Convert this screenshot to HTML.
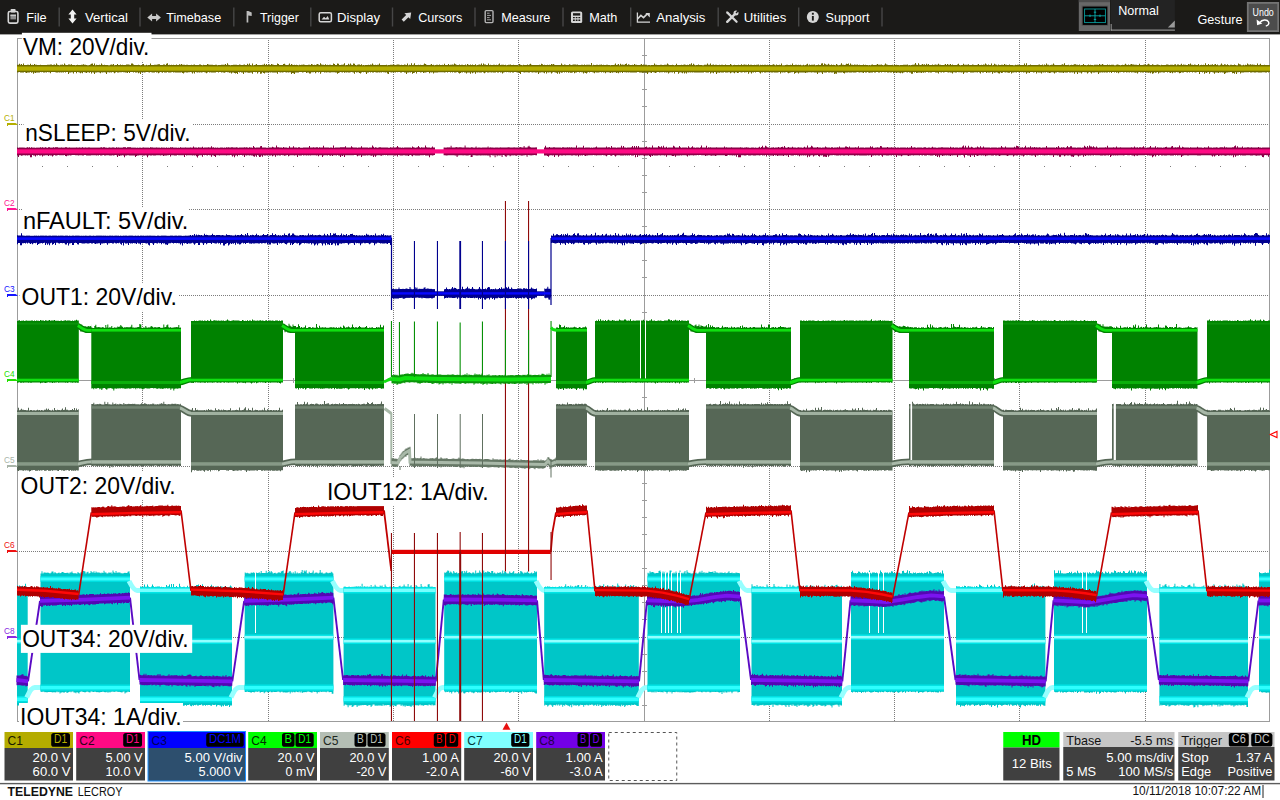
<!DOCTYPE html><html><head><meta charset="utf-8"><title>Teledyne LeCroy oscilloscope capture</title>
<style>html,body{margin:0;padding:0;background:#fff;overflow:hidden}svg{display:block}text{font-family:"Liberation Sans",Arial,sans-serif}</style></head><body>
<svg width="1280" height="800" viewBox="0 0 1280 800">
<rect width="1280" height="800" fill="#fff"/>
<g id="grid">
<rect x="17.5" y="38.5" width="1252" height="683" fill="#fff" stroke="#9c9c9c" stroke-width="1"/>
<line x1="142.5" y1="40" x2="142.5" y2="721" stroke="#7c7c7c" stroke-width="1" stroke-dasharray="1 1"/>
<line x1="268.5" y1="40" x2="268.5" y2="721" stroke="#7c7c7c" stroke-width="1" stroke-dasharray="1 1"/>
<line x1="393.5" y1="40" x2="393.5" y2="721" stroke="#7c7c7c" stroke-width="1" stroke-dasharray="1 1"/>
<line x1="518.5" y1="40" x2="518.5" y2="721" stroke="#7c7c7c" stroke-width="1" stroke-dasharray="1 1"/>
<rect x="644" y="39" width="1" height="682" fill="#9c9c9c"/>
<line x1="769.5" y1="40" x2="769.5" y2="721" stroke="#7c7c7c" stroke-width="1" stroke-dasharray="1 1"/>
<line x1="894.5" y1="40" x2="894.5" y2="721" stroke="#7c7c7c" stroke-width="1" stroke-dasharray="1 1"/>
<line x1="1019.5" y1="40" x2="1019.5" y2="721" stroke="#7c7c7c" stroke-width="1" stroke-dasharray="1 1"/>
<line x1="1145.5" y1="40" x2="1145.5" y2="721" stroke="#7c7c7c" stroke-width="1" stroke-dasharray="1 1"/>
<line x1="19" y1="124.5" x2="1269" y2="124.5" stroke="#7c7c7c" stroke-width="1" stroke-dasharray="1 1"/>
<line x1="19" y1="209.5" x2="1269" y2="209.5" stroke="#7c7c7c" stroke-width="1" stroke-dasharray="1 1"/>
<line x1="19" y1="295.5" x2="1269" y2="295.5" stroke="#7c7c7c" stroke-width="1" stroke-dasharray="1 1"/>
<rect x="18" y="380" width="1251" height="1" fill="#9c9c9c"/>
<line x1="19" y1="466.5" x2="1269" y2="466.5" stroke="#7c7c7c" stroke-width="1" stroke-dasharray="1 1"/>
<line x1="19" y1="551.5" x2="1269" y2="551.5" stroke="#7c7c7c" stroke-width="1" stroke-dasharray="1 1"/>
<line x1="19" y1="637.5" x2="1269" y2="637.5" stroke="#7c7c7c" stroke-width="1" stroke-dasharray="1 1"/>
<rect x="642" y="55" width="5" height="1" fill="#9c9c9c"/>
<rect x="642" y="72" width="5" height="1" fill="#9c9c9c"/>
<rect x="642" y="89" width="5" height="1" fill="#9c9c9c"/>
<rect x="642" y="106" width="5" height="1" fill="#9c9c9c"/>
<rect x="642" y="141" width="5" height="1" fill="#9c9c9c"/>
<rect x="642" y="158" width="5" height="1" fill="#9c9c9c"/>
<rect x="642" y="175" width="5" height="1" fill="#9c9c9c"/>
<rect x="642" y="192" width="5" height="1" fill="#9c9c9c"/>
<rect x="642" y="226" width="5" height="1" fill="#9c9c9c"/>
<rect x="642" y="243" width="5" height="1" fill="#9c9c9c"/>
<rect x="642" y="260" width="5" height="1" fill="#9c9c9c"/>
<rect x="642" y="277" width="5" height="1" fill="#9c9c9c"/>
<rect x="642" y="312" width="5" height="1" fill="#9c9c9c"/>
<rect x="642" y="329" width="5" height="1" fill="#9c9c9c"/>
<rect x="642" y="346" width="5" height="1" fill="#9c9c9c"/>
<rect x="642" y="363" width="5" height="1" fill="#9c9c9c"/>
<rect x="642" y="397" width="5" height="1" fill="#9c9c9c"/>
<rect x="642" y="414" width="5" height="1" fill="#9c9c9c"/>
<rect x="642" y="431" width="5" height="1" fill="#9c9c9c"/>
<rect x="642" y="448" width="5" height="1" fill="#9c9c9c"/>
<rect x="642" y="483" width="5" height="1" fill="#9c9c9c"/>
<rect x="642" y="500" width="5" height="1" fill="#9c9c9c"/>
<rect x="642" y="517" width="5" height="1" fill="#9c9c9c"/>
<rect x="642" y="534" width="5" height="1" fill="#9c9c9c"/>
<rect x="642" y="568" width="5" height="1" fill="#9c9c9c"/>
<rect x="642" y="585" width="5" height="1" fill="#9c9c9c"/>
<rect x="642" y="602" width="5" height="1" fill="#9c9c9c"/>
<rect x="642" y="619" width="5" height="1" fill="#9c9c9c"/>
<rect x="642" y="654" width="5" height="1" fill="#9c9c9c"/>
<rect x="642" y="671" width="5" height="1" fill="#9c9c9c"/>
<rect x="642" y="688" width="5" height="1" fill="#9c9c9c"/>
<rect x="642" y="705" width="5" height="1" fill="#9c9c9c"/>
<rect x="42" y="378" width="1" height="5" fill="#9c9c9c"/>
<rect x="42" y="166" width="1" height="1" fill="#7c7c7c"/>
<rect x="67" y="378" width="1" height="5" fill="#9c9c9c"/>
<rect x="67" y="166" width="1" height="1" fill="#7c7c7c"/>
<rect x="92" y="378" width="1" height="5" fill="#9c9c9c"/>
<rect x="92" y="166" width="1" height="1" fill="#7c7c7c"/>
<rect x="117" y="378" width="1" height="5" fill="#9c9c9c"/>
<rect x="117" y="166" width="1" height="1" fill="#7c7c7c"/>
<rect x="167" y="378" width="1" height="5" fill="#9c9c9c"/>
<rect x="167" y="166" width="1" height="1" fill="#7c7c7c"/>
<rect x="192" y="378" width="1" height="5" fill="#9c9c9c"/>
<rect x="192" y="166" width="1" height="1" fill="#7c7c7c"/>
<rect x="217" y="378" width="1" height="5" fill="#9c9c9c"/>
<rect x="217" y="166" width="1" height="1" fill="#7c7c7c"/>
<rect x="243" y="378" width="1" height="5" fill="#9c9c9c"/>
<rect x="243" y="166" width="1" height="1" fill="#7c7c7c"/>
<rect x="293" y="378" width="1" height="5" fill="#9c9c9c"/>
<rect x="293" y="166" width="1" height="1" fill="#7c7c7c"/>
<rect x="318" y="378" width="1" height="5" fill="#9c9c9c"/>
<rect x="318" y="166" width="1" height="1" fill="#7c7c7c"/>
<rect x="343" y="378" width="1" height="5" fill="#9c9c9c"/>
<rect x="343" y="166" width="1" height="1" fill="#7c7c7c"/>
<rect x="368" y="378" width="1" height="5" fill="#9c9c9c"/>
<rect x="368" y="166" width="1" height="1" fill="#7c7c7c"/>
<rect x="418" y="378" width="1" height="5" fill="#9c9c9c"/>
<rect x="418" y="166" width="1" height="1" fill="#7c7c7c"/>
<rect x="443" y="378" width="1" height="5" fill="#9c9c9c"/>
<rect x="443" y="166" width="1" height="1" fill="#7c7c7c"/>
<rect x="468" y="378" width="1" height="5" fill="#9c9c9c"/>
<rect x="468" y="166" width="1" height="1" fill="#7c7c7c"/>
<rect x="493" y="378" width="1" height="5" fill="#9c9c9c"/>
<rect x="493" y="166" width="1" height="1" fill="#7c7c7c"/>
<rect x="543" y="378" width="1" height="5" fill="#9c9c9c"/>
<rect x="543" y="166" width="1" height="1" fill="#7c7c7c"/>
<rect x="568" y="378" width="1" height="5" fill="#9c9c9c"/>
<rect x="568" y="166" width="1" height="1" fill="#7c7c7c"/>
<rect x="593" y="378" width="1" height="5" fill="#9c9c9c"/>
<rect x="593" y="166" width="1" height="1" fill="#7c7c7c"/>
<rect x="618" y="378" width="1" height="5" fill="#9c9c9c"/>
<rect x="618" y="166" width="1" height="1" fill="#7c7c7c"/>
<rect x="669" y="378" width="1" height="5" fill="#9c9c9c"/>
<rect x="669" y="166" width="1" height="1" fill="#7c7c7c"/>
<rect x="694" y="378" width="1" height="5" fill="#9c9c9c"/>
<rect x="694" y="166" width="1" height="1" fill="#7c7c7c"/>
<rect x="719" y="378" width="1" height="5" fill="#9c9c9c"/>
<rect x="719" y="166" width="1" height="1" fill="#7c7c7c"/>
<rect x="744" y="378" width="1" height="5" fill="#9c9c9c"/>
<rect x="744" y="166" width="1" height="1" fill="#7c7c7c"/>
<rect x="794" y="378" width="1" height="5" fill="#9c9c9c"/>
<rect x="794" y="166" width="1" height="1" fill="#7c7c7c"/>
<rect x="819" y="378" width="1" height="5" fill="#9c9c9c"/>
<rect x="819" y="166" width="1" height="1" fill="#7c7c7c"/>
<rect x="844" y="378" width="1" height="5" fill="#9c9c9c"/>
<rect x="844" y="166" width="1" height="1" fill="#7c7c7c"/>
<rect x="869" y="378" width="1" height="5" fill="#9c9c9c"/>
<rect x="869" y="166" width="1" height="1" fill="#7c7c7c"/>
<rect x="919" y="378" width="1" height="5" fill="#9c9c9c"/>
<rect x="919" y="166" width="1" height="1" fill="#7c7c7c"/>
<rect x="944" y="378" width="1" height="5" fill="#9c9c9c"/>
<rect x="944" y="166" width="1" height="1" fill="#7c7c7c"/>
<rect x="969" y="378" width="1" height="5" fill="#9c9c9c"/>
<rect x="969" y="166" width="1" height="1" fill="#7c7c7c"/>
<rect x="994" y="378" width="1" height="5" fill="#9c9c9c"/>
<rect x="994" y="166" width="1" height="1" fill="#7c7c7c"/>
<rect x="1044" y="378" width="1" height="5" fill="#9c9c9c"/>
<rect x="1044" y="166" width="1" height="1" fill="#7c7c7c"/>
<rect x="1070" y="378" width="1" height="5" fill="#9c9c9c"/>
<rect x="1070" y="166" width="1" height="1" fill="#7c7c7c"/>
<rect x="1095" y="378" width="1" height="5" fill="#9c9c9c"/>
<rect x="1095" y="166" width="1" height="1" fill="#7c7c7c"/>
<rect x="1120" y="378" width="1" height="5" fill="#9c9c9c"/>
<rect x="1120" y="166" width="1" height="1" fill="#7c7c7c"/>
<rect x="1170" y="378" width="1" height="5" fill="#9c9c9c"/>
<rect x="1170" y="166" width="1" height="1" fill="#7c7c7c"/>
<rect x="1195" y="378" width="1" height="5" fill="#9c9c9c"/>
<rect x="1195" y="166" width="1" height="1" fill="#7c7c7c"/>
<rect x="1220" y="378" width="1" height="5" fill="#9c9c9c"/>
<rect x="1220" y="166" width="1" height="1" fill="#7c7c7c"/>
<rect x="1245" y="378" width="1" height="5" fill="#9c9c9c"/>
<rect x="1245" y="166" width="1" height="1" fill="#7c7c7c"/>
</g>
<g id="c7">
<path d="M17 585.2H18V587.4H19V585.5H20V587.5H21V586.1H22V585.8H23V586.7H24V586.8H25V583.8H26V586.8H27V587.1H27.7V704.9H27H26V705.7H25V705.3H24V705.5H23V704.9H22V705.3H21V705.1H20V704.8H19V705.4H18H17V704.8Z" fill="#00c6c8"/>
<rect x="17" y="587.1" width="10.7" height="6.4" fill="#00ecee" opacity="0.8"/>
<rect x="17" y="588.6" width="10.7" height="3.4" fill="#7dffff" opacity="0.95"/>
<rect x="17" y="638.4" width="10.7" height="5.6" fill="#00ecee" opacity="0.8"/>
<rect x="17" y="639.9" width="10.7" height="2.6" fill="#9cffff" opacity="0.95"/>
<rect x="17" y="696" width="10.7" height="6.5" fill="#00e6e8" opacity="0.8"/>
<rect x="17" y="697.5" width="10.7" height="3.5" fill="#30ffff" opacity="0.95"/>
<path d="M26.7 697.5 C29.2 692,31.7 687.6,34.7 687.6 L41.5 687.6" fill="none" stroke="#96ffff" stroke-width="5"/>
<path d="M40.5 573.4H41.5V571.3H42.5V573.5H43.5V572.6H44.5V572.5H45.5V572.7H46.5V572.8H47.5V572.5H48.5V573H49.5V573.5H50.5V572.8H51.5V571.5H52.5H53.5V573.2H54.5V572H55.5V573.1H56.5V573.5H57.5V572.9H58.5V572.5H59.5V573.2H60.5V573.1H61.5V571.9H62.5V572H63.5V572.8H64.5V573.1H65.5V572.9H66.5V572.7H67.5V572.8H68.5V573.5H69.5V572.6H70.5H71.5V571.4H72.5V573H73.5V573.4H74.5V573.1H75.5V573.5H76.5V573.6H77.5V572.1H78.5V573.1H79.5V573.4H80.5V572.3H81.5V572.7H82.5V571H83.5V570.9H84.5V571.5H85.5V573.6H86.5V572.3H87.5V571.7H88.5V573.4H89.5V572.9H90.5V571.1H91.5V572.3H92.5V572.6H93.5V571.3H94.5V573.1H95.5V571.4H96.5V572.4H97.5H98.5H99.5V572.8H100.5V573.3H101.5V572.4H102.5V573H103.5V570.8H104.5V572.4H105.5V572.6H106.5V573.4H107.5V573.2H108.5V572.3H109.5V573.1H110.5V572.3H111.5V573.4H112.5V570.4H113.5V572.3H114.5V573.1H115.5V570.9H116.5V572.8H117.5V572.4H118.5V572.5H119.5V572.6H120.5V573.3H121.5H122.5V573.4H123.5V573.1H124.5V572.8H125.5V573.1H126.5V572.9H127.5V571.8H128.5V571.3H129.5V573.4H130V692H129.5H128.5V691.6H127.5V692.2H126.5V692.4H125.5V693.4H124.5V691.6H123.5V691.8H122.5V692.4H121.5V692.2H120.5V692H119.5V691.7H118.5V692H117.5V691.6H116.5V691.5H115.5V691.7H114.5V692H113.5V691.5H112.5V691.8H111.5V691.7H110.5V692.5H109.5V691.8H108.5V692.7H107.5V691.7H106.5V692.2H105.5V692.3H104.5V691.9H103.5V691.6H102.5V692.1H101.5V692.1H100.5V692.3H99.5V692.5H98.5V692H97.5V692.3H96.5V691.9H95.5V691.6H94.5V692H93.5V692.1H92.5V691.5H91.5H90.5V692.5H89.5V692.3H88.5V691.8H87.5V691.6H86.5V692H85.5V692.6H84.5V692.1H83.5V692H82.5V691.6H81.5H80.5V692.1H79.5V693.4H78.5V692.7H77.5V692.1H76.5V693.2H75.5V692.4H74.5H73.5V691.5H72.5V691.6H71.5V692.3H70.5V691.6H69.5V692.1H68.5V692.5H67.5V693.1H66.5V691.7H65.5V692H64.5V693H63.5V692H62.5V692.5H61.5H60.5V693.5H59.5V691.7H58.5V692.3H57.5V691.6H56.5V692.3H55.5V692.5H54.5V692.1H53.5V692.4H52.5V692.2H51.5V692H50.5H49.5V692H48.5V692.1H47.5V692.4H46.5V692.1H45.5V692.3H44.5V691.7H43.5V691.6H42.5V692.1H41.5V691.8H40.5V692.2Z" fill="#00c6c8"/>
<rect x="40.5" y="576" width="89.5" height="6" fill="#00e4e6" opacity="0.8"/>
<rect x="40.5" y="577.5" width="89.5" height="3" fill="#3dffff" opacity="0.95"/>
<rect x="40.5" y="634.4" width="89.5" height="5.6" fill="#00ecee" opacity="0.8"/>
<rect x="40.5" y="635.9" width="89.5" height="2.6" fill="#9cffff" opacity="0.95"/>
<rect x="40.5" y="684.4" width="89.5" height="6.5" fill="#00e6e8" opacity="0.8"/>
<rect x="40.5" y="685.9" width="89.5" height="3.5" fill="#30ffff" opacity="0.95"/>
<path d="M129 581 C131.5 586,134 590.4,137 590.4 L141 590.4" fill="none" stroke="#96ffff" stroke-width="5"/>
<path d="M140 586.5H141V586.8H142V586.7H143V586.8H144V584.6H145V586.8H146V586.7H147V584.5H148V586.6H149V586.9H150V587.4H151V586.4H152V584.4H153V586.3H154V587H155V586.7H156V586.8H157V586.6H158H159H160V587.2H161V586.7H162V587.2H163V586.9H164V587.4H165V587.3H166V585H167V586.5H168V586.3H169V584.6H170V587.3H171V583.9H172V586.9H173V584H174V586.9H175H176V586.1H177V587.1H178V587.5H179V583.7H180V586.6H181V587.2H182V587H183V586.8H184H185V587.4H186V587.2H187V585.7H188V587.3H189V586.4H190V586.5H191V586.4H192V586.8H193V587.4H194V587H195V586.6H196V585H197V584.9H198V584.4H199V587.1H200V586.5H201V587.3H202V584.2H203V586.3H204V587.1H205V586.4H206V587.2H207V586.4H208V587H209V586.9H210V586.3H211V584.8H212V586.7H213V586.5H214V587H215V586.4H216H217V586.6H218V586.9H219V587.5H220V586.4H221V586.5H222V586.7H223V586.9H224V586.4H225V586.7H226V587H227V587.5H228V587.2H229V586.7H230V585.4H231V586.5H232V705.4H231H230V706.9H229V704.9H228V705.7H227V705.8H226V705.9H225V704.7H224V706.3H223V705.6H222V706.7H221V705.6H220V705.2H219V705.1H218V705.3H217V706.4H216V704.8H215V705H214V704.9H213V704.7H212V705.7H211V705.4H210V705.1H209H208V705.2H207V705H206V705.7H205V705H204V705.6H203H202V704.6H201V705H200H199V705.6H198H197V704.8H196V705.2H195V704.9H194V705.8H193V705.2H192V706.2H191V705.8H190V704.5H189V704.9H188V704.9H187V705.8H186V705H185V705.5H184V705.8H183V704.7H182V705.6H181V706.5H180V704.8H179V705H178V706H177V705.7H176V704.8H175V707.6H174V704.9H173V705H172V705H171V704.5H170V705.8H169V705H168V705.9H167V705.7H166V705.1H165V704.8H164H163V706.5H162V705.1H161V704.8H160V705.8H159V705.6H158V704.8H157V704.9H156V704.8H155V705.5H154V704.8H153V705.1H152V704.5H151V705.8H150V704.9H149V705.4H148V704.5H147V705.5H146V704.8H145V705.2H144V705.4H143V705.1H142V705.9H141V705H140V705.2Z" fill="#00c6c8"/>
<rect x="140" y="587.1" width="92" height="6.4" fill="#00ecee" opacity="0.8"/>
<rect x="140" y="588.6" width="92" height="3.4" fill="#7dffff" opacity="0.95"/>
<rect x="140" y="638.4" width="92" height="5.6" fill="#00ecee" opacity="0.8"/>
<rect x="140" y="639.9" width="92" height="2.6" fill="#9cffff" opacity="0.95"/>
<rect x="140" y="696" width="92" height="6.5" fill="#00e6e8" opacity="0.8"/>
<rect x="140" y="697.5" width="92" height="3.5" fill="#30ffff" opacity="0.95"/>
<path d="M231 697.5 C233.5 692,236 687.6,239 687.6 L245.7 687.6" fill="none" stroke="#96ffff" stroke-width="5"/>
<path d="M244.7 572.6H245.7V573.3H246.7V572.7H247.7V573.2H248.7V573.4H249.7H250.7V572.6H251.7V573.1H252.7V572.3H253.7V572.7H254.7V573.2H255.7V572.4H256.7V572.9H257.7V573.1H258.7V572.3H259.7V573.3H260.7V571H261.7V573H262.7H263.7V573H264.7V572.9H265.7V570.8H266.7V573.1H267.7V572.1H268.7V571.1H269.7V572.6H270.7V570.9H271.7V572.3H272.7V573.5H273.7V573.1H274.7V572.8H275.7V573.4H276.7V573.3H277.7V572.5H278.7V572.3H279.7V572.9H280.7V571.6H281.7V571H282.7V570.4H283.7V573.4H284.7V572.9H285.7V573.2H286.7V572.8H287.7V572.7H288.7V571.4H289.7V571H290.7V572.6H291.7V573.4H292.7V572.3H293.7V573.5H294.7V571.3H295.7V573.5H296.7V572.6H297.7V573.5H298.7V573.1H299.7V573.4H300.7V572.3H301.7V570H302.7V573H303.7V570.4H304.7V571.5H305.7V570.3H306.7V573.2H307.7V573.4H308.7V571.7H309.7V572.9H310.7V573.1H311.7V572.4H312.7V570.4H313.7V573.5H314.7V572.8H315.7V572.5H316.7V572.8H317.7V573.5H318.7V572.8H319.7V570H320.7V572.8H321.7V572.6H322.7V573.4H323.7V573.5H324.7V573.3H325.7V572.3H326.7V572.7H327.7V573.2H328.7V572.8H329.7V572.9H330.7V571.7H331.7V572.6H332.7V573.5H333.4V693.8H332.7H331.7V691.9H330.7V692.1H329.7V692.2H328.7V691.6H327.7H326.7V692.2H325.7V691.8H324.7H323.7V691.8H322.7V691.7H321.7V692H320.7V691.5H319.7V692.3H318.7V692H317.7V693.6H316.7V692H315.7V691.8H314.7V691.9H313.7V691.5H312.7V692.4H311.7V692.5H310.7V691.9H309.7V691.8H308.7V691.5H307.7V691.8H306.7V692.3H305.7V691.9H304.7V692.3H303.7H302.7V692.9H301.7V691.6H300.7V692.4H299.7V691.6H298.7V692.3H297.7V691.9H296.7V691.6H295.7V692.2H294.7H293.7V691.7H292.7V692.4H291.7V691.8H290.7V693.5H289.7V691.8H288.7V692.2H287.7V692.4H286.7H285.7V692.5H284.7V692.2H283.7V692.4H282.7V691.8H281.7H280.7V692.4H279.7V691.7H278.7V691.5H277.7V691.7H276.7V692.1H275.7V692H274.7V691.9H273.7V691.8H272.7V692.3H271.7V692.2H270.7V691.5H269.7V692.1H268.7V692.2H267.7H266.7V691.5H265.7V692.3H264.7V693.2H263.7V691.7H262.7V692.1H261.7H260.7V692.8H259.7V691.5H258.7H257.7V691.9H256.7V691.5H255.7V691.7H254.7V692.4H253.7V692.1H252.7V692.1H251.7V692.8H250.7V692.3H249.7V692.1H248.7V691.9H247.7V691.6H246.7V692.1H245.7H244.7V691.7Z" fill="#00c6c8"/>
<rect x="244.7" y="576" width="88.7" height="6" fill="#00e4e6" opacity="0.8"/>
<rect x="244.7" y="577.5" width="88.7" height="3" fill="#3dffff" opacity="0.95"/>
<rect x="244.7" y="634.4" width="88.7" height="5.6" fill="#00ecee" opacity="0.8"/>
<rect x="244.7" y="635.9" width="88.7" height="2.6" fill="#9cffff" opacity="0.95"/>
<rect x="244.7" y="684.4" width="88.7" height="6.5" fill="#00e6e8" opacity="0.8"/>
<rect x="244.7" y="685.9" width="88.7" height="3.5" fill="#30ffff" opacity="0.95"/>
<path d="M332.4 581 C334.9 586,337.4 590.4,340.4 590.4 L344.6 590.4" fill="none" stroke="#96ffff" stroke-width="5"/>
<path d="M343.6 586.7H344.6V586.4H345.6V587H346.6V587.2H347.6V586.9H348.6V586.6H349.6V587.1H350.6V587.3H351.6V586.7H352.6V587.3H353.6V586.6H354.6V587.3H355.6V585.9H356.6V587.1H357.6V586H358.6V587.2H359.6V585.9H360.6V587.3H361.6V583.7H362.6V587.4H363.6V586.3H364.6V586.6H365.6V587.3H366.6V586.2H367.6V587.5H368.6V586.6H369.6V586.9H370.6V585.1H371.6V587H372.6V586.4H373.6V586.8H374.6V584.8H375.6V586.4H376.6V586.7H377.6H378.6V587H379.6V585.5H380.6V586.6H381.6V585.5H382.6V587H383.6V587H384.6V584.4H385.6V586.6H386.6V586.9H387.6V587.5H388.6V587.3H389.6V586.4H390.6V587.4H391.6V586.9H392.6H393.6V586.5H394.6V587H395.6V587.2H396.6V587H397.6V587.4H398.6V586.3H399.6V585.8H400.6V587H401.6V586.4H402.6V586.6H403.6V584.5H404.6V586.6H405.6V586.6H406.6V586.7H407.6V583.9H408.6V587.1H409.6V586.5H410.6V585.3H411.6V587.3H412.6V587.1H413.6V587.2H414.6H415.6V585.1H416.6V586.3H417.6V586.9H418.6V586.7H419.6V587.1H420.6V584H421.6V586.4H422.6V587.3H423.6V586.7H424.6V586.4H425.6V586.8H426.6V587.2H427.6V584.4H428.6V583.9H429.6V586.8H430.6V586.7H431.6V586.6H432.6V587.3H433.6V586.9H434.6V587H435.5V705.3H434.6H433.6V705.6H432.6V704.6H431.6V705.6H430.6V705.1H429.6V704.5H428.6V705.6H427.6V705.3H426.6V705H425.6V705.1H424.6V705.3H423.6V705.9H422.6V705H421.6V705.5H420.6V704.6H419.6V705.3H418.6V705.8H417.6V705H416.6V705.4H415.6V705H414.6V706.9H413.6V705.3H412.6V705.8H411.6V707.1H410.6V706.2H409.6V705.7H408.6V705.9H407.6H406.6V705.5H405.6V706.7H404.6V705.5H403.6V706.2H402.6V704.8H401.6V706H400.6V704.6H399.6H398.6V704.5H397.6V704.8H396.6V706.2H395.6V705.9H394.6V705.3H393.6V705.8H392.6V705.3H391.6V706H390.6V706.8H389.6V705.1H388.6H387.6V704.9H386.6V705.6H385.6V705H384.6V705.8H383.6V704.6H382.6V705.9H381.6V705.4H380.6H379.6H378.6V705.4H377.6V705.8H376.6V705.4H375.6V705.8H374.6V704.5H373.6V704.6H372.6V705.7H371.6V706.9H370.6V705.3H369.6V704.9H368.6V705.6H367.6V705.9H366.6V704.9H365.6V705.1H364.6V704.9H363.6V705.3H362.6V705.1H361.6V705.6H360.6V705.2H359.6V705.7H358.6V705.4H357.6V707H356.6V705.2H355.6V705H354.6V705.5H353.6V706.5H352.6V707H351.6V705H350.6V705.4H349.6V705.2H348.6V707.2H347.6V705.2H346.6V704.7H345.6V704.6H344.6V705.7H343.6V705.3Z" fill="#00c6c8"/>
<rect x="343.6" y="587.1" width="91.9" height="6.4" fill="#00ecee" opacity="0.8"/>
<rect x="343.6" y="588.6" width="91.9" height="3.4" fill="#7dffff" opacity="0.95"/>
<rect x="343.6" y="638.4" width="91.9" height="5.6" fill="#00ecee" opacity="0.8"/>
<rect x="343.6" y="639.9" width="91.9" height="2.6" fill="#9cffff" opacity="0.95"/>
<rect x="343.6" y="696" width="91.9" height="6.5" fill="#00e6e8" opacity="0.8"/>
<rect x="343.6" y="697.5" width="91.9" height="3.5" fill="#30ffff" opacity="0.95"/>
<path d="M434.5 697.5 C437 692,439.5 687.6,442.5 687.6 L445.2 687.6" fill="none" stroke="#96ffff" stroke-width="5"/>
<path d="M444.2 572.5H445.2V572.7H446.2V571.7H447.2V570.6H448.2V570.8H449.2V572.7H450.2V571.4H451.2V572.6H452.2V573.5H453.2V571.1H454.2V572.4H455.2V572.9H456.2V572.3H457.2V573.4H458.2V573.1H459.2V573.1H460.2V570.8H461.2V571.5H462.2V571H463.2V573.2H464.2V571H465.2V572.5H466.2V570.8H467.2V573H468.2V572.6H469.2V572.2H470.2V573.1H471.2V573.5H472.2V572.5H473.2V572.4H474.2V573.5H475.2V570.6H476.2V573.3H477.2V572.8H478.2H479.2V570.5H480.2V572.2H481.2V573.3H482.2V572.4H483.2V570.5H484.2V572.7H485.2V571.9H486.2V572.6H487.2V571.2H488.2V571.8H489.2V572H490.2V573H491.2V570.9H492.2V570.9H493.2V573.3H494.2V572.5H495.2V573.4H496.2V573.5H497.2V572.5H498.2V573H499.2V572.5H500.2V572.2H501.2V573.5H502.2V570.6H503.2V573.3H504.2V571.2H505.2V571.9H506.2V573.2H507.2V573.5H508.2V573.5H509.2V571.5H510.2V572.7H511.2V573.1H512.2V572.3H513.2V571.1H514.2V573.5H515.2V573.2H516.2V573.6H517.2V573.2H518.2V572.5H519.2V573.4H520.2V570.9H521.2V571.4H522.2V572.5H523.2V573.5H524.2V572.4H525.2V572.8H526.2V572.5H527.2V571.4H528.2V573.1H529.2V573.5H530.2V573.2H531.2V572.5H532.2V573.6H533.2V573H534.2V571.1H535.2V572.2H536.2V571.5H537V693.5H536.2H535.2V692.7H534.2V691.9H533.2V692.3H532.2V691.8H531.2V692.1H530.2V691.8H529.2V692H528.2V691.9H527.2V692.4H526.2V691.9H525.2V692.5H524.2V692.1H523.2V691.5H522.2V693.8H521.2V692.3H520.2H519.2H518.2V692.3H517.2V692.1H516.2V691.9H515.2V691.7H514.2V692.5H513.2V691.6H512.2V691.9H511.2V692.5H510.2V693H509.2V691.8H508.2H507.2V692.1H506.2V692.4H505.2V691.5H504.2V691.9H503.2V691.7H502.2V691.8H501.2V692.1H500.2V692H499.2V691.7H498.2V692.1H497.2V692.3H496.2V692.6H495.2V691.9H494.2V691.6H493.2V692.2H492.2V691.8H491.2V692.5H490.2V693.1H489.2V691.8H488.2V691.9H487.2V691.8H486.2V692.4H485.2V691.8H484.2H483.2V693.4H482.2V692.3H481.2V692.4H480.2H479.2V692.2H478.2V692.7H477.2V692.1H476.2V691.7H475.2V692.5H474.2V693.2H473.2V692.4H472.2V692.5H471.2V691.8H470.2H469.2V692.4H468.2V692H467.2V691.9H466.2V692.4H465.2V693.5H464.2V693.3H463.2V691.6H462.2V692.4H461.2V692H460.2V692.4H459.2V693.6H458.2V692.1H457.2V691.5H456.2V692.2H455.2V692.5H454.2V691.6H453.2V691.7H452.2V693.5H451.2V692H450.2V692.5H449.2V691.6H448.2V691.9H447.2V691.8H446.2V692.3H445.2V691.6H444.2V691.9Z" fill="#00c6c8"/>
<rect x="444.2" y="576" width="92.8" height="6" fill="#00e4e6" opacity="0.8"/>
<rect x="444.2" y="577.5" width="92.8" height="3" fill="#3dffff" opacity="0.95"/>
<rect x="444.2" y="634.4" width="92.8" height="5.6" fill="#00ecee" opacity="0.8"/>
<rect x="444.2" y="635.9" width="92.8" height="2.6" fill="#9cffff" opacity="0.95"/>
<rect x="444.2" y="684.4" width="92.8" height="6.5" fill="#00e6e8" opacity="0.8"/>
<rect x="444.2" y="685.9" width="92.8" height="3.5" fill="#30ffff" opacity="0.95"/>
<path d="M536 581 C538.5 586,541 590.4,544 590.4 L545.2 590.4" fill="none" stroke="#96ffff" stroke-width="5"/>
<path d="M544.2 587.1H545.2V586.5H546.2V587.3H547.2V586.3H548.2V586.8H549.2V586.4H550.2V586.9H551.2H552.2V586.7H553.2V587.1H554.2H555.2V586.7H556.2V587.4H557.2V587H558.2V586.8H559.2V586.3H560.2V587H561.2V586.3H562.2V586.9H563.2V587.3H564.2V586.3H565.2V584.2H566.2V586.7H567.2V586.3H568.2V586.1H569.2V586.9H570.2V585.4H571.2V586.8H572.2V586.3H573.2V587.4H574.2V586.6H575.2V585.8H576.2V586.5H577.2V585.2H578.2V584.9H579.2V586.9H580.2V586.8H581.2V585.1H582.2V586.9H583.2H584.2V586.8H585.2V585.1H586.2V587.1H587.2V586.3H588.2V587.4H589.2V586.8H590.2V587H591.2V587.4H592.2V586.8H593.2V587H594.2V584.4H595.2V586.5H596.2V586.4H597.2V587.1H598.2V586.3H599.2V585.2H600.2V585.7H601.2V586.4H602.2V586H603.2V584.2H604.2V587.2H605.2V587.4H606.2V587H607.2V584.9H608.2V586.5H609.2V587.1H610.2V586.7H611.2V587.3H612.2V584.9H613.2V587.3H614.2V586.5H615.2V587.3H616.2V586.6H617.2V583.5H618.2V585.5H619.2V587.3H620.2V587.2H621.2V586.8H622.2V587.2H623.2H624.2V587.4H625.2V584.5H626.2V587H627.2V586.8H628.2V586.5H629.2H630.2V585H631.2V587.1H632.2V586.2H633.2V585.1H634.2V587.2H635.2V586.4H636.2H637.2V587.3H638.2V586.7H638.8V705.9H638.2H637.2V705.8H636.2V705.1H635.2V704.6H634.2V705H633.2V705.1H632.2V704.7H631.2V705.7H630.2V705.1H629.2H628.2V705.4H627.2V705.1H626.2V705.7H625.2V707H624.2V705.1H623.2V705.9H622.2V704.7H621.2V706.6H620.2V705.7H619.2V705.8H618.2V705.5H617.2V705.4H616.2V705.9H615.2V705H614.2H613.2V705.7H612.2V705H611.2V705.7H610.2V704.7H609.2V705.7H608.2V704.8H607.2V705.7H606.2V706.1H605.2V704.9H604.2V705.8H603.2V705.4H602.2V706.9H601.2V705.1H600.2V704.7H599.2V705.9H598.2V704.6H597.2V705.9H596.2V704.8H595.2V705.2H594.2V705.7H593.2V704.8H592.2V704.6H591.2V705H590.2V704.7H589.2V705.6H588.2V705.3H587.2V704.7H586.2V705.3H585.2V705H584.2V706.8H583.2V705H582.2V705.1H581.2V704.8H580.2V705.4H579.2V706.2H578.2V705.1H577.2V705.5H576.2V705.4H575.2V705.3H574.2V705.6H573.2V704.6H572.2V707.2H571.2V705.1H570.2V706.4H569.2V705.7H568.2V705.5H567.2V705.1H566.2V704.6H565.2V705.7H564.2V705.1H563.2V706.8H562.2V704.8H561.2V704.7H560.2V705.8H559.2V704.6H558.2V705.6H557.2V704.5H556.2V705.5H555.2V704.9H554.2V705.3H553.2V706.9H552.2V705.6H551.2V704.8H550.2V704.8H549.2V705.5H548.2V706.4H547.2V705H546.2V704.8H545.2V705.4H544.2V705Z" fill="#00c6c8"/>
<rect x="544.2" y="587.1" width="94.5" height="6.4" fill="#00ecee" opacity="0.8"/>
<rect x="544.2" y="588.6" width="94.5" height="3.4" fill="#7dffff" opacity="0.95"/>
<rect x="544.2" y="638.4" width="94.5" height="5.6" fill="#00ecee" opacity="0.8"/>
<rect x="544.2" y="639.9" width="94.5" height="2.6" fill="#9cffff" opacity="0.95"/>
<rect x="544.2" y="696" width="94.5" height="6.5" fill="#00e6e8" opacity="0.8"/>
<rect x="544.2" y="697.5" width="94.5" height="3.5" fill="#30ffff" opacity="0.95"/>
<path d="M637.8 697.5 C640.2 692,642.8 687.6,645.8 687.6 L648.5 687.6" fill="none" stroke="#96ffff" stroke-width="5"/>
<path d="M647.5 572.8H648.5V573.5H649.5V571.3H650.5V572.4H651.5V571.9H652.5V572H653.5V572.7H654.5V573.5H655.5V573.1H656.5V573.1H657.5V572.9H658.5V571.1H659.5V570.6H660.5V571.9H661.5V573.3H662.5V571.4H663.5V573.5H664.5V571.8H665.5V573.5H666.5V572.5H667.5V572.7H668.5V573.5H669.5V570.5H670.5V570.6H671.5V572.9H672.5V573.4H673.5V572.6H674.5V573.6H675.5V571.5H676.5V573H677.5V572.8H678.5V572.9H679.5V570.5H680.5V573.2H681.5V572.7H682.5V573.4H683.5V572.6H684.5V571.1H685.5V573.5H686.5V570.2H687.5V572.2H688.5V573H689.5V572.8H690.5V573.5H691.5V573.4H692.5V573.2H693.5V570.8H694.5V572.9H695.5V572.5H696.5V573.6H697.5V573.4H698.5V572.5H699.5V571.4H700.5V572.7H701.5V570.8H702.5V573.1H703.5V571.9H704.5V573.3H705.5V572.4H706.5V573.1H707.5V572.8H708.5V571.6H709.5V572H710.5H711.5V572H712.5V571.5H713.5V572.9H714.5V570.9H715.5V572.6H716.5H717.5V572.8H718.5V573.2H719.5V572.5H720.5V572.7H721.5V572.6H722.5V572.9H723.5V573.1H724.5V572.2H725.5V573.2H726.5V573H727.5V572.4H728.5V571.2H729.5V573H730.5V572.9H731.5V572.6H732.5V573.2H733.5V572.9H734.5V573.2H735.5V572.4H736.5V572.8H737.5V573.1H738.5V573H739.5V573.5H740V692H739.5H738.5V692.6H737.5V691.6H736.5H735.5H734.5H733.5V691.8H732.5V693.2H731.5V691.7H730.5V691.5H729.5V692.3H728.5V691.5H727.5V692.4H726.5H725.5V691.6H724.5V692.7H723.5V691.7H722.5V693.9H721.5V692H720.5V692.4H719.5H718.5V691.9H717.5V691.7H716.5V692.1H715.5H714.5V691.7H713.5V692H712.5V691.8H711.5V692.3H710.5V692.4H709.5V691.7H708.5V691.7H707.5V691.8H706.5V692.3H705.5V691.7H704.5H703.5H702.5V692.4H701.5V691.9H700.5V691.6H699.5V691.9H698.5V691.6H697.5H696.5V691.8H695.5V692.3H694.5V692.1H693.5V692.5H692.5V692.3H691.5V692.5H690.5V692.8H689.5V692.4H688.5V692.1H687.5V692.4H686.5V692.3H685.5V692.5H684.5V692.3H683.5V692H682.5V692.5H681.5V691.8H680.5V692.5H679.5V691.8H678.5V692.3H677.5V691.8H676.5V691.8H675.5V692.2H674.5V692.1H673.5V691.9H672.5V693.5H671.5V691.8H670.5V692.2H669.5V691.6H668.5V692.1H667.5V693.4H666.5V692.1H665.5V691.8H664.5V691.5H663.5V692.5H662.5V691.9H661.5V692.2H660.5V691.7H659.5V692.1H658.5V692H657.5V691.6H656.5V692.4H655.5V691.6H654.5V692.5H653.5V691.7H652.5V692.4H651.5V691.7H650.5H649.5H648.5V692H647.5V692.4Z" fill="#00c6c8"/>
<rect x="647.5" y="576" width="92.5" height="6" fill="#00e4e6" opacity="0.8"/>
<rect x="647.5" y="577.5" width="92.5" height="3" fill="#3dffff" opacity="0.95"/>
<rect x="647.5" y="634.4" width="92.5" height="5.6" fill="#00ecee" opacity="0.8"/>
<rect x="647.5" y="635.9" width="92.5" height="2.6" fill="#9cffff" opacity="0.95"/>
<rect x="647.5" y="684.4" width="92.5" height="6.5" fill="#00e6e8" opacity="0.8"/>
<rect x="647.5" y="685.9" width="92.5" height="3.5" fill="#30ffff" opacity="0.95"/>
<path d="M739 581 C741.5 586,744 590.4,747 590.4 L752.5 590.4" fill="none" stroke="#96ffff" stroke-width="5"/>
<path d="M751.5 584.2H752.5V586.4H753.5V586.4H754.5V585.9H755.5V587H756.5V585H757.5V586.7H758.5V586.8H759.5V586.3H760.5V586.6H761.5V587.1H762.5V586.3H763.5V587H764.5V587.3H765.5V587.5H766.5V584.6H767.5V586.5H768.5V587.4H769.5V586.6H770.5V587.4H771.5V587.1H772.5V586.8H773.5V584.1H774.5V586.5H775.5V586.8H776.5V587.2H777.5V586.6H778.5H779.5V586.9H780.5V586.7H781.5V586.7H782.5V587.2H783.5H784.5V586.9H785.5V586.9H786.5V584.5H787.5V586.9H788.5H789.5V584.7H790.5V586.9H791.5V586.5H792.5V585.3H793.5V586.5H794.5V586.6H795.5V587.4H796.5V586.5H797.5V585.8H798.5V586.3H799.5V587H800.5V586.5H801.5V587.3H802.5V587.1H803.5V587.2H804.5V587.1H805.5V585.8H806.5V585.3H807.5V587.2H808.5H809.5V587.4H810.5V585.2H811.5V586.5H812.5V585.7H813.5V587.1H814.5V587.1H815.5V586.7H816.5V587.1H817.5V586.8H818.5V587.3H819.5V586.6H820.5V586.7H821.5V587.4H822.5V587H823.5V586.9H824.5V584.8H825.5V586.9H826.5V586.5H827.5V586.9H828.5H829.5V586.9H830.5V586.7H831.5V585H832.5V586.8H833.5V585.9H834.5V587.4H835.5V585.1H836.5V584.8H837.5V586.6H838.5V587.4H839.5V587H840.5V586.3H841.5V585.5H842V705.6H841.5H840.5V704.8H839.5V706.8H838.5V705.2H837.5V704.5H836.5V704.7H835.5V704.8H834.5V705.3H833.5V705.2H832.5V707.4H831.5V705.7H830.5V705.2H829.5V704.8H828.5V705.2H827.5V704.7H826.5V706.1H825.5V706.6H824.5V705.3H823.5V705.7H822.5V705.8H821.5V705.7H820.5V705H819.5V704.7H818.5H817.5V706.1H816.5V705.6H815.5V704.6H814.5V705.9H813.5V707H812.5V705.1H811.5V704.6H810.5V705.8H809.5H808.5V706.9H807.5V705.7H806.5V704.9H805.5V705.5H804.5V705.7H803.5V704.6H802.5V705.2H801.5V705H800.5V705.2H799.5V705.9H798.5V704.7H797.5V706.9H796.5V705.5H795.5V706.1H794.5V705.4H793.5V704.5H792.5V705.9H791.5V704.7H790.5V705H789.5V706.9H788.5V705.3H787.5V704.9H786.5V707H785.5V705.6H784.5V704.9H783.5V705.1H782.5V705.6H781.5V705H780.5V704.7H779.5V704.8H778.5V705.4H777.5V705.2H776.5V705.3H775.5V704.8H774.5V704.6H773.5V706.9H772.5V704.6H771.5V705.1H770.5H769.5V705.6H768.5V704.9H767.5H766.5V705.3H765.5H764.5V705.8H763.5V704.8H762.5V705H761.5V705.2H760.5V705H759.5V705.7H758.5H757.5H756.5V704.6H755.5V705.2H754.5V705.7H753.5V704.9H752.5V704.9H751.5V707Z" fill="#00c6c8"/>
<rect x="751.5" y="587.1" width="90.5" height="6.4" fill="#00ecee" opacity="0.8"/>
<rect x="751.5" y="588.6" width="90.5" height="3.4" fill="#7dffff" opacity="0.95"/>
<rect x="751.5" y="638.4" width="90.5" height="5.6" fill="#00ecee" opacity="0.8"/>
<rect x="751.5" y="639.9" width="90.5" height="2.6" fill="#9cffff" opacity="0.95"/>
<rect x="751.5" y="696" width="90.5" height="6.5" fill="#00e6e8" opacity="0.8"/>
<rect x="751.5" y="697.5" width="90.5" height="3.5" fill="#30ffff" opacity="0.95"/>
<path d="M841 697.5 C843.5 692,846 687.6,849 687.6 L852 687.6" fill="none" stroke="#96ffff" stroke-width="5"/>
<path d="M851 572H852V570.7H853V572.7H854V573.2H855V573H856V573.6H857V573.1H858V571.6H859V571.8H860V572.8H861V573.2H862V572.3H863V573H864V572.6H865H866V573.3H867V572.5H868V573.5H869V570.6H870V572.7H871V573.4H872V572.4H873V572.6H874V572.6H875V573H876V572.6H877V573.2H878V572.9H879V573.4H880V570.4H881V572.1H882V573.3H883V572.4H884V572.7H885V572.6H886V572.7H887V572.5H888V573.5H889V572.5H890V572.8H891V571.3H892V571.5H893V573.1H894V573H895V573.3H896V572.5H897H898V572.7H899V572.7H900V573.4H901V573.5H902V570.9H903V570.8H904V572.8H905V573.1H906V572.4H907V570.2H908V573.4H909V571.1H910V573H911V573.3H912V573.5H913V572.5H914V573.1H915V572.4H916V573.5H917V573H918V573.1H919V572.8H920V572.9H921V572.4H922V573.1H923V573.5H924V572.7H925V573H926V572.4H927V571.8H928V573.4H929V570.9H930V571.8H931V572.6H932V573.2H933H934V573.1H935V572.8H936H937V572.3H938V572.3H939V572.9H940V572.6H941V573.4H942V570.5H943V573.4H944V691.7H943H942V691.8H941V692.2H940V691.5H939V692.5H938V692.4H937V692.2H936H935V691.8H934V692.2H933V691.9H932V692.2H931V691.8H930V691.7H929V692H928V692.2H927V691.6H926V691.6H925V691.8H924V692.3H923V692.4H922V692.1H921V691.9H920V692.2H919V692.9H918V691.5H917H916V692.3H915V691.7H914H913V691.8H912V692.1H911V691.6H910V691.5H909V692.1H908V691.6H907V691.6H906V692.8H905V691.6H904V691.9H903V692.5H902V691.6H901V691.7H900V692.3H899V692.7H898V692.2H897V691.6H896V692.1H895V692.2H894V692.4H893V692.3H892V691.7H891V692.3H890V691.8H889V691.9H888V692.2H887V692H886V691.6H885V691.6H884V692.2H883V692H882V691.7H881V692.3H880V691.8H879V692.4H878V692.3H877V692.1H876H875V691.6H874V691.9H873V692.3H872V692.6H871V692.4H870V692.1H869V691.5H868V691.8H867H866V692.4H865V691.8H864V692.2H863V692H862V693H861V692.1H860V692H859V691.7H858V692.5H857V691.9H856V692.3H855V691.7H854V691.8H853V692.5H852V691.9H851V691.6Z" fill="#00c6c8"/>
<rect x="851" y="576" width="93" height="6" fill="#00e4e6" opacity="0.8"/>
<rect x="851" y="577.5" width="93" height="3" fill="#3dffff" opacity="0.95"/>
<rect x="851" y="634.4" width="93" height="5.6" fill="#00ecee" opacity="0.8"/>
<rect x="851" y="635.9" width="93" height="2.6" fill="#9cffff" opacity="0.95"/>
<rect x="851" y="684.4" width="93" height="6.5" fill="#00e6e8" opacity="0.8"/>
<rect x="851" y="685.9" width="93" height="3.5" fill="#30ffff" opacity="0.95"/>
<path d="M943 581 C945.5 586,948 590.4,951 590.4 L957 590.4" fill="none" stroke="#96ffff" stroke-width="5"/>
<path d="M956 586.3H957V586.4H958H959V586.6H960V587.3H961V586.9H962V586.4H963V586.9H964V585.7H965V586.1H966V587.5H967V586.6H968V586.3H969V586.6H970V586.5H971V586.7H972V586.8H973V587.5H974V586.6H975V587.4H976V585.9H977V586.8H978V586.9H979V584.5H980V585.3H981V586H982V586.8H983V586.7H984V587.4H985H986V587H987V584.7H988V586.7H989V587.3H990V586.1H991V585.1H992V586.6H993V586.7H994V584.5H995V586.4H996V587.2H997H998V586.4H999V585.9H1000V587.5H1001V587.4H1002V584.2H1003V587.3H1004V587.4H1005V586.4H1006V587.5H1007V586.8H1008V586.9H1009V586.8H1010V585.8H1011V587.2H1012V587.5H1013H1014V586.5H1015V587.4H1016V587.3H1017V587.4H1018V586.8H1019V587.4H1020V586.5H1021V587.4H1022V587.1H1023V587.3H1024V586.3H1025V587.2H1026V586.7H1027V586.9H1028V587H1029V586.7H1030V586.6H1031V586.4H1032V584.6H1033V586.5H1034V583.6H1035V587H1036V587.2H1037V587.1H1038V587.4H1039V586.3H1040V586.4H1041V586.5H1042V585.8H1043V586.3H1044V586.4H1045V587.1H1045.4V705.8H1045H1044V705.5H1043V704.7H1042V704.6H1041V706.2H1040V704.8H1039V705.8H1038V705.7H1037V705.8H1036V704.7H1035V705.3H1034V704.8H1033V705.5H1032V704.5H1031V705.4H1030V705.2H1029V704.7H1028V705.4H1027V704.9H1026V706.3H1025V705.8H1024V705.3H1023V704.7H1022V705.2H1021V707.4H1020V705.7H1019V705.5H1018V704.6H1017V705.8H1016V705H1015V705.2H1014V705.6H1013V705.7H1012V704.7H1011V704.5H1010V705.7H1009V704.6H1008V705.2H1007V705H1006V704.8H1005H1004V705H1003V705.6H1002V705.7H1001V704.9H1000V704.7H999V705H998V707.4H997V704.8H996V705.4H995V705.9H994V704.9H993V705.3H992V707H991V705.2H990V705.6H989V704.8H988V704.5H987V705H986V704.6H985V705.1H984V705.1H983V705.3H982V704.9H981V705.9H980V705.6H979V704.5H978V705H977V705.3H976H975V705.9H974V704.8H973V704.5H972V704.8H971V705.5H970V705.5H969V704.7H968V705.5H967V704.5H966V704.9H965V706.2H964V705.8H963H962V705.4H961V706.8H960V705H959V704.9H958V704.6H957V705.6H956Z" fill="#00c6c8"/>
<rect x="956" y="587.1" width="89.4" height="6.4" fill="#00ecee" opacity="0.8"/>
<rect x="956" y="588.6" width="89.4" height="3.4" fill="#7dffff" opacity="0.95"/>
<rect x="956" y="638.4" width="89.4" height="5.6" fill="#00ecee" opacity="0.8"/>
<rect x="956" y="639.9" width="89.4" height="2.6" fill="#9cffff" opacity="0.95"/>
<rect x="956" y="696" width="89.4" height="6.5" fill="#00e6e8" opacity="0.8"/>
<rect x="956" y="697.5" width="89.4" height="3.5" fill="#30ffff" opacity="0.95"/>
<path d="M1044.4 697.5 C1046.9 692,1049.4 687.6,1052.4 687.6 L1055 687.6" fill="none" stroke="#96ffff" stroke-width="5"/>
<path d="M1054 570.3H1055V573.3H1056V572.9H1057H1058V570.6H1059V573.3H1060V570.5H1061V573.2H1062H1063V573.6H1064V573.4H1065V573.6H1066V573.3H1067V572.9H1068V573.1H1069V572H1070V572.9H1071V571.8H1072V573.4H1073V573H1074V572.4H1075H1076V573.3H1077V570.7H1078V572.7H1079V573.2H1080V572.5H1081V572.9H1082V572.6H1083V572.3H1084V572.7H1085V572.6H1086V572.2H1087V572.4H1088V573.4H1089V572.3H1090V572.9H1091V573.5H1092V572.8H1093V572.7H1094V573.6H1095V572.7H1096V570.3H1097V571.5H1098V571.3H1099V572.3H1100V573.3H1101V573.1H1102V572H1103V573.2H1104V573.4H1105V571.5H1106V572.4H1107V573.1H1108V571.8H1109V573.6H1110V573.4H1111V572.3H1112V572.5H1113V572.8H1114V570.4H1115V571.1H1116V572.8H1117V572.5H1118V572H1119V572.5H1120V571.8H1121V572.9H1122V572.7H1123V571.1H1124V571.5H1125V572.9H1126V573.1H1127H1128V571.8H1129V570.6H1130V572.7H1131V570.5H1132V572.5H1133V572.7H1134V570.6H1135V571H1136V573.4H1137V572.6H1138V571.6H1139V572.4H1140V571.2H1141V572.2H1142V572.9H1143V573.6H1144V571.6H1145V572.7H1146V571.6H1147V691.9H1146H1145V691.7H1144V692.4H1143V692H1142V692.3H1141V693H1140V691.8H1139V692.4H1138H1137V691.8H1136V692.3H1135V692H1134V692.2H1133V691.8H1132V691.5H1131V692.3H1130V691.7H1129V692.3H1128V691.8H1127V692H1126V693.5H1125V692.2H1124V691.6H1123V692.3H1122V691.8H1121H1120V691.6H1119V691.9H1118V691.8H1117V692.3H1116V692.5H1115V692.4H1114V692.3H1113V692.1H1112V692.4H1111V692.2H1110V691.9H1109V691.8H1108V692.3H1107V692.5H1106V692.1H1105V691.5H1104V692.4H1103V691.9H1102V691.8H1101V693H1100V693.8H1099V691.8H1098V691.8H1097V693.7H1096V691.6H1095V692.2H1094V691.8H1093V692.5H1092V692.4H1091V692.2H1090V692.9H1089V692.2H1088H1087V692.6H1086V692.4H1085H1084V691.6H1083H1082H1081V692.3H1080V691.6H1079V692.1H1078V693.1H1077V691.5H1076V692.1H1075V691.6H1074V692.4H1073V691.9H1072V692.3H1071V692H1070V691.7H1069H1068V691.9H1067V692.4H1066V692.2H1065V692H1064V692.5H1063V692.4H1062V691.7H1061V692.4H1060V691.6H1059V691.8H1058V692.3H1057V692.2H1056V692.3H1055V691.7H1054V692.2Z" fill="#00c6c8"/>
<rect x="1054" y="576" width="93" height="6" fill="#00e4e6" opacity="0.8"/>
<rect x="1054" y="577.5" width="93" height="3" fill="#3dffff" opacity="0.95"/>
<rect x="1054" y="634.4" width="93" height="5.6" fill="#00ecee" opacity="0.8"/>
<rect x="1054" y="635.9" width="93" height="2.6" fill="#9cffff" opacity="0.95"/>
<rect x="1054" y="684.4" width="93" height="6.5" fill="#00e6e8" opacity="0.8"/>
<rect x="1054" y="685.9" width="93" height="3.5" fill="#30ffff" opacity="0.95"/>
<path d="M1146 581 C1148.5 586,1151 590.4,1154 590.4 L1160.4 590.4" fill="none" stroke="#96ffff" stroke-width="5"/>
<path d="M1159.4 583.9H1160.4V587.5H1161.4V587H1162.4V585.4H1163.4V586.5H1164.4V584.8H1165.4V583.9H1166.4V586.3H1167.4V587H1168.4V585.5H1169.4V587.1H1170.4V587.3H1171.4V586.9H1172.4V587.3H1173.4V586.3H1174.4V583.8H1175.4V586.8H1176.4V586.5H1177.4V586.3H1178.4V586.9H1179.4V586.4H1180.4V586.9H1181.4V584.9H1182.4V586.5H1183.4V585.9H1184.4V587H1185.4V586.9H1186.4V587.1H1187.4V585.8H1188.4V585.1H1189.4V584.7H1190.4V586.6H1191.4H1192.4V587.2H1193.4V583.6H1194.4V586.8H1195.4V586.5H1196.4V587.3H1197.4V586.7H1198.4V587.1H1199.4V586.7H1200.4V587H1201.4V586.5H1202.4H1203.4V585.5H1204.4V587H1205.4V586.9H1206.4V585.2H1207.4V587.1H1208.4V586.7H1209.4V587H1210.4H1211.4V586.7H1212.4V587.3H1213.4V584.3H1214.4V586.6H1215.4V586.7H1216.4V587H1217.4V587.1H1218.4V586.7H1219.4V585.3H1220.4V586.5H1221.4V586.8H1222.4V587.1H1223.4V586.8H1224.4V584.6H1225.4V585.6H1226.4V586.9H1227.4V587.1H1228.4H1229.4V586.4H1230.4V586.9H1231.4V587H1232.4V585.4H1233.4V587H1234.4V586.4H1235.4V587.2H1236.4V584.4H1237.4V587.3H1238.4V585.8H1239.4V585.2H1240.4V586.6H1241.4V586.4H1242.4V583.6H1243.4V584.7H1244.4V586.5H1245.4V587.4H1246.4V586.6H1247.4V586.2H1248V706.9H1247.4H1246.4V705H1245.4V704.7H1244.4V705.6H1243.4V705H1242.4V705.2H1241.4V705.6H1240.4V705.3H1239.4V704.7H1238.4V705.8H1237.4V705.1H1236.4V705.5H1235.4V705.6H1234.4V706.8H1233.4V705.2H1232.4V705.6H1231.4V705.4H1230.4V704.8H1229.4H1228.4V705.2H1227.4V704.7H1226.4V705.2H1225.4V704.7H1224.4H1223.4V705.8H1222.4V705.5H1221.4V705.2H1220.4V706.6H1219.4V704.6H1218.4V706.5H1217.4V705H1216.4V704.7H1215.4V705.3H1214.4V704.6H1213.4V704.7H1212.4V706.5H1211.4V705.1H1210.4V705.1H1209.4V705.6H1208.4V705.1H1207.4V705.8H1206.4V705H1205.4V705.4H1204.4V705.5H1203.4V706.3H1202.4V704.9H1201.4V705.1H1200.4V704.7H1199.4H1198.4V707.2H1197.4V705.3H1196.4H1195.4V706.9H1194.4V707.5H1193.4V705.2H1192.4V704.7H1191.4V704.9H1190.4V704.9H1189.4V705.9H1188.4V705.6H1187.4V705.8H1186.4V705H1185.4V705.4H1184.4V705.8H1183.4V705.1H1182.4V705.3H1181.4V705.1H1180.4V704.5H1179.4V705.6H1178.4V704.5H1177.4V705H1176.4V705.6H1175.4V705.7H1174.4V705.1H1173.4V705.3H1172.4V705.1H1171.4V705.6H1170.4V706.2H1169.4V706.5H1168.4V704.7H1167.4V705.8H1166.4V705.9H1165.4V704.9H1164.4V705.1H1163.4V705H1162.4V705.4H1161.4V704.8H1160.4V705.7H1159.4V705.9Z" fill="#00c6c8"/>
<rect x="1159.4" y="587.1" width="88.6" height="6.4" fill="#00ecee" opacity="0.8"/>
<rect x="1159.4" y="588.6" width="88.6" height="3.4" fill="#7dffff" opacity="0.95"/>
<rect x="1159.4" y="638.4" width="88.6" height="5.6" fill="#00ecee" opacity="0.8"/>
<rect x="1159.4" y="639.9" width="88.6" height="2.6" fill="#9cffff" opacity="0.95"/>
<rect x="1159.4" y="696" width="88.6" height="6.5" fill="#00e6e8" opacity="0.8"/>
<rect x="1159.4" y="697.5" width="88.6" height="3.5" fill="#30ffff" opacity="0.95"/>
<path d="M1247 697.5 C1249.5 692,1252 687.6,1255 687.6 L1260 687.6" fill="none" stroke="#96ffff" stroke-width="5"/>
<path d="M1259 572.3H1260V572.9H1261V573.2H1262H1263V572.9H1264V572.7H1265V572.4H1266V572.9H1267V572.7H1268V572.8H1269V569.8H1270V692.6H1269H1268V692.4H1267V692.7H1266V692.5H1265V692.2H1264H1263V692.4H1262V692.2H1261V691.6H1260V691.7H1259V692.4Z" fill="#00c6c8"/>
<rect x="1259" y="576" width="11" height="6" fill="#00e4e6" opacity="0.8"/>
<rect x="1259" y="577.5" width="11" height="3" fill="#3dffff" opacity="0.95"/>
<rect x="1259" y="634.4" width="11" height="5.6" fill="#00ecee" opacity="0.8"/>
<rect x="1259" y="635.9" width="11" height="2.6" fill="#9cffff" opacity="0.95"/>
<rect x="1259" y="684.4" width="11" height="6.5" fill="#00e6e8" opacity="0.8"/>
<rect x="1259" y="685.9" width="11" height="3.5" fill="#30ffff" opacity="0.95"/>
<rect x="255" y="572" width="1" height="61" fill="#ffffff"/>
<rect x="661" y="572" width="1" height="61" fill="#ffffff"/>
<rect x="665" y="572" width="1" height="61" fill="#ffffff"/>
<rect x="668" y="572" width="1" height="61" fill="#ffffff"/>
<rect x="671" y="572" width="1" height="61" fill="#ffffff"/>
<rect x="677" y="572" width="1" height="61" fill="#ffffff"/>
<rect x="680" y="572" width="1" height="61" fill="#ffffff"/>
<rect x="869" y="572" width="1" height="61" fill="#ffffff"/>
<rect x="878" y="572" width="1" height="61" fill="#ffffff"/>
<rect x="883" y="572" width="1" height="61" fill="#ffffff"/>
<rect x="1082" y="572" width="1" height="61" fill="#ffffff"/>
<rect x="1086" y="572" width="1" height="61" fill="#ffffff"/>
</g>
<g id="c8">
<polyline points="28,681.3 40,600.8" fill="none" stroke="#5a0ac4" stroke-width="1.9" stroke-linejoin="round"/>
<polyline points="130,597.7 139.5,680" fill="none" stroke="#5a0ac4" stroke-width="1.9" stroke-linejoin="round"/>
<polyline points="232.3,681.3 244.2,600.8" fill="none" stroke="#5a0ac4" stroke-width="1.9" stroke-linejoin="round"/>
<polyline points="333.4,597.7 343.1,680" fill="none" stroke="#5a0ac4" stroke-width="1.9" stroke-linejoin="round"/>
<polyline points="435.8,681.3 443.8,599.5" fill="none" stroke="#5a0ac4" stroke-width="1.9" stroke-linejoin="round"/>
<polyline points="537,600.4 543.8,680" fill="none" stroke="#5a0ac4" stroke-width="1.9" stroke-linejoin="round"/>
<polyline points="639,681.3 647,600.3" fill="none" stroke="#5a0ac4" stroke-width="1.9" stroke-linejoin="round"/>
<polyline points="740,596.6 751,680" fill="none" stroke="#5a0ac4" stroke-width="1.9" stroke-linejoin="round"/>
<polyline points="842.3,681.3 850.5,600.3" fill="none" stroke="#5a0ac4" stroke-width="1.9" stroke-linejoin="round"/>
<polyline points="944,596.4 955.5,680" fill="none" stroke="#5a0ac4" stroke-width="1.9" stroke-linejoin="round"/>
<polyline points="1045.7,681.3 1053.5,600.3" fill="none" stroke="#5a0ac4" stroke-width="1.9" stroke-linejoin="round"/>
<polyline points="1147,596.2 1158.9,680" fill="none" stroke="#5a0ac4" stroke-width="1.9" stroke-linejoin="round"/>
<polyline points="1248.3,681.3 1258.5,600.5" fill="none" stroke="#5a0ac4" stroke-width="1.9" stroke-linejoin="round"/>
<path d="M16.5 675.4H17.5V675.6H18.5H19.5V675.4H20.5V675.1H21.5V674.2H22.5H23.5V675.6H24.5V675.9H25.5V675.7H26.5V676.2H27.5V676.7H28V676.9V685.7H27.5V686H26.5V686.4H25.5V685.6H24.5V685.5H23.5V685.8H22.5V685.4H21.5H20.5V685H19.5V685.2H18.5V685H17.5V685.3H16.5V684.9Z" fill="#5208b2"/>
<polyline points="16.5,680 22.4,680.6 28,681.3" fill="none" stroke="#7a14f0" stroke-width="3.8"/>
<path d="M40 595.7H41V595.8H42V595.9H43V595.5H44V596H45V595H46V595.9H47V595.8H48V595.5H49V595.9H50V595.5H51V595.8H52V595.3H53V595.9H54V596H55V594.6H56V595.3H57V595.8H58V595.5H59V595.8H60V595.9H61V595.4H62V595.2H63V595.5H64V595.2H65V595.4H66V595.2H67H68V594.1H69V594.2H70V595.2H71V595.3H72V594.8H73V595.4H74H75V594.8H76V593.5H77V594.2H78V595.3H79V594.7H80H81H82V594.4H83V594.2H84V594.5H85V595.1H86V594H87V594.5H88V594.8H89V594.1H90H91H92V594H93H94V594.7H95V594.4H96V594.4H97V594.2H98V594.4H99V594.2H100V593.2H101V594.3H102V593.9H103V594H104V593.6H105V594H106V594H107V593.5H108H109V593.8H110V593.9H111V593.4H112V593.9H113V593.3H114V593.4H115V593.3H116V593.8H117H118V593.3H119V592.9H120V593.5H121V593.6H122V593H123V593.3H124V593.1H125V592.7H126H127V593H128V592.3H129V593.1H130V593.3V602.1H129V602.9H128V603.1H127H126V602.5H125V602.9H124V603.4H123V602.4H122V603.2H121H120V603.1H119V603H118V604.4H117V602.8H116V602.9H115V603.6H114V602.8H113V604.3H112V603.7H111V603.2H110V603.5H109V603.4H108V603.5H107V603.6H106V603.7H105V604.2H104V603.3H103V603.5H102V603.4H101H100V603.6H99V604H98V604.1H97H96V604.4H95V604.6H94V604.4H93H92V604.1H91V604.4H90V605.2H89V604.7H88V604.2H87H86V604.4H85V605.3H84V604.1H83V604.6H82V604.4H81V604.9H80H79V604.6H78V604.3H77V604.7H76V604.5H75V604.7H74V604.4H73V604.7H72V605.9H71V605.1H70V605.5H69V604.9H68V605.2H67V604.7H66V606H65V605.2H64V605.3H63V606.1H62V604.8H61H60V604.8H59V605H58H57V605.5H56V605.4H55V605.6H54V605.4H53V605.7H52V605.1H51V605.5H50V606.1H49V605.6H48V605.7H47V605.9H46V605.1H45V605.6H44V605.5H43V606.8H42V606.7H41V605.9H40Z" fill="#5208b2"/>
<polyline points="40,600.8 85.2,599.6 130,597.7" fill="none" stroke="#7a14f0" stroke-width="3.8"/>
<path d="M139.5 674.8H140.5V675H141.5V675.5H142.5V675.1H143.5V673.8H144.5V675.2H145.5V673.8H146.5V675.4H147.5V675H148.5V675.1H149.5V675.5H150.5V674.9H151.5V675.3H152.5V675.7H153.5V675.1H154.5V675.5H155.5H156.5V675.2H157.5V674H158.5V675.4H159.5V674.1H160.5V675.6H161.5V675.8H162.5V675.3H163.5V675.6H164.5V675.7H165.5V675.9H166.5V675.7H167.5V675.5H168.5V674.2H169.5V675.7H170.5V675.3H171.5H172.5V675.4H173.5V675.3H174.5H175.5H176.5V675.1H177.5V675.9H178.5V675.6H179.5H180.5V676.1H181.5V674.8H182.5V675.6H183.5V676H184.5V675.9H185.5V676H186.5V675.6H187.5V674.8H188.5H189.5V674.3H190.5V675.1H191.5V676.2H192.5H193.5V676.1H194.5V675.9H195.5V675.6H196.5V676.3H197.5V676.4H198.5V676.3H199.5V675.7H200.5V675.1H201.5V676.1H202.5H203.5V676.4H204.5V676H205.5V676.1H206.5V675.8H207.5V676.4H208.5V675.7H209.5V676H210.5V676.2H211.5V676.4H212.5V675.3H213.5V675.8H214.5V676.6H215.5V676.1H216.5V675.8H217.5V676H218.5V676.5H219.5V676.1H220.5V676.7H221.5V676.4H222.5V675.4H223.5V676.5H224.5H225.5V675H226.5V676.8H227.5V676.8H228.5V675.9H229.5V676.4H230.5V676.8H231.5V676.6H232.3V676.9V685.7H231.5V686.2H230.5V686.5H229.5V686.2H228.5V686.2H227.5V685.8H226.5V685.9H225.5V685.7H224.5V686.1H223.5V686.3H222.5V685.6H221.5V685.6H220.5V686.4H219.5H218.5V685.7H217.5V686H216.5V686.5H215.5V685.7H214.5V687.2H213.5V687H212.5V686.4H211.5V685.7H210.5H209.5V685.6H208.5V686.5H207.5V685.5H206.5V686.3H205.5V686.1H204.5V686H203.5V685.5H202.5V686H201.5V686H200.5H199.5V685.9H198.5V685.9H197.5V686.1H196.5H195.5V687H194.5V685.5H193.5V685.8H192.5V685.4H191.5H190.5V686.5H189.5V685.6H188.5V685.1H187.5V686.7H186.5V686.3H185.5V685.2H184.5V685.1H183.5V685.7H182.5V685.9H181.5V685.5H180.5V685.2H179.5V685.8H178.5H177.5V685.7H176.5V685.2H175.5V685.3H174.5V685H173.5V685.3H172.5V686.6H171.5V685.1H170.5H169.5V685.9H168.5V685.4H167.5H166.5V685.6H165.5V685.1H164.5V684.8H163.5V684.8H162.5V684.9H161.5V685.1H160.5V686.4H159.5V685H158.5H157.5V684.7H156.5V685.8H155.5V684.7H154.5V684.7H153.5V685.1H152.5V685.4H151.5V684.6H150.5V685H149.5V685.3H148.5V684.9H147.5V685.5H146.5V684.9H145.5V685.3H144.5H143.5V685.1H142.5V685.2H141.5V684.7H140.5V684.6H139.5V684.7Z" fill="#5208b2"/>
<polyline points="139.5,680 186,680.6 232.3,681.3" fill="none" stroke="#7a14f0" stroke-width="3.8"/>
<path d="M244.2 595.6H245.2V596.3H246.2V595.7H247.2H248.2V595.4H249.2V595.9H250.2V595.6H251.2V596.1H252.2V595.5H253.2V595.5H254.2V595.3H255.2V595.8H256.2V595.2H257.2V595.3H258.2V595.9H259.2V595.2H260.2V596H261.2V595.6H262.2H263.2V595.2H264.2V595.7H265.2V595.4H266.2V595.2H267.2V595.5H268.2V594.9H269.2V595.3H270.2V595.7H271.2V594.9H272.2V594.8H273.2V595.1H274.2V595.6H275.2V595.3H276.2V595.5H277.2V595.2H278.2V594H279.2V594.7H280.2V595.3H281.2V594.6H282.2V593.4H283.2V594.8H284.2V594.5H285.2H286.2V594.8H287.2V595H288.2V594.7H289.2H290.2V594.6H291.2H292.2V595H293.2V594.5H294.2V594.1H295.2V594.5H296.2V594.4H297.2V593.5H298.2V592.8H299.2V594.7H300.2V594H301.2V594.3H302.2V594H303.2H304.2H305.2V593.8H306.2V594.2H307.2V594.1H308.2V592.8H309.2V593.6H310.2V594.3H311.2V593.8H312.2V594.1H313.2V593.8H314.2V592.8H315.2V593.5H316.2V593.4H317.2V593.9H318.2V592.3H319.2V593.2H320.2V593H321.2V592.3H322.2V591.9H323.2V593H324.2V592.9H325.2V593.4H326.2V592.8H327.2V593H328.2V592.8H329.2V593.2H330.2V591.7H331.2V592.6H332.2V592.7H333.2V593.2H333.4V593.3V602.1H333.2V604.3H332.2V603H331.2V602.7H330.2V602.6H329.2H328.2H327.2V603H326.2V603.2H325.2V602.5H324.2V602.7H323.2V603.6H322.2V603.2H321.2V602.8H320.2V603H319.2V603.2H318.2V603.1H317.2V603.2H316.2V604.2H315.2V603.3H314.2V603.5H313.2V603H312.2V603H311.2V603.6H310.2V603.2H309.2V603.9H308.2V603.5H307.2V603.8H306.2H305.2V603.7H304.2V603.6H303.2V604.1H302.2V604H301.2H300.2V603.9H299.2V603.8H298.2V604H297.2V604.2H296.2V603.8H295.2V604.1H294.2V604.7H293.2V604.3H292.2V604.7H291.2V604.5H290.2V604.8H289.2V604.4H288.2V604.2H287.2V606.2H286.2V605.6H285.2V604.8H284.2V604.9H283.2H282.2V604.2H281.2V604.6H280.2V604.8H279.2V606.5H278.2V605.1H277.2H276.2V604.7H275.2V604.8H274.2V605H273.2V605.1H272.2V604.6H271.2V605.3H270.2V604.8H269.2V605.4H268.2V605.9H267.2V605.6H266.2V605.4H265.2V605H264.2V605.5H263.2V605.1H262.2V605.5H261.2V605H260.2V605.4H259.2V605.1H258.2V604.9H257.2V605.3H256.2V605.5H255.2V605.1H254.2V605H253.2V605.3H252.2V605.6H251.2V605.1H250.2H249.2V606.3H248.2V605.4H247.2V606H246.2V605.8H245.2V605.3H244.2V605.9Z" fill="#5208b2"/>
<polyline points="244.2,600.8 289,599.6 333.4,597.7" fill="none" stroke="#7a14f0" stroke-width="3.8"/>
<path d="M343.1 675.6H344.1V675.3H345.1V675.3H346.1V674.9H347.1H348.1V675.6H349.1V675.5H350.1V675.7H351.1V675.1H352.1H353.1V675.1H354.1V675.6H355.1V675.2H356.1V675.6H357.1V674.9H358.1V675.1H359.1V675.7H360.1V675.7H361.1V675.3H362.1V675.4H363.1V675.1H364.1V675.6H365.1V675.3H366.1V675.7H367.1V674.6H368.1V675H369.1V673.9H370.1V674.3H371.1V675.7H372.1V675.9H373.1V675.5H374.1H375.1V675.7H376.1V675.3H377.1V675.7H378.1V675.3H379.1V675.6H380.1V676H381.1V674.2H382.1V674.3H383.1V675.9H384.1V675.4H385.1V675.7H386.1V676H387.1V675.8H388.1V676H389.1V676.2H390.1V675.3H391.1V676.1H392.1V676.2H393.1V675.2H394.1V675.6H395.1V675.4H396.1V675.9H397.1V676H398.1V675.5H399.1V675.9H400.1V676.3H401.1V675.7H402.1V674.4H403.1V676.3H404.1V675.8H405.1H406.1V674.4H407.1V676.1H408.1V676.1H409.1V676.2H410.1V676.5H411.1H412.1V675.9H413.1V675.7H414.1V674.7H415.1V675.9H416.1V676.6H417.1V676.2H418.1V675.9H419.1V676.6H420.1V676.2H421.1V675.8H422.1V675.2H423.1V676.1H424.1V676.6H425.1V675.3H426.1V676.7H427.1H428.1V676H429.1V676.8H430.1V676.4H431.1V676.7H432.1V674.8H433.1V676.5H434.1V676.7H435.1V676.3H435.8V676.9V685.7H435.1V686H434.1V685.8H433.1V685.9H432.1V685.7H431.1V686.3H430.1V685.8H429.1V686.1H428.1V686.1H427.1V685.7H426.1V686.2H425.1H424.1V686.2H423.1V685.8H422.1H421.1V686H420.1V685.7H419.1V686.2H418.1V685.4H417.1V686H416.1V686.1H415.1V685.8H414.1V685.7H413.1V686.9H412.1V686H411.1V686.2H410.1V686.1H409.1H408.1V685.6H407.1H406.1H405.1V685.4H404.1V685.6H403.1H402.1V686.3H401.1V685.7H400.1V685.6H399.1V685.7H398.1V686.1H397.1V685.6H396.1V685.7H395.1V686.2H394.1V685.9H393.1V685.4H392.1V686.9H391.1V685.3H390.1H389.1V685.1H388.1V685.8H387.1V685.3H386.1V686.4H385.1V685.7H384.1V685.5H383.1V686.8H382.1V685.4H381.1V685.8H380.1V686.5H379.1V685.6H378.1V685.2H377.1V685.6H376.1V685.1H375.1V685.6H374.1V684.9H373.1V685.2H372.1V685.6H371.1V686.3H370.1V685.3H369.1V685.1H368.1V685.9H367.1V685H366.1H365.1V685.2H364.1V685.1H363.1V684.8H362.1V685.3H361.1V685.2H360.1H359.1V685.1H358.1V685.3H357.1H356.1V684.7H355.1V685.8H354.1V685.3H353.1V685.7H352.1V685H351.1V685.2H350.1H349.1V685.1H348.1V684.9H347.1V684.5H346.1V685.3H345.1V685.1H344.1V684.9H343.1V685.2Z" fill="#5208b2"/>
<polyline points="343.1,680 389.6,680.6 435.8,681.3" fill="none" stroke="#7a14f0" stroke-width="3.8"/>
<path d="M443.8 594.5H444.8V594.4H445.8V594.5H446.8V594.9H447.8V595H448.8H449.8V594.1H450.8V594.3H451.8V595H452.8V594.5H453.8V595H454.8V594.7H455.8H456.8H457.8V594.3H458.8V595.1H459.8H460.8V595H461.8V594H462.8V594.4H463.8V595H464.8V594.4H465.8V595H466.8V594.6H467.8V594.2H468.8V594.7H469.8V594.8H470.8V595.1H471.8V594.3H472.8H473.8V594.7H474.8V594.3H475.8V595.1H476.8V594.9H477.8V593.6H478.8V594.5H479.8V594.4H480.8V595H481.8V594.6H482.8V593.6H483.8V594.8H484.8V594.9H485.8V594.7H486.8V594.4H487.8V594.6H488.8V594.4H489.8V594.7H490.8V595H491.8V594.5H492.8V593.7H493.8V595.2H494.8V594.8H495.8H496.8V593.4H497.8V594.2H498.8V594.8H499.8H500.8V595H501.8V593.9H502.8H503.8V594.6H504.8V595.1H505.8V595.2H506.8V594.8H507.8V595.2H508.8V595.1H509.8V595.2H510.8V594.9H511.8V595.1H512.8H513.8V595.6H514.8V595H515.8V594.4H516.8V595H517.8V595.3H518.8V594.9H519.8V595.6H520.8V595.4H521.8V594H522.8V595H523.8V595.4H524.8V595.2H525.8V594.9H526.8V595.2H527.8V595.3H528.8V595.7H529.8V595H530.8H531.8V595.3H532.8V595.9H533.8V595.7H534.8V595.5H535.8V595.7H536.8V595.4H537V596V604.8H536.8V605.2H535.8H534.8V604.9H533.8V605.3H532.8V605.6H531.8V605H530.8V604.7H529.8V604.9H528.8V605.2H527.8V605.5H526.8V605.4H525.8V605.2H524.8V604.6H523.8H522.8V605.3H521.8V605.1H520.8V604.9H519.8V605.8H518.8V604.7H517.8V605.1H516.8V605.3H515.8H514.8V604.6H513.8V605H512.8V604.7H511.8V605.3H510.8V604.8H509.8V604.5H508.8V604.9H507.8V604.7H506.8V605H505.8V604.4H504.8V604.8H503.8V606.2H502.8V604.8H501.8V605.1H500.8V604.8H499.8V605.2H498.8V604.4H497.8V604.5H496.8V604.2H495.8H494.8V605H493.8V604.3H492.8V605H491.8V604.7H490.8V604.8H489.8V604.7H488.8V604.1H487.8V605.1H486.8V604.5H485.8V605H484.8V605.9H483.8V604H482.8V604.2H481.8V604.5H480.8V604.7H479.8V604.6H478.8V604.4H477.8H476.8V604.8H475.8V604.4H474.8V604.9H473.8V604.4H472.8V604H471.8V605.9H470.8V604.2H469.8V604.3H468.8V604.8H467.8V605.3H466.8V604.7H465.8H464.8V604.3H463.8V604.2H462.8V604H461.8V604.8H460.8H459.8V605.3H458.8V604.6H457.8V604H456.8V604.5H455.8V604.1H454.8V604.2H453.8H452.8V604H451.8V604.2H450.8V604.5H449.8H448.8V604.1H447.8V604.6H446.8V604.7H445.8V605.7H444.8V604.9H443.8V604.3Z" fill="#5208b2"/>
<polyline points="443.8,599.5 490.6,599.6 537,600.4" fill="none" stroke="#7a14f0" stroke-width="3.8"/>
<path d="M543.8 674.7H544.8V674.8H545.8V674.9H546.8V674.9H547.8V675.1H548.8V675.4H549.8V674.7H550.8V673.9H551.8V674.9H552.8V675.7H553.8V675.6H554.8V675H555.8H556.8V675.7H557.8V675H558.8V675.6H559.8V675.7H560.8V675.8H561.8V675.5H562.8V675.1H563.8V675H564.8V675H565.8V675.8H566.8V675.7H567.8V675.6H568.8V675.9H569.8H570.8V675.5H571.8H572.8V675.7H573.8V675.3H574.8V675.2H575.8H576.8V675.5H577.8V675.4H578.8V675.7H579.8V675.4H580.8V675.5H581.8V675.4H582.8V675.5H583.8V675.6H584.8V674.6H585.8V675.6H586.8V676H587.8V675.2H588.8V675.7H589.8V675.4H590.8V675.6H591.8V675.5H592.8V676.2H593.8V675.4H594.8V676H595.8V675.4H596.8V676.3H597.8V675.9H598.8V676.3H599.8V676.1H600.8V676H601.8V674.8H602.8V675.7H603.8V676.4H604.8V675.6H605.8V676.2H606.8V674.9H607.8V675.5H608.8V675.9H609.8H610.8V676.1H611.8V675.7H612.8V674.5H613.8V676.4H614.8H615.8V675.8H616.8V676.2H617.8V676.4H618.8V676H619.8V675.1H620.8V676H621.8H622.8V676.2H623.8V676H624.8V675.8H625.8V676H626.8V675.9H627.8V676.7H628.8V676.2H629.8V675.9H630.8V675.1H631.8V676.6H632.8V676.3H633.8V676H634.8V676.5H635.8V676.1H636.8V676.2H637.8V676.2H638.8V676H639V676.9V685.7H638.8V686.2H637.8V685.9H636.8V686.4H635.8H634.8V686.2H633.8V687.1H632.8V686.4H631.8V687.6H630.8V685.8H629.8V687H628.8V686.1H627.8V685.7H626.8H625.8V686.4H624.8V686.2H623.8V687.4H622.8V686.3H621.8V685.7H620.8V685.6H619.8V686.2H618.8V685.8H617.8V686.7H616.8H615.8V686.2H614.8V685.4H613.8V685.7H612.8V685.5H611.8V685.7H610.8V685.4H609.8V687.1H608.8V685.4H607.8V685.7H606.8V686.3H605.8V686.1H604.8V685.3H603.8V685.8H602.8V685.6H601.8V685.2H600.8V686H599.8V685.9H598.8V685.6H597.8V686.6H596.8V685.6H595.8V685.2H594.8H593.8V686.9H592.8V685.8H591.8V685.5H590.8V685.8H589.8H588.8V685.1H587.8V685.5H586.8V686.3H585.8V685.1H584.8V685.3H583.8H582.8V685.2H581.8V686.9H580.8V685.6H579.8V686.2H578.8V686H577.8V685.1H576.8V685.6H575.8V685.1H574.8V685H573.8V685.1H572.8V684.8H571.8V685.2H570.8V684.8H569.8V685.5H568.8V685.3H567.8V685.2H566.8V685.6H565.8V685H564.8V684.8H563.8V685.6H562.8V685.3H561.8V684.9H560.8V685.5H559.8V685.6H558.8V685.1H557.8V684.9H556.8V685.3H555.8V684.6H554.8V685H553.8V685.6H552.8V685.4H551.8V685.1H550.8V685.2H549.8V685.4H548.8V685.1H547.8V684.9H546.8V684.6H545.8H544.8V684.9H543.8V685.1Z" fill="#5208b2"/>
<polyline points="543.8,680 591.5,680.6 639,681.3" fill="none" stroke="#7a14f0" stroke-width="3.8"/>
<path d="M647 595H648V595.7H649V595.2H650V595.6H651V595.2H652V595.9H653V595.8H654V594.8H655V595.9H656V595.5H657V595.7H658V596.1H659V595.9H660V595.7H661V596.1H662V595.7H663V595.7H664V596.5H665V596.6H666V596H667V596.3H668V596.6H669V596H670V595.9H671V595.6H672V596.3H673V596.4H674V596.5H675V596.7H676V596.1H677V597H678V596.9H679V596.6H680V596.3H681V596H682V596.7H683V596.1H684V596.3H685V595.6H686V595.3H687V595.9H688V596H689V596.4H690V595.6H691V596.1H692V595.4H693V595.5H694V595.3H695V595.7H696V595.5H697V595.4H698H699V594.7H700V593.1H701V594.5H702V593.3H703V594.5H704V594H705V593.8H706V593.5H707H708V593.4H709V592.7H710V592.5H711H712H713V592.9H714V592H715V592.6H716V592H717V591.9H718V592.2H719V592.1H720V591.3H721V591.5H722V591.4H723V590.7H724V591.6H725V590.7H726V591.3H727V591.1H728V590.8H729H730H731V590.9H732V591.4H733V590.1H734V591.2H735V591.3H736V591.8H737V591.4H738V591.6H739V591.9H740V592.2V601H739V601.8H738V600.9H737V601.4H736H735H734V601.2H733V601H732V600.5H731V600.9H730V600.5H729H728V600.4H727V600.6H726V601.8H725V601.5H724V601H723V601.3H722V602.2H721V601.6H720V601.8H719V601.5H718V601.3H717V601.5H716V601.7H715V602.3H714V603.3H713V602.6H712V602H711V602.7H710H709V603.2H708H707V603.9H706V603.1H705V603.4H704V604.4H703V603.7H702V604.2H701V604.3H700V604.2H699V604.5H698H697V604.6H696V604.7H695V604.9H694V604.7H693V605.1H692V605.9H691V605.3H690V605.5H689V605.7H688V605.8H687V605.7H686H685V605.9H684V607.7H683V606.5H682V606.7H681V606.2H680V606.4H679V606.5H678V606.6H677V606.2H676V607.5H675V606.7H674V606.4H673V606H672V605.8H671V606.2H670V606.3H669V606.2H668H667V606.3H666V607.2H665V605.4H664V607.2H663V605.6H662V606.7H661V605.8H660V605.2H659V606H658V605.6H657V605.5H656V605.6H655V607.2H654V607.1H653V605.3H652V605.8H651V604.9H650H649V605H648V605.5H647V605Z" fill="#5208b2"/>
<polyline points="647,600.3 666,601 682.6,601.6 698.4,599.8 714.1,597.2 727,595.7 740,596.6" fill="none" stroke="#7a14f0" stroke-width="3.8"/>
<path d="M751 675.1H752V673.8H753V675.1H754V674H755V674.9H756V675.1H757V674.4H758V675.5H759V675.4H760V675.1H761V674.8H762V673.8H763V675.3H764V675.7H765V675.4H766V674.6H767V675.6H768V675.7H769V675.3H770V675H771V675.2H772V675.1H773V675.2H774V675.7H775V675H776V675.6H777V675.3H778V675.2H779V675.6H780V675.4H781V675.2H782V674.3H783V675.9H784V674.7H785V675.4H786V675.5H787V675.2H788V675.6H789V675.7H790V676H791V675.3H792V675.6H793V675.3H794V675.4H795V676H796V675.5H797V674.9H798V675.8H799V675.8H800V675.5H801V675.9H802H803V676H804V674.4H805V676.1H806V675.5H807V676.3H808V676.2H809V675.5H810H811V675.6H812V676.2H813V676.3H814V675.1H815V676.2H816V675.9H817V675.7H818V675.9H819V676.5H820V676.3H821V675.8H822V675.9H823V676.4H824V676.3H825V676.2H826V676.5H827H828V675.9H829V676.4H830V676.7H831V675.4H832V676.6H833V676.2H834V676.7H835V676.5H836V676.4H837V674.7H838V676H839V675.9H840V675.7H841V676.6H842V676.4H842.3V676.9V685.7H842V686.1H841V686.3H840V687.2H839V686.5H838V685.8H837V687.1H836V685.9H835V686.3H834V685.6H833V686.3H832V685.8H831V686.2H830V685.9H829V686.3H828V686.1H827V686.3H826V686.3H825V685.5H824V686.2H823V685.8H822V686.2H821V685.9H820V685.7H819V685.6H818V686.6H817V686H816V687H815V685.9H814V687.4H813V685.8H812V685.6H811V686.1H810H809V685.7H808V685.7H807V685.9H806V685.3H805V686.9H804V685.6H803V685.2H802V685.7H801V685.2H800V685.7H799V685.7H798V685.1H797V685.3H796V686.7H795V685.2H794V686.4H793V685.6H792V685.8H791V685.3H790V685.1H789V685.6H788V686.8H787V685.7H786V685.7H785V686.1H784V685.3H783V685.4H782V685.6H781V685H780V685.2H779V685.4H778V685.3H777V685.6H776V685.5H775V685.3H774V684.9H773V686.7H772V685.3H771V685.5H770V686.4H769V684.9H768V685.1H767V686H766V686.5H765V685.2H764V684.9H763V684.8H762H761H760V684.6H759V684.9H758V684.8H757V685H756V686.1H755V685.4H754V684.8H753V684.6H752V684.9H751V684.5Z" fill="#5208b2"/>
<polyline points="751,680 796.8,680.6 842.3,681.3" fill="none" stroke="#7a14f0" stroke-width="3.8"/>
<path d="M850.5 595.1H851.5V595.3H852.5V595.9H853.5V595.3H854.5V595.6H855.5V595.5H856.5V595.9H857.5V595.3H858.5V595.5H859.5V596.1H860.5V595.8H861.5V596H862.5V595.8H863.5V596H864.5V595.6H865.5V596.3H866.5V596.2H867.5V595.8H868.5V596.4H869.5V595H870.5V596H871.5V596.1H872.5V595.4H873.5V596.6H874.5H875.5V596.3H876.5V595.9H877.5V597.2H878.5V596.2H879.5V597.2H880.5V597H881.5V596.8H882.5V597.4H883.5V596.8H884.5V597.2H885.5V595.5H886.5V597H887.5V597.4H888.5V596.9H889.5V597H890.5V596.9H891.5V596.2H892.5V595.7H893.5V596.5H894.5V596.1H895.5V595.4H896.5V595.9H897.5V595.3H898.5V593.9H899.5V595.2H900.5V595.1H901.5V594.7H902.5V594.1H903.5V594.9H904.5V593.2H905.5V594.7H906.5V594.3H907.5V593.7H908.5V593.1H909.5V592.2H910.5V593.1H911.5V593.2H912.5V592.7H913.5V592.9H914.5V591.9H915.5V592.6H916.5V592.5H917.5V592.4H918.5V591.7H919.5V590.9H920.5V591.6H921.5V590.4H922.5V591.5H923.5V590.8H924.5V591.4H925.5V591.1H926.5H927.5V591.3H928.5V590.8H929.5V590H930.5V590.4H931.5V590.8H932.5V590.4H933.5V589.2H934.5V591.3H935.5V590.2H936.5V590.8H937.5V591.4H938.5V589.5H939.5V590.8H940.5V591.2H941.5V591.4H942.5V591H943.5V591.1H944V592V600.8H943.5V600.9H942.5V602.3H941.5V600.9H940.5V601.2H939.5V601H938.5V600.5H937.5V600.5H936.5V601.1H935.5V600.8H934.5V600.1H933.5H932.5V600.6H931.5V600.4H930.5V601.3H929.5V600.8H928.5V600.2H927.5V600.5H926.5V601.5H925.5V601.2H924.5V601.9H923.5V601.5H922.5V602.6H921.5V602.5H920.5V601.9H919.5V601.6H918.5V601.3H917.5V601.6H916.5V602.1H915.5V602.5H914.5V602.8H913.5V603.1H912.5V602.8H911.5V603.4H910.5V603.2H909.5V602.9H908.5V603.6H907.5V603.4H906.5H905.5V604.5H904.5V605.2H903.5V604H902.5V604.7H901.5V605H900.5V604.8H899.5V604.7H898.5V605.1H897.5V605.6H896.5V605.8H895.5V605.6H894.5H893.5V607.1H892.5V606H891.5H890.5V606.6H889.5V606.4H888.5H887.5H886.5V606.9H885.5V606.7H884.5V606.9H883.5V607H882.5V607.1H881.5V606.3H880.5V606.7H879.5V607H878.5V606.6H877.5V606H876.5V606.3H875.5V606.6H874.5H873.5V605.9H872.5V605.8H871.5V606H870.5V605.9H869.5V605.8H868.5V605.9H867.5V606.2H866.5V605.9H865.5V606.3H864.5V606.5H863.5V605.8H862.5V605.5H861.5V605.9H860.5V605.5H859.5V606.6H858.5V605.6H857.5V605.2H856.5V605.3H855.5V606H854.5V605.9H853.5V605.3H852.5V604.9H851.5V606H850.5V605.9Z" fill="#5208b2"/>
<polyline points="850.5,600.3 869.6,601.2 886.3,602 902.1,599.7 918,597 931,595.4 944,596.4" fill="none" stroke="#7a14f0" stroke-width="3.8"/>
<path d="M955.5 675.2H956.5V675H957.5V675.1H958.5V674.8H959.5V674H960.5V675.6H961.5V674.8H962.5H963.5V675H964.5V674.4H965.5V674.5H966.5V675.5H967.5V675H968.5V675.1H969.5V675.4H970.5H971.5V675.1H972.5V675.6H973.5V674.6H974.5V675.2H975.5V675H976.5V675.6H977.5V673.8H978.5V675.5H979.5V675.6H980.5V675.5H981.5V675.9H982.5V675.3H983.5V675.6H984.5V675.9H985.5V675.5H986.5V675.8H987.5V674.6H988.5V674.3H989.5V675.6H990.5V675.3H991.5V675.2H992.5V674H993.5V675.8H994.5V675.4H995.5H996.5V675.7H997.5V676.1H998.5V675.7H999.5V675.9H1000.5V675.5H1001.5V675.6H1002.5V675.9H1003.5V675.8H1004.5V676H1005.5V675.9H1006.5V676.2H1007.5V675.9H1008.5V675.4H1009.5V674.4H1010.5V675.8H1011.5V676.3H1012.5V676.1H1013.5V676.2H1014.5V676.2H1015.5V675.8H1016.5H1017.5V676.4H1018.5V676H1019.5V675.6H1020.5V675.7H1021.5V674.7H1022.5V676.1H1023.5H1024.5V676.4H1025.5V675.6H1026.5V675.8H1027.5V676.4H1028.5V676.3H1029.5V675.4H1030.5V676.5H1031.5V676.4H1032.5V675.9H1033.5V676.6H1034.5H1035.5V676.4H1036.5V675.9H1037.5V676.4H1038.5V676.7H1039.5V676H1040.5V675.3H1041.5V676.2H1042.5V676.8H1043.5V676.8H1044.5V676.2H1045.5V676.9H1045.7V685.7H1045.5V686.5H1044.5V686.3H1043.5V686.9H1042.5V687.6H1041.5V686.4H1040.5V686.6H1039.5V685.9H1038.5H1037.5V685.7H1036.5V686H1035.5V686H1034.5V685.8H1033.5V687.5H1032.5V685.9H1031.5V687H1030.5V686.3H1029.5V686H1028.5V687.7H1027.5V686H1026.5V685.9H1025.5V687H1024.5V686H1023.5H1022.5V685.6H1021.5V686.7H1020.5V686H1019.5V685.7H1018.5V686H1017.5V685.5H1016.5V685.6H1015.5V685.9H1014.5V685.8H1013.5V685.9H1012.5V687.4H1011.5V685.5H1010.5V685.5H1009.5V685.9H1008.5V685.5H1007.5H1006.5V685.8H1005.5V685.5H1004.5V685.1H1003.5V685.9H1002.5V685.5H1001.5V685.3H1000.5V685.3H999.5V685.5H998.5V685.3H997.5V685.1H996.5V685.8H995.5H994.5V685.4H993.5H992.5V685.1H991.5V685.7H990.5V685H989.5V685.5H988.5H987.5V685.3H986.5V687H985.5V686.2H984.5V685.1H983.5V685.5H982.5V685.6H981.5V685.4H980.5V685.4H979.5V685.4H978.5V685.1H977.5H976.5H975.5V685.4H974.5V684.7H973.5V685.2H972.5V685.3H971.5V684.6H970.5V684.9H969.5V686.4H968.5V685.7H967.5V685.4H966.5V685.3H965.5V685.2H964.5H963.5V684.9H962.5H961.5V685.1H960.5V684.9H959.5V685.3H958.5V684.8H957.5V685.2H956.5V684.7H955.5V685.3Z" fill="#5208b2"/>
<polyline points="955.5,680 1000.7,680.6 1045.7,681.3" fill="none" stroke="#7a14f0" stroke-width="3.8"/>
<path d="M1053.5 595.2H1054.5V595.4H1055.5H1056.5V595.7H1057.5V595.8H1058.5V595.6H1059.5V595.9H1060.5H1061.5V596H1062.5V596.2H1063.5H1064.5V595.1H1065.5V596.4H1066.5V596H1067.5V596.5H1068.5H1069.5V596H1070.5V596.5H1071.5V596.7H1072.5V595.5H1073.5V596.8H1074.5H1075.5V597.1H1076.5V596.7H1077.5V596.6H1078.5V597H1079.5V595.4H1080.5V596.7H1081.5V596.3H1082.5V596.7H1083.5V597H1084.5H1085.5V596.8H1086.5V597.4H1087.5V597.3H1088.5V597.1H1089.5H1090.5V597.2H1091.5V595.8H1092.5V595.7H1093.5V596.7H1094.5V596.4H1095.5V595.5H1096.5V596.5H1097.5V596.1H1098.5V596.2H1099.5V595.8H1100.5V596H1101.5V595.5H1102.5H1103.5V595.4H1104.5V595.2H1105.5V594.4H1106.5V594.9H1107.5V594.7H1108.5V594H1109.5V592.6H1110.5V593.5H1111.5V593.3H1112.5V593.5H1113.5V593.4H1114.5V593.6H1115.5V593.3H1116.5V593H1117.5V592.2H1118.5V591.9H1119.5V592.4H1120.5V592.2H1121.5V590.8H1122.5V592.2H1123.5V591.6H1124.5V591.2H1125.5V591H1126.5V590.9H1127.5V591.3H1128.5V590.8H1129.5V591.3H1130.5V590.4H1131.5V591H1132.5V590.8H1133.5V590.4H1134.5V590.1H1135.5V590.7H1136.5V590.4H1137.5V590.2H1138.5V591.1H1139.5V590.6H1140.5H1141.5V590.8H1142.5V591.4H1143.5V590.7H1144.5V591.1H1145.5V590.9H1146.5V591.4H1147V591.9V600.6H1146.5V601.3H1145.5V600.8H1144.5V601H1143.5V600.4H1142.5V600.6H1141.5V602.3H1140.5V600.9H1139.5V600.4H1138.5V600.3H1137.5V600.2H1136.5V600.4H1135.5V601.8H1134.5V599.9H1133.5V600.3H1132.5V600.1H1131.5V600.7H1130.5H1129.5V600.5H1128.5V600.4H1127.5V601.7H1126.5V601.6H1125.5V601.4H1124.5H1123.5V602H1122.5V601.8H1121.5V602H1120.5V602.1H1119.5V601.9H1118.5V602.4H1117.5V602.7H1116.5V602.9H1115.5V603H1114.5V603.1H1113.5V602.8H1112.5V603.4H1111.5V603.5H1110.5V603.2H1109.5V603.9H1108.5V603.7H1107.5V605.3H1106.5V604.2H1105.5V604H1104.5V604.7H1103.5V605.7H1102.5V604.6H1101.5V605.3H1100.5V605.1H1099.5V606H1098.5V605.5H1097.5V606.9H1096.5V605.6H1095.5V606.7H1094.5H1093.5V606.5H1092.5V606.6H1091.5V606.4H1090.5V606.7H1089.5V607.4H1088.5V607.2H1087.5V607H1086.5V607.8H1085.5V606.9H1084.5V607.9H1083.5V606.6H1082.5V607.1H1081.5V606.4H1080.5V606.7H1079.5V607.7H1078.5V606.2H1077.5H1076.5V606.1H1075.5H1074.5H1073.5V606.4H1072.5V605.8H1071.5V606.5H1070.5V606.1H1069.5V606.5H1068.5H1067.5V607.5H1066.5V605.6H1065.5V606.4H1064.5V605.4H1063.5V606.1H1062.5V605.7H1061.5V605.8H1060.5H1059.5V605.3H1058.5V606.5H1057.5V605.7H1056.5V605.7H1055.5V605.3H1054.5V605.6H1053.5Z" fill="#5208b2"/>
<polyline points="1053.5,600.3 1072.6,601.4 1089.3,602.3 1105.2,599.6 1121,596.9 1134,595.1 1147,596.2" fill="none" stroke="#7a14f0" stroke-width="3.8"/>
<path d="M1158.9 675.2H1159.9V675H1160.9V675.3H1161.9V675.4H1162.9V675H1163.9V675.6H1164.9V675.2H1165.9V675.3H1166.9V674.1H1167.9V675.7H1168.9H1169.9V675.3H1170.9V675.2H1171.9H1172.9V675H1173.9V675.1H1174.9V675.5H1175.9V675.3H1176.9V675.7H1177.9V675.2H1178.9V675.4H1179.9V675.8H1180.9V675.6H1181.9V675.2H1182.9H1183.9V675.1H1184.9V675.9H1185.9V675.7H1186.9V675.5H1187.9V676H1188.9V675.3H1189.9V675.2H1190.9V675.5H1191.9V676H1192.9V674.3H1193.9V675.9H1194.9V675.8H1195.9V675.7H1196.9V676H1197.9V674.1H1198.9V676H1199.9V675.9H1200.9V675.7H1201.9V676.1H1202.9V675.6H1203.9V675.9H1204.9V675.4H1205.9V675.3H1206.9V675.5H1207.9V675.9H1208.9V676.2H1209.9V675.1H1210.9V675.5H1211.9V675.9H1212.9H1213.9V676.1H1214.9V675.8H1215.9V676.1H1216.9H1217.9H1218.9V676.3H1219.9V676.2H1220.9V676.1H1221.9V676H1222.9H1223.9V675.9H1224.9V676H1225.9V676.4H1226.9V676H1227.9V676.3H1228.9V676.1H1229.9V675.7H1230.9V676H1231.9H1232.9V675.8H1233.9V676.1H1234.9V674.9H1235.9V676H1236.9V676.3H1237.9V676.7H1238.9V676.5H1239.9V676.4H1240.9V676H1241.9V675.4H1242.9V676.4H1243.9V676.8H1244.9V675.6H1245.9V676.4H1246.9V676.7H1247.9V676.3H1248.3V676.9V685.7H1247.9V686.4H1246.9V686.5H1245.9V685.8H1244.9V686.2H1243.9V686.5H1242.9V686.1H1241.9V686.3H1240.9H1239.9H1238.9H1237.9V685.8H1236.9V686.3H1235.9V686H1234.9V687.4H1233.9V686.3H1232.9V685.9H1231.9V686.9H1230.9V685.6H1229.9V686H1228.9H1227.9V686.1H1226.9V685.9H1225.9H1224.9V685.6H1223.9V685.7H1222.9V686.1H1221.9V685.7H1220.9V685.5H1219.9V685.4H1218.9V686H1217.9V685.4H1216.9V685.9H1215.9V685.3H1214.9V685.4H1213.9V686H1212.9V685.6H1211.9V685.5H1210.9V686H1209.9V685.8H1208.9V685.5H1207.9V685.3H1206.9V685.3H1205.9H1204.9V685.9H1203.9V685.7H1202.9V685.4H1201.9V685.1H1200.9V685.8H1199.9V685.6H1198.9V685.1H1197.9V685.7H1196.9V685.4H1195.9V685.5H1194.9V686.2H1193.9V685.6H1192.9H1191.9V685.3H1190.9V684.9H1189.9V685.8H1188.9V685.5H1187.9V685H1186.9H1185.9V685.8H1184.9V685H1183.9V684.9H1182.9V685.1H1181.9V685.6H1180.9V685.3H1179.9V685H1178.9V684.8H1177.9V685.3H1176.9V684.7H1175.9V685.1H1174.9V684.8H1173.9V686H1172.9V685.2H1171.9V686H1170.9V684.6H1169.9V685.3H1168.9V686H1167.9V684.8H1166.9V685.2H1165.9V685H1164.9V685.2H1163.9V684.5H1162.9V685.2H1161.9V684.7H1160.9V685.8H1159.9V684.5H1158.9Z" fill="#5208b2"/>
<polyline points="1158.9,680 1203.7,680.6 1248.3,681.3" fill="none" stroke="#7a14f0" stroke-width="3.8"/>
<path d="M1258.5 595.5H1259.5V595.6H1260.5V596.1H1261.5V595.6H1262.5V595.8H1263.5V595.3H1264.5V595.9H1265.5V595.7H1266.5V595.4H1267.5V594.7H1268.5V595.5H1269.5V594H1270V596.1V604.9H1269.5V605.3H1268.5V606.5H1267.5V605.7H1266.5V605.6H1265.5V605.7H1264.5H1263.5V605.1H1262.5V605.6H1261.5V605.2H1260.5V605.6H1259.5V605.5H1258.5V605.4Z" fill="#5208b2"/>
<polyline points="1258.5,600.5 1270,600.5" fill="none" stroke="#7a14f0" stroke-width="3.8"/>
</g>
<g id="c5">
<path d="M17 410.3H18V407.7H19V410.2H20V409.8H21V408.8H22V409.8H23H24V409.9H25V410H26V410.2H27V410.3H28V407.8H29V410.4H30V409.9H31V410.1H32V410.4H33V410.2H34H35V410.4H36V410.2H37V409.8H38V410.3H39V410.1H40V410.5H41V409.9H42V410.2H43V410.4H44V409.8H45H46V408.5H47V409.8H48V408.7H49V410.1H50V410.3H51V410.4H52V409.8H53V410.4H54V408.1H55V410.1H56V410.3H57V409.8H58V410H59V410.1H60V410.3H61V409.7H62V408.5H63V410H64V409.8H65V407.3H66V409.8H67V409.8H68V410.2H69H70V409.9H71V410.1H72V408.9H73V410.1H74V408.1H75V410.3H76V408.5H77V409.9H78V409.3H78.8V470.6H78H77V470.3H76V470.8H75V470.5H74V470.7H73V470.4H72V470.7H71V470H70V470.8H69V470.4H68V470.1H67V470.3H66H65V470.7H64H63V470.2H62V470.5H61V470H60H59V471H58V470.7H57V470.3H56V470.2H55H54V470.2H53V470.7H52V470.3H51V470.7H50H49V470.7H48V470H47V470.5H46V470.7H45H44V470.1H43V470.3H42V470.5H41V470.3H40V470.7H39V470.2H38V470.8H37H36H35V470H34H33V470.2H32V470.3H31V471.1H30V471.5H29V470.4H28H27V470.3H26V470.6H25V470.2H24V470.7H23V470.5H22V470.2H21V470.3H20H19V471.1H18V470.5H17Z" fill="#566756"/>
<rect x="17" y="412" width="61.8" height="3" fill="#a9b9a9" opacity="0.9"/>
<rect x="17" y="462.2" width="61.8" height="3.5" fill="#94a694" opacity="0.8"/>
<path d="M77.8 464 C82.8 463,86.3 461.8,92.3 461.8" fill="none" stroke="#566756" stroke-width="6.4"/><path d="M77.8 464 C82.8 463,86.3 461.8,92.3 461.8" fill="none" stroke="#a9b9a9" stroke-width="3"/>
<path d="M91.3 404H92.3H93.3V402.7H94.3V404.4H95.3V404.3H96.3V404.2H97.3V404.1H98.3V404.2H99.3V403.8H100.3V404.1H101.3V404.4H102.3V404.4H103.3H104.3V401.8H105.3V404.1H106.3H107.3V402.3H108.3V404.3H109.3V404.2H110.3V404.5H111.3V404.4H112.3V402.5H113.3V404.2H114.3V403.9H115.3V403.6H116.3V404.5H117.3V404H118.3V404.4H119.3V403.8H120.3V404H121.3V404.3H122.3V404.5H123.3V403H124.3V404.2H125.3V403.9H126.3V404.2H127.3V404H128.3V403.8H129.3V404H130.3V404.1H131.3V404H132.3V403.7H133.3V404.1H134.3V403.8H135.3V404.3H136.3V404.2H137.3H138.3H139.3V404.4H140.3V403.9H141.3V402.9H142.3V404H143.3V404H144.3V402.9H145.3V403.8H146.3V404.1H147.3V404.4H148.3V403.9H149.3V404.4H150.3V403.9H151.3V404.2H152.3V403.6H153.3V403.8H154.3V404.4H155.3V404.2H156.3V404.5H157.3V404.1H158.3V404.5H159.3V403.8H160.3V403.8H161.3V403H162.3V404H163.3V401.7H164.3V404H165.3V404.1H166.3V404.4H167.3V404.3H168.3V403.9H169.3V404.2H170.3H171.3V403.7H172.3H173.3V404.1H174.3V403.8H175.3H176.3V404.3H177.3V403.9H178.3V404.3H179.3V404.4H180.3V403.7H181V465.9H180.3H179.3V465.6H178.3V466H177.3V466.2H176.3V465.7H175.3V465.8H174.3V466.1H173.3V465.5H172.3V466.3H171.3V466H170.3V465.9H169.3H168.3V465.7H167.3V465.6H166.3V465.8H165.3V466.1H164.3V465.8H163.3V465.9H162.3V466.2H161.3V465.6H160.3V466H159.3V466.2H158.3V466.1H157.3V465.8H156.3V465.6H155.3V465.6H154.3V465.9H153.3V465.7H152.3V465.9H151.3V466.3H150.3V465.8H149.3V465.9H148.3V465.6H147.3V466.1H146.3V465.7H145.3V465.8H144.3V466.1H143.3V465.9H142.3V466.1H141.3V466.2H140.3V465.6H139.3V465.8H138.3V466.2H137.3V465.9H136.3V466H135.3V465.7H134.3V466H133.3V466.1H132.3V466.2H131.3V465.5H130.3V465.8H129.3V467.1H128.3V466.1H127.3V466H126.3V465.8H125.3V466H124.3V466.2H123.3V465.7H122.3V466H121.3V465.9H120.3V466.3H119.3V466.1H118.3H117.3H116.3V466H115.3V465.7H114.3V465.8H113.3V467.3H112.3V466.1H111.3V465.9H110.3V468H109.3V466.1H108.3V466.1H107.3H106.3V465.6H105.3V465.9H104.3V465.9H103.3V466.1H102.3V466.4H101.3V465.7H100.3V466.2H99.3V465.7H98.3V466.2H97.3H96.3V465.7H95.3V465.8H94.3V465.7H93.3V465.9H92.3V466H91.3V465.9Z" fill="#566756"/>
<rect x="91.3" y="406.2" width="89.7" height="2.5" fill="#7f927f" opacity="0.7"/>
<rect x="91.3" y="460.2" width="89.7" height="3.5" fill="#a9b9a9" opacity="0.95"/>
<path d="M180 408 C184 409,187 413.5,192 413.5" fill="none" stroke="#566756" stroke-width="6.4"/><path d="M180 408 C184 409,187 413.5,192 413.5" fill="none" stroke="#a9b9a9" stroke-width="3"/>
<path d="M191 409.8H192V407.9H193V410.4H194V410.4H195V407.9H196V410.1H197V409.7H198V410.3H199V410.2H200V410.2H201H202V410.3H203V410.2H204V409.9H205V410.4H206V409.8H207V410.2H208V408.9H209V409.9H210V409.7H211V409.8H212V410.2H213V410.5H214V410.4H215V408.2H216V409.9H217V410.3H218V409.2H219V409.7H220V410.3H221V409.8H222V410.2H223V409.4H224V409.9H225H226V410.2H227V410.3H228V410H229V410.1H230V408.2H231V410.5H232V410.3H233H234V410.3H235V409.9H236V409.7H237V410.1H238V410.3H239V407.5H240V410.2H241H242V410.1H243V409.8H244V408.6H245V407.2H246V410.3H247V410.2H248V408.5H249V409.9H250H251V410.4H252V407.8H253V410.4H254V410.3H255V409.7H256V409.9H257V410H258V410.4H259V410.3H260V410.2H261V410.3H262V409.8H263V410.2H264V407.7H265V410.3H266V410.4H267V409.3H268V409.8H269V410.3H270V410H271V409.9H272V410.4H273V409.9H274V410.2H275H276V410.1H277V410.4H278V410.1H279V407.8H280V410.4H281H282V409.7H283V470.2H282H281V471.3H280V470.4H279H278V470.7H277H276V470.5H275V470.7H274V470.7H273V470.8H272V470.3H271V470.7H270V470.6H269V470.1H268V470.5H267V470.4H266V470.6H265V470.7H264V470.3H263V470.8H262V470.7H261V470H260V470.1H259H258V470.7H257V470.6H256V470.2H255V470.6H254V470.4H253H252V470.6H251H250V470.7H249V470.5H248V470.6H247V472.1H246V470.5H245V470.2H244V470.1H243H242V470.6H241V470.5H240V470.2H239V470.6H238V470.8H237V470.5H236H235V470.7H234V471.1H233V470.5H232V470.1H231H230V470.1H229V470.7H228V470.5H227V470.6H226V470.1H225H224H223V470H222V470.1H221H220V470.7H219V471.3H218V470.1H217V470.3H216V470.1H215V470.3H214V470.1H213V470.2H212V470.1H211V471.4H210V470.1H209V470.8H208V470.7H207V470.3H206H205V471.8H204V470.7H203V470.2H202V470.4H201V470.7H200V470.6H199V470.7H198V470.8H197V470.6H196V470.1H195V470.4H194V470.1H193V470.2H192V472.2H191V470.3Z" fill="#566756"/>
<rect x="191" y="412" width="92" height="3" fill="#a9b9a9" opacity="0.9"/>
<rect x="191" y="462.2" width="92" height="3.5" fill="#94a694" opacity="0.8"/>
<path d="M282 464 C287 463,290 461.8,296 461.8" fill="none" stroke="#566756" stroke-width="6.4"/><path d="M282 464 C287 463,290 461.8,296 461.8" fill="none" stroke="#a9b9a9" stroke-width="3"/>
<path d="M295 404.4H296H297V402H298V404.3H299V404.4H300V404.3H301V404.2H302V404.5H303V404H304V401.7H305V404.2H306V403.8H307V402.3H308V404.5H309H310V403.9H311V403.7H312V403.9H313V404H314V404.4H315V403.8H316V403.6H317V403.7H318V404.3H319V404.5H320V403.9H321V404.5H322V403.9H323V404.3H324V401H325V403.9H326V403.8H327V403.4H328V403.3H329V404.4H330V404.4H331V404.1H332V403.8H333V404.3H334V403.9H335V403.7H336V404H337V403.9H338V404.2H339V403.3H340V404.3H341V404H342V403.9H343V403H344V404H345V403.9H346V404.1H347V404.3H348V403.9H349V404H350H351H352V403.8H353V404.1H354V404H355V404.2H356V404H357V404.3H358V403.8H359V404H360V404.4H361V404.3H362V403.9H363V403.7H364V403.8H365V404.2H366V404.1H367V402.2H368V403.1H369V404.1H370H371V403H372V402.2H373V403.9H374V404.2H375V403.9H376V404.3H377V404.1H378V404H379V404.1H380V403.7H381V401.4H382V404.1H383V404.1H384V465.7H383H382H381V466.2H380V465.6H379V465.9H378V465.7H377V466H376V465.7H375V466.1H374V466.1H373V466.3H372H371V466.2H370V465.5H369V465.8H368V465.7H367V466.7H366V465.8H365H364V465.6H363V466.1H362V465.9H361V465.9H360V466.1H359V465.8H358V466H357H356V466.3H355H354V466.8H353V466.5H352V465.8H351V465.6H350H349V465.8H348V466.2H347H346V465.8H345V466.1H344H343H342V466.2H341V465.8H340H339V465.6H338V465.8H337H336V465.7H335V466H334V466.1H333V466.3H332V465.7H331V465.9H330V465.7H329V466H328H327V465.6H326V465.8H325H324V465.6H323V466.1H322V465.7H321V465.6H320V465.7H319H318V467.5H317V466.3H316V465.8H315V465.7H314V466.2H313V466.1H312V465.8H311V465.5H310V467.2H309V466H308V466.2H307V465.6H306V466.1H305V466.1H304V465.7H303H302V465.7H301V465.9H300H299H298V466.3H297V466.1H296V465.8H295V465.7Z" fill="#566756"/>
<rect x="295" y="406.2" width="89" height="2.5" fill="#7f927f" opacity="0.7"/>
<rect x="295" y="460.2" width="89" height="3.5" fill="#a9b9a9" opacity="0.95"/>
<path d="M556 404.2H557V404H558V404.3H559V404.1H560V404.5H561H562V403.8H563V404.3H564V404.2H565V404.5H566V404.4H567V402.4H568V404.3H569V403.9H570H571V404.1H572V404.5H573V404.2H574V404.4H575V403.8H576H577V404.3H578V403.8H579V404H580V404.1H581V403.7H582H583V404.3H584V403.8H585H586V404.3H587V465.6H586H585V466.2H584V465.7H583V465.9H582V465.8H581V465.7H580H579V466H578V465.6H577V466.1H576V465.6H575V466.3H574V465.7H573H572V465.9H571V465.8H570V466.2H569V465.9H568V466.1H567V465.9H566V466.1H565V466.2H564V465.7H563V466H562V465.9H561V465.8H560V466.1H559V465.9H558V466.3H557V465.7H556Z" fill="#566756"/>
<rect x="556" y="406.2" width="31" height="2.5" fill="#7f927f" opacity="0.7"/>
<rect x="556" y="460.2" width="31" height="3.5" fill="#a9b9a9" opacity="0.95"/>
<path d="M586 408 C590 409,591 413.5,596 413.5" fill="none" stroke="#566756" stroke-width="6.4"/><path d="M586 408 C590 409,591 413.5,596 413.5" fill="none" stroke="#a9b9a9" stroke-width="3"/>
<path d="M595 410.4H596V410.2H597V409.8H598V410.4H599H600V410H601V410.4H602V409.8H603V410H604V410.3H605V410.5H606V409.7H607V408.1H608V410.4H609V410H610V410.3H611V409.8H612V410.2H613V409.8H614H615H616V410H617V410.4H618V409.7H619V410.3H620V409.7H621V410.2H622H623H624V409.8H625H626V410.2H627V410.5H628V409.7H629V408.4H630V409.8H631V410.4H632H633V409.9H634V410.5H635V409.9H636V410.4H637V409.3H638V410H639V409.9H640V410.1H641V408.8H642V410.4H643V410.4H644V409.7H645V410H646V410.3H647V407.2H648V410.2H649V410H650V410.4H651V410.1H652H653V410.5H654V410.3H655V410H656V410.1H657V409.9H658V409.7H659V410.4H660V410H661V410.4H662V410H663V410.2H664V410H665V410.2H666H667V409.5H668V409.9H669H670V410.2H671V410.3H672V410H673H674V410.3H675V410.2H676V409.8H677V410.1H678V408.3H679V410.5H680V409.7H681V410.1H682V409.3H683V408.4H684V410.3H685V408.4H686V410H687H688H689V470.1H688H687V470.6H686V470.7H685V470.5H684V470.7H683V470.5H682V470.6H681V470.2H680V470.7H679V470.1H678V470.2H677V470.6H676V470.5H675V470.3H674V470.6H673V470.4H672V470.8H671V470.6H670V471.7H669V470.2H668V470.3H667H666V470.4H665H664V470.6H663V470.3H662V470.4H661V470.3H660V470H659V470.4H658H657V470.2H656V470.3H655H654V470.4H653V470.7H652V470.4H651V470.2H650V470.7H649V470.1H648V471.2H647V470.3H646V470.8H645V470.5H644V470.7H643V470.3H642V470.7H641V470.2H640V470.2H639V470.7H638V471.9H637V470.3H636V470.6H635V470.3H634V470.2H633V470.5H632V470.2H631V470.6H630V470.4H629V470H628V470.1H627V470.5H626V470.7H625V470.4H624V470.1H623H622V471.3H621V470.1H620V470.3H619V470.8H618V470.5H617H616V470.7H615H614V470.5H613H612V470.8H611V470.7H610V470.5H609V470H608V470.2H607V470.5H606H605V470.4H604V470.7H603V470.7H602V470.3H601V470.8H600V470.5H599V470.6H598V470.3H597V470H596V470.4H595V470.7Z" fill="#566756"/>
<rect x="595" y="412" width="94" height="3" fill="#a9b9a9" opacity="0.9"/>
<rect x="595" y="462.2" width="94" height="3.5" fill="#94a694" opacity="0.8"/>
<path d="M688 464 C693 463,701 461.8,707 461.8" fill="none" stroke="#566756" stroke-width="6.4"/><path d="M688 464 C693 463,701 461.8,707 461.8" fill="none" stroke="#a9b9a9" stroke-width="3"/>
<path d="M706 404.3H707H708V404.2H709V404H710V403.7H711V404.4H712H713V404.1H714V404H715V403.8H716V404.3H717V404.5H718H719V404.1H720V401H721V404.5H722V403.9H723V403.8H724V404.1H725V402.7H726V404.1H727V403.2H728V404H729V401.4H730V404.3H731V403.8H732V404.3H733V404.4H734V403.5H735V404.4H736V403.8H737V404.2H738V404.5H739V401.4H740V404H741H742V404.4H743V403.8H744V404H745V403.6H746V404.2H747V403.9H748H749V404.3H750V404.2H751V404.3H752V404.1H753V404.3H754V403.9H755V404H756V404.1H757V404H758H759V404.1H760V404.5H761V402.8H762V404.4H763V403.8H764V404.4H765V403.2H766V404.1H767V402.2H768V404H769H770V403.8H771V404.1H772V404.1H773V404.2H774V403.9H775V404H776V404.2H777V404.1H778V404.2H779V404H780V404.3H781V404.1H782V404H783V404.5H784V404.1H785V403.8H786V404H787V401.2H788V404.1H789V403.9H790V403.5H791V466H790H789V465.7H788V465.5H787H786V466H785V466.7H784V466.3H783H782V465.6H781V465.9H780V465.7H779V466.2H778H777V465.6H776V465.9H775V465.6H774V466H773V466.3H772V465.9H771V466.1H770V466.2H769V465.8H768V465.5H767V466.1H766H765V465.9H764V465.6H763V466.2H762V466.3H761V465.9H760V465.9H759V465.8H758V465.9H757V466.2H756V465.7H755V466.6H754V465.6H753V467.4H752V465.6H751V466.2H750V465.6H749V466.7H748V465.5H747V466.2H746V465.7H745V466H744V467.8H743V465.6H742V465.7H741V465.8H740V465.9H739V465.8H738V466.1H737V465.6H736V466.2H735V466.3H734V465.8H733H732V465.7H731V465.6H730V466.2H729V466.1H728H727V465.9H726V465.5H725V465.8H724V465.6H723V465.7H722V466H721V466.1H720V465.8H719V465.7H718H717V465.5H716V465.9H715V465.9H714V465.6H713V466.3H712V465.8H711V466.3H710V465.7H709V465.8H708V465.9H707V465.7H706V466Z" fill="#566756"/>
<rect x="706" y="406.2" width="85" height="2.5" fill="#7f927f" opacity="0.7"/>
<rect x="706" y="460.2" width="85" height="3.5" fill="#a9b9a9" opacity="0.95"/>
<path d="M790 408 C794 409,796 413.5,801 413.5" fill="none" stroke="#566756" stroke-width="6.4"/><path d="M790 408 C794 409,796 413.5,801 413.5" fill="none" stroke="#a9b9a9" stroke-width="3"/>
<path d="M800 410.1H801V410.4H802V410.4H803V409.7H804V410.2H805V410.4H806V408.8H807V410.4H808V410.5H809H810V410.3H811V409.9H812V409.8H813V409.9H814V410.4H815V407.7H816V410.1H817V410.1H818V407.8H819V409.8H820V409.8H821V407H822V410.5H823V410.1H824V409.8H825V409.7H826V409.9H827V409.7H828V410.1H829V409.8H830V409.7H831V409.9H832V410.4H833V409.7H834V410.4H835V409.9H836V409.9H837V409.7H838V410.3H839H840V409.8H841V410.2H842H843V410.1H844V409.8H845V409.2H846V409.9H847V410H848V410.2H849H850V410.2H851H852V408.5H853V409.8H854H855V408.4H856V410.3H857V410.3H858V408.1H859V410.2H860V410H861V410.3H862V407.8H863V409.8H864V409.7H865V410H866H867V409.7H868V410.3H869V410.2H870V409.8H871V410.4H872H873V409.8H874V410.1H875V409.8H876V408.1H877V410.2H878H879V410.4H880V410.1H881V409.9H882V410.4H883V410.1H884V410H885V410.2H886V410H887V410.4H888V409.8H889H890V410H891V410.3H892H892.5V470.5H892H891H890H889V470.6H888V470.1H887V470.3H886V470.4H885V470.7H884V470H883V470.1H882V470.4H881V470.3H880H879V470.5H878V470.7H877V470.3H876V470.8H875V470.3H874V470.8H873V470H872V470.3H871H870V470.5H869V471H868V470.1H867V470.7H866V470.5H865V470.7H864V470.6H863V470.1H862V470.2H861V470.1H860H859V470H858V471.5H857V470.7H856V470.3H855V470.2H854V470.4H853H852V470H851V470.1H850V470.2H849V470.7H848V470.3H847V470.2H846V470.5H845V470.5H844V470.8H843V470.1H842V471.8H841V470.4H840V472.1H839V470.3H838V470.6H837V470.4H836V471.6H835V470.5H834V470.5H833V470.4H832V470.5H831V470.2H830V470.2H829V470.5H828H827V470.7H826V470.3H825V470H824V471H823V470H822V470.1H821V470.1H820V470.5H819V470.1H818H817V470.5H816H815V470.2H814V470.6H813V470.3H812V470.4H811H810V472H809V470.4H808V470.2H807V472.3H806V470.1H805V470.7H804V470.6H803V470.8H802V470.9H801V470.2H800V470.6Z" fill="#566756"/>
<rect x="800" y="412" width="92.5" height="3" fill="#a9b9a9" opacity="0.9"/>
<rect x="800" y="462.2" width="92.5" height="3.5" fill="#94a694" opacity="0.8"/>
<path d="M891.5 464 C896.5 463,904 461.8,910 461.8" fill="none" stroke="#566756" stroke-width="6.4"/><path d="M891.5 464 C896.5 463,904 461.8,910 461.8" fill="none" stroke="#a9b9a9" stroke-width="3"/>
<path d="M909 404.1H910V404H911V404.3H912V401.7H913V403.6H914V404.3H915V404.4H916V404H917V403.7H918V404.3H919V404H920H921V404.3H922V403.8H923V404H924V404.3H925V403.8H926V404.5H927V403.8H928V404.2H929H930V404H931V404.1H932V403.9H933V404H934V404.5H935H936V403.8H937V404.3H938V404.2H939V404.4H940H941V404.3H942V404.4H943V403.2H944V404.4H945V404H946V403.8H947V404.1H948V403.9H949V404.4H950V403.8H951V404.5H952V404.3H953V403.8H954V403.9H955H956V401.8H957V404.1H958V403.9H959V403.9H960V403.3H961V404.3H962V403.8H963V403.9H964V404.4H965V404H966V404.2H967V404.2H968V404.4H969V401.2H970V404.5H971V404.2H972V402.2H973V404.2H974V404H975H976V404.2H977V404H978V404.5H979V402.6H980V404.2H981V403.9H982V404.4H983V403.7H984H985V404.3H986H987H988V403.9H989V404.5H990V404H991V404.5H992V404.4H993V404.3H994V466H993H992V466.3H991V465.7H990V465.7H989V465.9H988H987V466.1H986V465.9H985V465.7H984V465.7H983H982V466.2H981V465.7H980V465.5H979V465.8H978V465.7H977V466.1H976V465.9H975V466.2H974V465.7H973V465.9H972V466.3H971V465.5H970H969V465.9H968V465.6H967H966H965V465.8H964V467.2H963V466H962V465.9H961V465.7H960H959V466H958V465.8H957V466.2H956V467H955V466H954V465.6H953V465.8H952V465.6H951V465.8H950V465.9H949V465.8H948V466H947V465.9H946V465.7H945V466.1H944V465.7H943V466H942V466.3H941V466H940V465.7H939V465.9H938V465.6H937V466.1H936V465.8H935V466.1H934V466.6H933V466.5H932V465.9H931V465.7H930V466.6H929V466.3H928V466.1H927V465.6H926V466.2H925V465.7H924V465.5H923V466.1H922V465.5H921V466H920V466.3H919V466.1H918V467.5H917V465.5H916V465.9H915V466.2H914V465.5H913V465.6H912H911V466.3H910V466.2H909V466.3Z" fill="#566756"/>
<rect x="909" y="406.2" width="85" height="2.5" fill="#7f927f" opacity="0.7"/>
<rect x="909" y="460.2" width="85" height="3.5" fill="#a9b9a9" opacity="0.95"/>
<path d="M993 408 C997 409,999 413.5,1004 413.5" fill="none" stroke="#566756" stroke-width="6.4"/><path d="M993 408 C997 409,999 413.5,1004 413.5" fill="none" stroke="#a9b9a9" stroke-width="3"/>
<path d="M1003 409.7H1004V410.4H1005V409.7H1006H1007V410H1008V409.9H1009H1010H1011V409.7H1012V410H1013V409.9H1014V410.4H1015V410.2H1016V410.5H1017V410.4H1018V410.3H1019V409.9H1020V407.7H1021V410H1022V408.8H1023V410.3H1024V410.3H1025V409.8H1026V409.7H1027V410.2H1028V409.7H1029V410.2H1030V409.9H1031V409.7H1032V409.9H1033V409.9H1034H1035V410.4H1036V410.3H1037V410.1H1038V409.8H1039V410.2H1040V409.1H1041V410H1042H1043V409.7H1044V410.3H1045V410.5H1046V410.3H1047V409.9H1048V410H1049V410.5H1050H1051V408.6H1052V410.1H1053V410.3H1054H1055H1056V408.1H1057V409.4H1058V407.1H1059V410.3H1060V409.3H1061V410.1H1062V410.2H1063V409.7H1064V410.5H1065V409.8H1066V410.5H1067V410.3H1068V410.2H1069V409.5H1070V409.8H1071H1072V407.9H1073V410.3H1074V409.8H1075V409.9H1076V409.8H1077V410H1078V408.6H1079V408.4H1080V410.2H1081V409.7H1082V410.1H1083V410.4H1084V409.9H1085V410.3H1086V409.8H1087V410.4H1088V408.3H1089V410.5H1090V410.2H1091V410.5H1092V409.7H1093V410.2H1094V410.3H1095V409.7H1096V408.5H1097V470.7H1096H1095V470.5H1094H1093V470.3H1092V470.2H1091V470.1H1090V470.6H1089V470.2H1088V470.4H1087H1086V470.2H1085V470.4H1084V470.6H1083V470.3H1082H1081V470.2H1080V470H1079V470.2H1078H1077V470.1H1076V470H1075V471.5H1074V471.7H1073V470.3H1072V470.1H1071V470.4H1070V470.7H1069H1068V470.6H1067V471.5H1066V470.3H1065V470H1064V471.3H1063V470.1H1062V470.4H1061V470.3H1060V471.2H1059V470.4H1058V470.6H1057V470.5H1056V470.2H1055H1054V470.5H1053V470.4H1052V470.8H1051V470.2H1050V470.1H1049V470.6H1048H1047V470.3H1046V470.1H1045V470.3H1044H1043V470.2H1042H1041V472.1H1040V470.2H1039V470.3H1038V470.2H1037V470.4H1036V470.2H1035H1034H1033V470.6H1032V470.3H1031V470.2H1030V470.1H1029V470.4H1028H1027V470.3H1026V470.5H1025V470.2H1024V470.1H1023V471.9H1022V470.4H1021V471H1020V470.8H1019V470.7H1018V470.6H1017V470.6H1016V471.6H1015V470.5H1014V470.8H1013V470.6H1012V470.7H1011V470.5H1010V470.3H1009V470.1H1008V470.7H1007V470.1H1006V470.3H1005V470.6H1004V470.6H1003V470.3Z" fill="#566756"/>
<rect x="1003" y="412" width="94" height="3" fill="#a9b9a9" opacity="0.9"/>
<rect x="1003" y="462.2" width="94" height="3.5" fill="#94a694" opacity="0.8"/>
<path d="M1096 464 C1101 463,1107 461.8,1113 461.8" fill="none" stroke="#566756" stroke-width="6.4"/><path d="M1096 464 C1101 463,1107 461.8,1113 461.8" fill="none" stroke="#a9b9a9" stroke-width="3"/>
<path d="M1112 404H1113V403.7H1114V404.4H1115H1116V403.9H1117V404.1H1118H1119V404H1120V403.9H1121V404.4H1122V404.5H1123V404.3H1124V402.5H1125V404H1126V404.4H1127V404.3H1128V404.4H1129V404H1130V402.9H1131V402H1132V404.5H1133H1134V402.6H1135V403.7H1136V404.3H1137V403.8H1138V404H1139V403.1H1140V403.9H1141V404.1H1142H1143V404.5H1144V403.7H1145V401.9H1146V403.8H1147V403.7H1148V404.3H1149V404.1H1150V403.8H1151V404.3H1152H1153V404H1154V403.2H1155V404.2H1156V404.1H1157V403.8H1158V404.2H1159V404H1160V404.3H1161V404.1H1162V404H1163V403H1164V404.1H1165V404.4H1166V404.4H1167V404.1H1168H1169V403.9H1170V404.1H1171V403.8H1172V404.4H1173V404.3H1174V404H1175V404.2H1176V403.7H1177V400.7H1178V404.2H1179V404.5H1180V403.8H1181V404H1182V404.3H1183V403.8H1184V404.2H1185H1186V401.9H1187V404.2H1188V403.8H1189V401.4H1190V403.2H1191V403.9H1192V404.1H1193V404.4H1194V403.8H1195V404.3H1196V404.1H1197H1197.5V466H1197H1196V465.8H1195H1194V465.5H1193V465.6H1192V466.8H1191V466H1190V465.9H1189H1188V465.7H1187V465.9H1186V466.2H1185H1184V465.9H1183H1182V465.7H1181H1180V465.9H1179V466.2H1178V466.6H1177V466.4H1176V465.5H1175V465.7H1174H1173V465.9H1172V467.6H1171V465.8H1170V466H1169V465.9H1168V467H1167V466.1H1166V466.8H1165V465.6H1164V466.3H1163V465.9H1162V465.6H1161V466.1H1160V466.9H1159V465.9H1158V466.2H1157V465.7H1156V466H1155H1154H1153V465.8H1152H1151V466H1150V465.9H1149V466.2H1148V466.1H1147V465.9H1146H1145V465.9H1144V465.7H1143V466.1H1142V465.5H1141V465.7H1140V465.8H1139V466.3H1138V467.2H1137V465.8H1136V465.8H1135V466.1H1134H1133V465.6H1132V466.2H1131V465.9H1130V465.7H1129V466H1128V466.3H1127V465.9H1126V465.6H1125H1124V465.8H1123V465.6H1122V466.2H1121V466.1H1120V467.2H1119V466.2H1118V465.9H1117V465.8H1116V466.4H1115V465.7H1114V465.7H1113V465.8H1112V466.1Z" fill="#566756"/>
<rect x="1112" y="406.2" width="85.5" height="2.5" fill="#7f927f" opacity="0.7"/>
<rect x="1112" y="460.2" width="85.5" height="3.5" fill="#a9b9a9" opacity="0.95"/>
<path d="M1196.5 408 C1200.5 409,1203 413.5,1208 413.5" fill="none" stroke="#566756" stroke-width="6.4"/><path d="M1196.5 408 C1200.5 409,1203 413.5,1208 413.5" fill="none" stroke="#a9b9a9" stroke-width="3"/>
<path d="M1207 409.8H1208V410.3H1209H1210V410.4H1211V410.3H1212V410.2H1213V410H1214V410H1215V410.1H1216V410.4H1217V410.5H1218V409.8H1219H1220V409.8H1221V410.2H1222V410.2H1223H1224V410.5H1225V409.8H1226V409.9H1227V409.8H1228V410.1H1229V409.7H1230V408H1231V409H1232V410.1H1233V410.4H1234V407.8H1235V410.2H1236V410.3H1237V410H1238V410.2H1239V410H1240V409.9H1241V410.5H1242V410.4H1243H1244V410.2H1245V409.9H1246V410.2H1247V410H1248H1249V409.7H1250V410.2H1251V410.2H1252V410.1H1253V409.8H1254V409.8H1255V409.9H1256V410.1H1257V410.3H1258V409.8H1259V409.7H1260V407.6H1261V410.3H1262V410.1H1263V407.7H1264V410H1265V409.8H1266V409H1267V409.9H1268H1269V410.5H1270V470.3H1269H1268V470.1H1267H1266H1265V470.6H1264H1263V470.7H1262V470.5H1261V470.3H1260H1259V470.1H1258V470.1H1257V470.4H1256V471.4H1255V470.7H1254V470.6H1253V470.5H1252V471.1H1251V470.1H1250V470.5H1249V470.2H1248V470.1H1247H1246H1245V471.1H1244V470.1H1243V470.4H1242H1241V471.3H1240V470.2H1239V470.5H1238V470.7H1237H1236V470.3H1235V470.6H1234V470.2H1233V470.6H1232V470.7H1231V470.2H1230V470.3H1229V470.8H1228V470.6H1227V470.5H1226V470.6H1225H1224V470.2H1223H1222V470.3H1221V470.6H1220V470H1219V470.7H1218V470.4H1217V470.3H1216H1215V470.4H1214V470.8H1213H1212V471H1211V470.3H1210V470.1H1209H1208V470.2H1207V470Z" fill="#566756"/>
<rect x="1207" y="412" width="63" height="3" fill="#a9b9a9" opacity="0.9"/>
<rect x="1207" y="462.2" width="63" height="3.5" fill="#94a694" opacity="0.8"/>
<polyline points="384.5,408.5 388,411 391.3,413.5" fill="none" stroke="#a9b9a9" stroke-width="3" stroke-linejoin="round"/>
<rect x="390.3" y="413" width="2" height="51" fill="#a9b9a9"/>
<rect x="1113.7" y="403" width="2.2" height="57" fill="#fff"/>
<rect x="910.5" y="403" width="1.6" height="57" fill="#fff"/>
<path d="M391.5 458.3H392.5H393.5V458.7H394.5V458.6H395.5V458.8H396.5V458.7H397.5V459.2H398.5V458H399.5V455H400.5V453.8H401.5V452.4H402.5V451.2H403.5V450.7H404.5V449.6H405.5V448.4H406.5V448.5H407.5V447.4H408.5V447.4H409.5V446.8H410.5V458.2H411.5H412.5H413.5V458.1H414.5V457.4H415.5V458.3H416.5V458.2H417.5V458.1H418.5V458.5H419.5V458.1H420.5V456.6H421.5V458.6H422.5V458.3H423.5V458H424.5V458.6H425.5H426.5H427.5V458.7H428.5H429.5V458.2H430.5V458.3H431.5H432.5V458.1H433.5V458.7H434.5V458.2H435.5V457.8H436.5V456.9H437.5V458.7H438.5V458.8H439.5V458.5H440.5V457.2H441.5V458.3H442.5V458.8H443.5V458.6H444.5V458.4H445.5H446.5V458.1H447.5V459H448.5V458.9H449.5V459H450.5V458.9H451.5V458.7H452.5V458.5H453.5V458.4H454.5V459.1H455.5V458.8H456.5V459.1H457.5V458.6H458.5V457.4H459.5V458.5H460.5V458.9H461.5V458.5H462.5V458.6H463.5V458.8H464.5V459H465.5V459.2H466.5V458.9H467.5V459H468.5V459.2H469.5H470.5V459H471.5V458.8H472.5V458.7H473.5V459.1H474.5V458.9H475.5V458.7H476.5V458.9H477.5V459H478.5V458.9H479.5V458.8H480.5V459.2H481.5V458.9H482.5V459.4H483.5V459.2H484.5V459H485.5V459H486.5V459H487.5H488.5V459.2H489.5V459.5H490.5V459.7H491.5H492.5V458.2H493.5V459.5H494.5V459.2H495.5V459.4H496.5V459.2H497.5V459.5H498.5V459.7H499.5V459.3H500.5V459.6H501.5V459.8H502.5V459.7H503.5V459.6H504.5H505.5V459.8H506.5V460H507.5V459.7H508.5V459.1H509.5V458.6H510.5V459.7H511.5V460H512.5V459.6H513.5V460.2H514.5V460H515.5V459.9H516.5V459.6H517.5V460.3H518.5V460.3H519.5V460.2H520.5V459.2H521.5V459.9H522.5V460H523.5V460.1H524.5V460.1H525.5V460.2H526.5V460H527.5H528.5V460.4H529.5V460.5H530.5H531.5H532.5V460.6H533.5V460.1H534.5V460.4H535.5V460.1H536.5V460.5H537.5V459.3H538.5V460.6H539.5V460.4H540.5V459.6H541.5V460.6H542.5V459.9H543.5V460.5H544.5V460.8H545.5V460.1H546.5V458.8H547.5V456.9H548.5V457.4H549.5V458.8H550.5V459.6H551.5V460H552.5V459.5H553.5V459.3H554.5V458.5H555.5V457.4H556V458.4V465.6H555.5V466.5H554.5V466.7H553.5H552.5V467.4H551.5H550.5V469H549.5V466.6H548.5V465.2H547.5V465.5H546.5V466.4H545.5V468.1H544.5V468.3H543.5V468.7H542.5V468.5H541.5V468.2H540.5V468.5H539.5V468.6H538.5V468.5H537.5V468H536.5V468H535.5V469.2H534.5V468.4H533.5V468H532.5V468.1H531.5H530.5V468.5H529.5V469.3H528.5V468.1H527.5V468.3H526.5V467.9H525.5V469H524.5V468.3H523.5H522.5H521.5V468.1H520.5V467.8H519.5V467.6H518.5V468.2H517.5V467.7H516.5V468.2H515.5V467.9H514.5V467.7H513.5V467.6H512.5V467.9H511.5V467.7H510.5V468H509.5V467.5H508.5V467.4H507.5V467.5H506.5V467.3H505.5V467.9H504.5V467.7H503.5V467.4H502.5V467.6H501.5V467.3H500.5V467.1H499.5V468.1H498.5V467.5H497.5V467.3H496.5V467.2H495.5H494.5V467.3H493.5V467H492.5V467.1H491.5V467.2H490.5V467.3H489.5V467.5H488.5H487.5V467.2H486.5V467.1H485.5V467H484.5V467H483.5V467.1H482.5V467.3H481.5V467.2H480.5V467.1H479.5V466.8H478.5V466.8H477.5V466.9H476.5V467.1H475.5V466.9H474.5V466.7H473.5V466.9H472.5V466.8H471.5V467H470.5V467.1H469.5V466.7H468.5V466.6H467.5V466.8H466.5H465.5V466.6H464.5V468.3H463.5V467H462.5V467.8H461.5V467H460.5V467H459.5V466.4H458.5V466.6H457.5V467H456.5V466.9H455.5V466.8H454.5V466.9H453.5V466.5H452.5V466.3H451.5V466.7H450.5V466.8H449.5V466.9H448.5V466.3H447.5V466.8H446.5V466.3H445.5V466.8H444.5V466.5H443.5V466.8H442.5V466.6H441.5V467.4H440.5V466.4H439.5V466.6H438.5V466.8H437.5V466.6H436.5V466.3H435.5V466.5H434.5H433.5V466.1H432.5V466.3H431.5V466.5H430.5V466.7H429.5V466.1H428.5V466.3H427.5V466.1H426.5V465.9H425.5V466.5H424.5H423.5V466.2H422.5V466.1H421.5V466.4H420.5V467.1H419.5V465.9H418.5V466.7H417.5V466.3H416.5V466.1H415.5V466.3H414.5V465.9H413.5V467.1H412.5V466.1H411.5V465.6H410.5V466.1H409.5V454.5H408.5V454.9H407.5V455.3H406.5V456.8H405.5V456.4H404.5V457.5H403.5V458.4H402.5V459.2H401.5V460.5H400.5V461.4H399.5V463.3H398.5V465.7H397.5V466.8H396.5H395.5V466.7H394.5V466.9H393.5V466.3H392.5V466.5H391.5V467Z" fill="#667866"/>
<polyline points="391.5,462.5 398,463 400,458 405,453 409.5,450.5 410,462 440,462.5 480,463 520,464 545,464.5 548,461 551,464 556,462" fill="none" stroke="#a9b9a9" stroke-width="3"/>
<rect x="414" y="414" width="1" height="54" fill="#607060"/>
<rect x="437" y="414" width="1" height="54" fill="#607060"/>
<rect x="459.7" y="414" width="1" height="54" fill="#607060"/>
<rect x="482" y="414" width="1" height="54" fill="#607060"/>
<rect x="399.5" y="466" width="1" height="4" fill="#607060"/>
<rect x="550.5" y="459" width="1" height="18.5" fill="#607060"/>
</g>
<g id="c6">
<polyline points="78.6,595.2 91.3,512.3" fill="none" stroke="#c00000" stroke-width="1.6" stroke-linejoin="round"/>
<polyline points="181,510.3 191,590.8" fill="none" stroke="#c00000" stroke-width="1.6" stroke-linejoin="round"/>
<polyline points="283,595.6 295,512.3" fill="none" stroke="#c00000" stroke-width="1.6" stroke-linejoin="round"/>
<path d="M17 585.9H18V586.4H19V586.5H20V586.3H21V586.7H22V586.3H23V586.7H24V586.1H25V586.5H26V586.7H27V587H28H29V587.1H30V586.4H31V586.1H32V586.4H33V587.3H34V586.5H35V587.3H36V586.2H37V586.5H38V586.8H39V587.3H40H41H42V587.6H43V587.1H44V587.6H45V587.4H46V587.6H47V587.3H48V587.9H49H50V586.1H51V588.1H52V587.6H53V588.2H54H55V588.4H56V588.2H57V588.7H58V587.8H59V588.3H60V588.5H61V589H62V589.2H63V588.9H64H65H66V589.2H67V589.1H68V589.2H69V588.7H70V590H71V589.5H72V589.9H73H74V589.7H75V589.4H76V590.5H77V590.2H78V590.8H78.6V590.9V599.5H78V599.6H77V599.5H76V600.1H75V599.6H74V599.4H73V599.2H72V600.3H71V599.3H70V599.6H69V599.3H68V599.3H67V599H66V598.7H65V599.4H64V599.1H63V598.2H62V598.4H61V598.6H60V597.9H59H58V598H57V598H56H55H54V597.3H53V597.1H52V597.4H51V597.5H50V597.6H49V596.8H48V596.9H47V597H46H45V597.7H44V597H43V596.6H42V596.9H41V596.2H40V597.5H39V596.4H38V596.5H37V596.2H36H35V596.2H34V596H33V596.8H32V596.1H31V596.5H30V596.2H29V596.6H28V596H27H26V596.4H25V595.6H24V595.9H23V595.6H22V595.7H21V596.5H20V595.5H19V595.8H18V595.6H17Z" fill="#b00000"/>
<polyline points="17,589.8 45,590.8 78.6,594" fill="none" stroke="#ff0808" stroke-width="2.4"/>
<path d="M91.3 507.3H92.3V507.5H93.3V507.2H94.3V507.4H95.3V507.2H96.3V507.5H97.3V507H98.3H99.3V507.1H100.3V507.5H101.3V507.1H102.3V506.4H103.3V506.8H104.3V507.6H105.3V507.4H106.3V507.1H107.3V506H108.3V505.9H109.3V506.8H110.3V506.6H111.3V505.3H112.3V506.5H113.3V506.6H114.3V506.3H115.3V506.4H116.3V506.9H117.3V507.1H118.3V507H119.3V506.7H120.3H121.3V506.7H122.3V506.3H123.3V506.5H124.3V506.4H125.3V506.9H126.3V506.2H127.3V505.8H128.3V505.1H129.3V506.2H130.3V506H131.3H132.3V506.7H133.3V506.3H134.3V506.6H135.3V506H136.3V506.3H137.3V505.9H138.3V506.5H139.3V506.1H140.3V505H141.3V506.6H142.3H143.3V506.5H144.3V506.2H145.3V506.3H146.3V505.8H147.3V506.1H148.3V506.2H149.3V506.1H150.3V505.9H151.3V506.1H152.3V505.5H153.3V506.4H154.3V506.2H155.3V506.1H156.3H157.3V506H158.3V505.5H159.3V505.4H160.3V505.6H161.3H162.3V505.4H163.3V506.1H164.3V505.7H165.3H166.3H167.3V504.8H168.3V506.1H169.3V506.2H170.3V505.9H171.3V505.6H172.3V505.4H173.3V506H174.3V505.7H175.3V505.7H176.3V505.6H177.3V506H178.3V505.6H179.3V505.9H180.3H181V506V514.6H180.3V515.9H179.3V515.4H178.3V514.9H177.3V515.3H176.3V515.5H175.3V515.2H174.3V514.9H173.3V515H172.3V514.9H171.3V514.8H170.3V515.4H169.3V516.2H168.3V515.6H167.3H166.3V515.3H165.3V515.8H164.3V516H163.3V516.7H162.3V515.1H161.3V515.2H160.3V515.4H159.3V515.8H158.3V515.5H157.3V515.2H156.3V515.4H155.3V515.6H154.3V516.2H153.3V515.5H152.3V515.8H151.3V515.7H150.3V515.9H149.3V515.7H148.3V515.3H147.3V516.3H146.3V515.3H145.3V515.8H144.3V515.3H143.3V517.2H142.3V515.5H141.3V515.8H140.3V516H139.3V515.6H138.3V515.5H137.3V516.1H136.3V515.9H135.3V515.5H134.3V515.4H133.3V515.5H132.3V515.6H131.3V516.2H130.3V516.3H129.3V515.6H128.3V516.2H127.3V515.9H126.3V516.2H125.3V516.5H124.3H123.3V515.9H122.3V516.1H121.3V516.5H120.3V515.8H119.3V516.6H118.3V516.4H117.3V516.3H116.3H115.3V516.9H114.3V515.9H113.3V517.2H112.3V516.3H111.3V516.6H110.3V516.4H109.3V516.6H108.3V516.7H107.3V516.2H106.3V516.5H105.3V516.8H104.3V516.3H103.3V517.2H102.3V517H101.3V516.6H100.3V516.4H99.3V516.9H98.3V517.3H97.3V517.7H96.3V516.9H95.3V516.8H94.3V516.7H93.3V516.9H92.3V516.6H91.3V517Z" fill="#b00000"/>
<polyline points="91.3,514.2 136.2,512.9 181,512.2" fill="none" stroke="#ff0808" stroke-width="2.4"/>
<path d="M191 586.2H192V585.9H193V586.6H194V586.3H195V586.1H196V586.2H197V586.5H198V586.1H199V586H200V585.1H201V586.1H202H203H204V586.9H205V586.5H206V586.9H207V586.6H208V586.5H209V587H210V586.4H211H212V586.8H213V586.6H214V587.2H215V586.9H216V587H217V586.7H218V586.6H219V587.1H220V586.6H221V587.4H222V587.4H223V586.9H224V587H225V586.1H226V587.1H227V587.2H228V587.3H229H230H231V587.7H232H233V587.9H234V587H235V587.7H236V587.4H237V588H238V587.7H239V587.3H240V587.5H241V587.4H242V587.7H243V588.1H244V588H245V587.5H246V588H247V587.9H248V586.9H249V588.2H250V588.7H251V588.6H252V587H253V588.2H254V588.7H255V589.2H256V588.6H257V589.2H258V589.4H259H260V588.7H261V589.2H262H263V589.1H264H265V589.1H266V589.9H267V590.1H268V589.3H269V590H270V590.3H271V589.5H272V590.2H273V590.3H274V590.6H275V590.3H276V590.5H277V590.2H278V590.6H279H280V589.9H281V591.1H282V590.2H283V591.3V599.9H282H281V600.2H280V600.4H279V601H278V599.5H277V600.3H276V599.8H275V601H274V600.1H273V600.8H272V599.7H271V599.3H270V599.6H269V599.4H268V600.2H267V599.6H266V598.9H265V599.2H264V598.6H263V599.1H262V598.3H261V599.1H260V598.2H259V599.4H258V598.5H257V598.2H256V598.7H255V598.3H254V598.2H253V598.7H252V597.6H251V598.2H250V597.6H249V597.9H248V597.8H247V598.8H246V597.6H245H244V597.7H243V597.1H242V598.1H241V596.9H240V597.4H239V596.9H238V598.2H237V596.6H236V597.3H235V596.7H234V597.2H233V597.1H232V596.9H231V597H230V597.2H229V596.4H228V596.6H227V596.6H226V596.9H225V596.6H224V597.5H223V596.3H222V596.6H221V596.8H220V596.7H219H218V596.5H217V597.4H216V595.9H215V596.1H214V596.4H213H212V595.9H211H210V596.4H209V596.6H208V596.5H207V595.7H206V597.2H205V596.7H204V596.3H203V595.6H202V595.8H201V595.5H200V596.4H199V595.9H198V596H197V595.8H196V595.4H195V595.3H194V595.6H193V595.4H192V595.5H191V595.7Z" fill="#b00000"/>
<polyline points="191,589.6 240,591.2 283,594.4" fill="none" stroke="#ff0808" stroke-width="2.4"/>
<path d="M295 507.9H296V507.4H297V507.2H298V507.5H299V507.7H300V507H301V507.2H302V507H303V506.8H304V507H305H306V507.3H307V506.9H308V507.3H309V506.9H310V506.9H311V506.8H312V507H313V505.9H314V507.1H315V506.9H316V507.1H317V507.2H318V505.6H319V506.8H320V507.1H321V506.5H322V506.3H323H324V506.5H325H326V506.9H327V506.2H328H329V506.4H330V506.3H331V506.2H332H333H334V506.7H335V506.1H336V506.4H337V506H338V506.1H339V506.7H340V505.9H341H342V506.2H343V506.5H344V506.6H345V505.8H346V504.8H347V505.9H348V506.5H349V506H350V506.1H351H352V506.2H353V505.7H354V506.2H355H356V506.3H357V506.1H358V504.9H359V506.1H360V505.5H361V506H362V505.5H363V505.3H364V505.9H365H366V505.5H367V505.4H368V505.7H369V506.1H370V505.6H371V506.1H372V506.1H373V505.6H374V505.3H375V505.8H376V505.4H377V505.3H378H379V505.5H380V505H381V505.7H382V505.3H383V504.2H384V506V514.6H383V516H382H381V515.5H380V514.7H379V515.2H378V514.9H377V516H376V515.6H375V515.1H374V515.2H373V515.6H372V516H371V515.2H370V515.5H369V515.7H368H367V515.6H366V515.1H365V515.2H364V515.4H363V515.4H362V515.1H361V515.8H360V515.5H359H358V515.2H357H356H355V515.4H354H353V515.7H352V515.4H351V515.9H350V516.3H349V515.3H348V516.3H347V515.6H346H345V515.7H344V516.4H343V515.4H342V515.5H341V516H340V516.2H339V515.4H338V515.6H337H336V516.8H335V515.6H334V516H333V516.2H332V516H331V516.2H330V516.2H329V516.5H328V515.7H327V516.6H326V516.2H325V516.5H324V516.1H323H322V516.4H321V515.9H320H319V516.5H318V516.4H317V516H316V516.6H315V516.8H314V516.4H313V516.8H312V516.3H311V516.5H310V517H309V516.9H308V516.8H307V516.3H306V516.8H305V516.5H304V516.4H303V517.2H302V516.9H301V517.2H300V518.1H299V516.8H298V517.2H297V517H296V516.9H295V517Z" fill="#b00000"/>
<polyline points="295,514.2 339.5,512.9 384,512.2" fill="none" stroke="#ff0808" stroke-width="2.4"/>
<polyline points="384,510.3 391.3,571" fill="none" stroke="#c00000" stroke-width="1.8" stroke-linejoin="round"/>
<rect x="391.3" y="549.8" width="159.5" height="4.2" fill="#e00000"/>
<polyline points="550.8,552 552.5,532 556,512.3" fill="none" stroke="#c00000" stroke-width="1.8" stroke-linejoin="round"/>
<polyline points="587,510.3 595,591.3" fill="none" stroke="#c00000" stroke-width="1.6" stroke-linejoin="round"/>
<polyline points="689,600.3 706,512.3" fill="none" stroke="#c00000" stroke-width="1.6" stroke-linejoin="round"/>
<polyline points="791,510.3 800,591.3" fill="none" stroke="#c00000" stroke-width="1.6" stroke-linejoin="round"/>
<polyline points="892.5,597.8 909,512.3" fill="none" stroke="#c00000" stroke-width="1.6" stroke-linejoin="round"/>
<polyline points="994,510.3 1003,591.3" fill="none" stroke="#c00000" stroke-width="1.6" stroke-linejoin="round"/>
<polyline points="1096.5,596.3 1111.5,512.3" fill="none" stroke="#c00000" stroke-width="1.6" stroke-linejoin="round"/>
<polyline points="1198,510.3 1207,591.3" fill="none" stroke="#c00000" stroke-width="1.6" stroke-linejoin="round"/>
<path d="M556 507.4H557V507.7H558V507.5H559V507.2H560V506.8H561V507.3H562V507.5H563V506.6H564V507H565V506.5H566V506.9H567H568V506.6H569V506.3H570V505.5H571V506.5H572V506.2H573V506H574V505.9H575V505.8H576H577V505.8H578V505.7H579V505.1H580V505.5H581V505.9H582V504.3H583V505.2H584V505.8H585V505.6H586H587V506V514.6H586V515H585V515.2H584V515.3H583V515.2H582V514.9H581V515.1H580V515.8H579V515.1H578V515.8H577V515.7H576V515.6H575V516.2H574V515.3H573V515.7H572V516.1H571V517H570V515.9H569V516H568V515.9H567V516.1H566V516.6H565V516.4H564V517.7H563V516.5H562V516.6H561V516.4H560V516.9H559V517.1H558V516.5H557V517H556V517Z" fill="#b00000"/>
<polyline points="556,514.2 571.5,512.9 587,512.2" fill="none" stroke="#ff0808" stroke-width="2.4"/>
<path d="M595 585.9H596V587H597H598H599V586.8H600V586.3H601V586.5H602V585.9H603V586.9H604H605V586.3H606V586.5H607V586.3H608V586.7H609V586.5H610V586.6H611V586.4H612V586.8H613V586.4H614V586.5H615V586.6H616V587.2H617V587H618V586.9H619V586.6H620V586.7H621V586.5H622V586.9H623V586.7H624V586.6H625V585.9H626V587.1H627V586.6H628V586.2H629V587.3H630V587.1H631V586.3H632V586.7H633V586.8H634V587.1H635V586.8H636H637V587H638V586.7H639V587.1H640V587.3H641H642V586.3H643V586.9H644V585.9H645V587.1H646V587.4H647V586.8H648V587.5H649V587.5H650V587.8H651V587.7H652V587.2H653V588.2H654V587.9H655V586.6H656V587.9H657V588.2H658V588.3H659V588.8H660V587.9H661V589.2H662V588.6H663V587.8H664V589.8H665H666V589.4H667V590H668V588.8H669V589.5H670V590.4H671V590.5H672V591.1H673V591.3H674V591.4H675V591.5H676V591H677V591.8H678V592.8H679V591.8H680V593.2H681V593.1H682V593.9H683V593.5H684V594.3H685V594.8H686V594.4H687V595.1H688V594.9H689V596V604.6H688V604.9H687V604.8H686V605H685V604.2H684V603.8H683V603.4H682V602.9H681V603.1H680H679V602.6H678V603H677V602.5H676V601.4H675V601.5H674V600.8H673V600.9H672V600.1H671V600.4H670V600.9H669V600.2H668V599.7H667V599.8H666V599.2H665V599.4H664V599.1H663H662V598.6H661V598.1H660V598.2H659V597.9H658V598.3H657V597.8H656V597.4H655V598.2H654V597.2H653V597.8H652V597H651V597.3H650V596.6H649V596.8H648V596.7H647V596.3H646V596.5H645V596.4H644H643V596.7H642V596.9H641V596.7H640V596.6H639V596.5H638V596.5H637V596.8H636V596.2H635V596.1H634V596.9H633V596.2H632V596.3H631V596.2H630V596.8H629H628V596.2H627V596.1H626V596.6H625V596.6H624V596.2H623V596.5H622V596H621V596.1H620V596.2H619H618V596.1H617V595.9H616V596.3H615H614V596.1H613V595.9H612V596.2H611V595.8H610V596.4H609V595.8H608V596.6H607V596.5H606V595.9H605V596.6H604V597.2H603V596.4H602V596.1H601V596H600V596.8H599V596.1H598V596.1H597V596.6H596V596.1H595V596Z" fill="#b00000"/>
<polyline points="595,590.1 646.7,590.6 662.7,592.6 677.7,595.9 689,599.1" fill="none" stroke="#ff0808" stroke-width="2.4"/>
<path d="M706 506.8H707V507.8H708V506.7H709V507.7H710V507.2H711V507.1H712V507.4H713H714V506.9H715V507.4H716V506.3H717V507.3H718V507.1H719V506.9H720V507H721V507H722V506.8H723H724H725V506.6H726V506.7H727V507.3H728V506.7H729H730V506.9H731V507H732V507.1H733V506.6H734V506H735V507.1H736V506.5H737V506.5H738V506.8H739V506.5H740V506.6H741V506.4H742H743V504.7H744V506.6H745V506.1H746V506.5H747V506.3H748V506.4H749V506.7H750V506.4H751V505.9H752V506.2H753V505.9H754V506.5H755V506H756V506.2H757V506.5H758V506.1H759V505.6H760V505.9H761V505.1H762V506H763V506.1H764V506.4H765V505.7H766V506.1H767V506.2H768V505.6H769V505.7H770V505.2H771V505.7H772V505.9H773V506.2H774V505.7H775V505.9H776V505.7H777V506.2H778V505.4H779V505.5H780V505.4H781V505.5H782V504.7H783V505.3H784H785V506H786V505.2H787V505.3H788V505.7H789V505.8H790V505.2H791V506V514.6H790V514.8H789V516.5H788V515.2H787V515H786V515.6H785V515.8H784V515H783H782V515.2H781V516H780V515.6H779V516.3H778V515.6H777V516.5H776V515.3H775V514.9H774V515.4H773V516.9H772V515.6H771H770V515H769V515.2H768V515.1H767V515.8H766V515.2H765V515.8H764V515.1H763V515.6H762V515.2H761V515.6H760V516.4H759V515.8H758V515.9H757V515.2H756V515.5H755V516H754V515.7H753H752V515.5H751V515.9H750V516.1H749H748V515.8H747V516.1H746V516.8H745V516H744V515.6H743V516.5H742V516.1H741H740V516H739V516.7H738V516.1H737V515.7H736V516.3H735V516.3H734V515.8H733V516.2H732V515.9H731V516H730V516.7H729V516.6H728V516.8H727V516.8H726V516H725V517.8H724V518.2H723V516.5H722H721V516.7H720V516.9H719V516.5H718V518.4H717V517.2H716V516.4H715V516.6H714V516.4H713V516.6H712V518.1H711V516.7H710V516.8H709V516.7H708V518.6H707V516.9H706V517.2Z" fill="#b00000"/>
<polyline points="706,514.2 748.5,512.9 791,512.2" fill="none" stroke="#ff0808" stroke-width="2.4"/>
<path d="M800 585.6H801V586.2H802V586.4H803V585.8H804V587H805V586.6H806V586.9H807V586.7H808V587H809V586.6H810V585.3H811V586.7H812V586.2H813V586.8H814V586.6H815V587H816V585.6H817V586.6H818V585.4H819V587.1H820V586.9H821V586.6H822V586.5H823V586.8H824V586.5H825V586.9H826V587.1H827V586.8H828V586H829V586.9H830V586.4H831H832V586.1H833V586.8H834V586.4H835V587.3H836V586.9H837V586.6H838V586.6H839V586.8H840V587H841V586.8H842V587H843V586.6H844V586.7H845V587H846V586.7H847V586.5H848V586.7H849V585.7H850V586.6H851V587.1H852V587.4H853V587.5H854V585.9H855V587.3H856V587H857V587.6H858H859V587.4H860V587.6H861H862V588.1H863V587.7H864V588.1H865V588.3H866V588.7H867V588.2H868V588.4H869V588H870V588.8H871V589.2H872V588.3H873V589.6H874H875V589.7H876V589.5H877V589.8H878V590H879V589.3H880V590.7H881V591H882V590.8H883V590.6H884V591.1H885H886V591.5H887V592.2H888V591.9H889V592.4H890V592.2H891V592.6H892V592.7H892.5V593.5V602.1H892V603H891V601.9H890V601.9H889V601.4H888V601.3H887V601.8H886V600.8H885V601.1H884V600.8H883V600.5H882V600.1H881H880V599.7H879V600.2H878V599.7H877V600.2H876V599H875V599.6H874V598.8H873V599.3H872V599.6H871V598.5H870V598.8H869V598.6H868V598.5H867V598H866V598.1H865V597.5H864H863V598.8H862V598.1H861V597.3H860H859V597.5H858V597.3H857V596.8H856V596.7H855V597.9H854V597.1H853V596.4H852H851V596.2H850V596.5H849V596.8H848V596.5H847V596.1H846V596.6H845V596.5H844V596.3H843V596.4H842V596.2H841H840V596.7H839V596.5H838H837V596.7H836H835V596.8H834V596.6H833V596.1H832H831V596.3H830V596.1H829V596.3H828V595.8H827V596.2H826V595.8H825V596.1H824V596.6H823V595.9H822V596.1H821V597H820V596.5H819V596H818H817V596.6H816V596.1H815H814V595.8H813V596.4H812V597.6H811V595.8H810V596.8H809V596.9H808V596.4H807V595.7H806V596.4H805V596.1H804V596.3H803V596.7H802V596H801V597.4H800V595.6Z" fill="#b00000"/>
<polyline points="800,590.1 850.9,590.5 866.6,591.9 881.4,594.3 892.5,596.6" fill="none" stroke="#ff0808" stroke-width="2.4"/>
<path d="M909 506H910V507.8H911V507.7H912V506.3H913V507.1H914V506.9H915V507.7H916V507.2H917V507.1H918V506.4H919V507.3H920V507.2H921V507.3H922V507.5H923H924V506.1H925V506.5H926V506.7H927H928V506.8H929V507.2H930V507.1H931V507.2H932V507H933V506.5H934V506.7H935V506.5H936V506.4H937V505.2H938V506.6H939V505.9H940V506.7H941V506.3H942V506.8H943V505.7H944V505.2H945V506.6H946H947V506H948V506.4H949H950V505.9H951V506.6H952V505.9H953V505.8H954H955V506H956V506H957V505.6H958V506.5H959V505.8H960V506.4H961H962V506.2H963V506.4H964V505.7H965V505.8H966V506.2H967V506.4H968V505.2H969V506H970V506.3H971V505.6H972V505.7H973V506.2H974V506.3H975V505.9H976V506H977V505.8H978V505.7H979V506H980V505.5H981V505.8H982V505.9H983V505.5H984V505.7H985V505.6H986V505.8H987V505.7H988V505.4H989V505.5H990V505.9H991V505.2H992V505.9H993V505.6H994V506V514.6H993V515.4H992V515.2H991V514.8H990V515.1H989V516H988V515.1H987V515.3H986V515.6H985V515H984V515.3H983V515.5H982V516.3H981V515.4H980V515.2H979H978V515.4H977H976V515.5H975V516H974V515.1H973V515.8H972V515H971V515.7H970V515.1H969V515.4H968V515.6H967V515.8H966V515.6H965V516.1H964V515.2H963V515.6H962V515.4H961V515.7H960V515.6H959V515.4H958V515.7H957V515.6H956V515.4H955H954V515.4H953V515.7H952V515.9H951V516.1H950V515.6H949V516.5H948V515.8H947V515.5H946V515.7H945H944H943V515.9H942V516H941V516.2H940V516.4H939V516H938V516.1H937V516.2H936V516.5H935V515.9H934V516.7H933H932V516H931V516.5H930V516.1H929V516.6H928V516.8H927V516.7H926V516.2H925H924V516.7H923V516.9H922V517.2H921V516.9H920H919V516.6H918V516.8H917V516.4H916V516.7H915H914V517.1H913V516.8H912V517.5H911V517H910H909V516.7Z" fill="#b00000"/>
<polyline points="909,514.2 951.5,512.9 994,512.2" fill="none" stroke="#ff0808" stroke-width="2.4"/>
<path d="M1003 586.9H1004V586.8H1005V585.3H1006V586.4H1007V586.7H1008V586.2H1009V586.3H1010V586.2H1011V585.4H1012V586.3H1013H1014H1015V586.6H1016V586.5H1017V586.7H1018V586.2H1019V587H1020V586.9H1021V586.3H1022V586.6H1023V585.9H1024V585.4H1025V587.1H1026V586.9H1027V586.8H1028V587H1029V586.9H1030V587H1031V585.2H1032V586.5H1033V586.6H1034V585.3H1035V586.4H1036V585.5H1037V585.8H1038V586.5H1039V586.9H1040V586.4H1041V587H1042V586.5H1043V586.3H1044V586.7H1045H1046V586.6H1047V586.5H1048V585.7H1049V586.5H1050V586.7H1051V587H1052V587.3H1053V586.2H1054V586.9H1055V586.6H1056V586.8H1057V587.3H1058V587.5H1059V586.5H1060V587.6H1061V587.2H1062H1063V587.1H1064V587.9H1065V587.8H1066H1067V587.9H1068V587.4H1069V588.3H1070V586.7H1071V588.4H1072V587.5H1073V587.8H1074V588H1075V588.8H1076V588.3H1077V588.9H1078V588.8H1079V588.4H1080V589H1081V589.1H1082V588.2H1083V589.3H1084V589.7H1085V590.1H1086V590H1087V590H1088V589.9H1089V589H1090V590.1H1091V591H1092V590.7H1093V591.4H1094V590.8H1095V591H1096V591.4H1096.5V592V600.6H1096V602.3H1095V600.9H1094V600.2H1093V600.9H1092V601H1091V600.2H1090V599.9H1089H1088V599.8H1087V600.2H1086V599.9H1085V598.8H1084V599.7H1083V599.3H1082V599.7H1081V599H1080V598.7H1079V598.6H1078V598.4H1077V598.2H1076V598.4H1075V597.9H1074V598.2H1073V597.6H1072V597.2H1071V597.5H1070H1069V597H1068V597.3H1067V596.9H1066V597.1H1065V596.7H1064V596.6H1063V596.9H1062V596.5H1061V596.6H1060V597.1H1059V596.5H1058H1057V596.9H1056V596.5H1055V596.6H1054V597.1H1053V596.9H1052V596.3H1051V596.2H1050V596.6H1049V596.3H1048V596.5H1047V596.3H1046V597.1H1045V596.2H1044V597.5H1043V597.7H1042V595.9H1041V596.4H1040V596.7H1039V596.1H1038H1037V596.6H1036V596.3H1035V596.7H1034V596.5H1033V595.9H1032V595.8H1031V596.5H1030V596.2H1029V595.9H1028V596.4H1027V596.5H1026V596.1H1025V596H1024V596.4H1023V596.3H1022V596.9H1021V596.4H1020V596.1H1019V595.9H1018V596.6H1017V596.2H1016H1015V596.4H1014V597.1H1013H1012V595.7H1011H1010V596.5H1009V596.3H1008V596.4H1007V595.7H1006V596.3H1005V595.8H1004V597.5H1003V595.8Z" fill="#b00000"/>
<polyline points="1003,590.1 1054.4,590.4 1070.3,591.5 1085.3,593.3 1096.5,595.1" fill="none" stroke="#ff0808" stroke-width="2.4"/>
<path d="M1111.5 506.7H1112.5V506.9H1113.5V507.8H1114.5V506.3H1115.5V507.2H1116.5V507.3H1117.5V507.1H1118.5V506.9H1119.5V507.2H1120.5V506H1121.5V506.8H1122.5V507H1123.5V507.4H1124.5V506.2H1125.5V506.7H1126.5V507.1H1127.5V507.5H1128.5V505.9H1129.5V507.4H1130.5V506.8H1131.5V507H1132.5V507.1H1133.5V507H1134.5V506.5H1135.5V506.5H1136.5V506.7H1137.5V507.2H1138.5V506.8H1139.5V506.3H1140.5V506.3H1141.5V506.3H1142.5V507H1143.5V506.7H1144.5V507H1145.5V506.7H1146.5V506.3H1147.5V506.2H1148.5V506.8H1149.5V506H1150.5V506.3H1151.5V506.7H1152.5V506.5H1153.5V505.9H1154.5V506.5H1155.5V506.2H1156.5V506.5H1157.5V506.3H1158.5V506.1H1159.5V505.6H1160.5V506.5H1161.5V506.4H1162.5V506.2H1163.5V505.3H1164.5V506.1H1165.5V505.7H1166.5V505.9H1167.5V506.2H1168.5V505H1169.5V504.8H1170.5V506.1H1171.5V505.7H1172.5V505.8H1173.5V505.6H1174.5V505.7H1175.5V506H1176.5V505.9H1177.5V506.2H1178.5V505.2H1179.5V505.9H1180.5V505.7H1181.5H1182.5V505.5H1183.5V506.1H1184.5V505.3H1185.5V506.1H1186.5H1187.5V505.9H1188.5V505.3H1189.5V505H1190.5V505.5H1191.5V506H1192.5V505.7H1193.5V505.9H1194.5V505.3H1195.5V505.8H1196.5V505.1H1197.5V505.2H1198V506V514.6H1197.5V515.4H1196.5V515H1195.5V514.7H1194.5V515.2H1193.5V515.5H1192.5H1191.5V514.7H1190.5V515.6H1189.5V515H1188.5V514.8H1187.5V516.4H1186.5V515.7H1185.5H1184.5V514.9H1183.5V515.4H1182.5V515.6H1181.5V515.3H1180.5V515.5H1179.5V515.7H1178.5V515.6H1177.5V515.8H1176.5V515.3H1175.5H1174.5V515.5H1173.5V515.1H1172.5V515.7H1171.5V515.5H1170.5V515.9H1169.5V515.1H1168.5V516.3H1167.5V515.6H1166.5V515.5H1165.5V515.4H1164.5V517.3H1163.5V515.6H1162.5V515.7H1161.5V515.8H1160.5V515.4H1159.5V515.8H1158.5V516H1157.5H1156.5H1155.5V515.4H1154.5H1153.5V515.8H1152.5V516.3H1151.5H1150.5V517.6H1149.5V516.3H1148.5V516.5H1147.5V515.9H1146.5V515.5H1145.5V515.9H1144.5V516.1H1143.5V516.5H1142.5V515.7H1141.5V516.7H1140.5V516H1139.5H1138.5V516.5H1137.5V516.6H1136.5V516.3H1135.5V516H1134.5V516.8H1133.5V516.1H1132.5V516.8H1131.5V516.1H1130.5V516.2H1129.5V516.8H1128.5V516.6H1127.5V516.2H1126.5V516.8H1125.5V516.4H1124.5V516.9H1123.5V517.7H1122.5V516.4H1121.5V517.7H1120.5V516.7H1119.5V517.2H1118.5V516.7H1117.5V516.5H1116.5V517.3H1115.5V516.9H1114.5V517.1H1113.5V517.3H1112.5V516.7H1111.5V517.5Z" fill="#b00000"/>
<polyline points="1111.5,514.2 1154.8,512.9 1198,512.2" fill="none" stroke="#ff0808" stroke-width="2.4"/>
<path d="M1207 586.7H1208V585.8H1209V586.8H1210V586.5H1211V586.4H1212V585.8H1213V586.3H1214V585.4H1215V586.9H1216H1217V586.9H1218V586.3H1219V586.9H1220H1221V586.2H1222V586.5H1223V587H1224V586.3H1225V585.9H1226V586.5H1227V586.3H1228V585.7H1229V587.2H1230V586.5H1231V587.1H1232V586.5H1233V586.8H1234V586.4H1235V586.6H1236V587H1237V586.5H1238V587H1239V586.8H1240V586.7H1241V586.4H1242V587.2H1243V587.2H1244H1245V586.5H1246V586.3H1247V587.2H1248V586.1H1249V587H1250V587.3H1251V586.9H1252V587.3H1253V586.5H1254V586.9H1255V586.7H1256V586.4H1257V587.2H1258V586.8H1259V587.2H1260V587.3H1261V586.6H1262V587.3H1263V587.4H1264V587H1265V587.3H1266V587.4H1267V587.1H1268H1269V586.9H1270V587.5V596.1H1269V596.9H1268V597H1267V596.1H1266V596.9H1265V596.4H1264V596.2H1263V596.1H1262H1261V596.3H1260V596.7H1259V596.8H1258V597.4H1257V596.6H1256V596.7H1255V597.3H1254V596.6H1253V596.3H1252V596H1251V596.5H1250V597.8H1249V596.2H1248V596.6H1247V596H1246V596.5H1245V596H1244V596H1243V596.8H1242V597.1H1241V597.7H1240V595.9H1239V596.3H1238V596.4H1237V596.1H1236V596.2H1235V596.7H1234V596.6H1233V596.7H1232V596.8H1231V596.3H1230V595.9H1229V595.9H1228V596.1H1227V596.4H1226V596.3H1225V596H1224V595.8H1223V595.8H1222V596.5H1221V596H1220V595.9H1219V596H1218V596.5H1217V596.2H1216V596.5H1215V595.8H1214H1213V596.7H1212V596.4H1211V597H1210V596.4H1209V596.4H1208V595.9H1207V595.6Z" fill="#b00000"/>
<polyline points="1207,590.1 1270,590.6" fill="none" stroke="#ff0808" stroke-width="2.4"/>
<rect x="390.9" y="533" width="1.1" height="188" fill="#8f0a0a"/>
<rect x="413.9" y="533" width="1.1" height="188" fill="#8f0a0a"/>
<rect x="436.9" y="533" width="1.1" height="188" fill="#8f0a0a"/>
<rect x="481.9" y="533" width="1.1" height="188" fill="#8f0a0a"/>
<rect x="459.6" y="532" width="1.1" height="20" fill="#8f0a0a"/>
<rect x="459.2" y="552" width="2" height="169" fill="#8f0a0a"/>
<rect x="504.9" y="201" width="1.1" height="370.5" fill="#8f0a0a"/>
<rect x="528" y="201" width="1.1" height="370.5" fill="#8f0a0a"/>
<rect x="550.5" y="532" width="1.1" height="48" fill="#8f0a0a"/>
</g>
<g id="c4">
<path d="M17 320.9H18V320.4H19V320.3H20V320.9H21V320.8H22H23V320.6H24V321H25V320.8H26V320.5H27V320.7H28H29V320.7H30V320.8H31V320.5H32H33V321H34V320.6H35V320.9H36V320.5H37V320.8H38H39V321H40V319.9H41V320.4H42V320.6H43H44V321H45V320.2H46V320.5H47V320.7H48V320.6H49V320.1H50V320.7H51V320.5H52V320.6H53H54V320H55V320.8H56V320.7H57H58H59V321H60V320.7H61V320.6H62V320.9H63V320.8H64V320.5H65V320.2H66V320.7H67V320.6H68V320.4H69H70V320.7H71V320.9H72V320.6H73V320.9H74V320.4H75V320.5H76V319.7H77V320.5H78H78.8V382.7H78H77V382.4H76V382.7H75V382.4H74V382.4H73V382.8H72V382.4H71V382.6H70V382.3H69V382.6H68V382.7H67V382.6H66V382.7H65V382.6H64V382.5H63H62V382.4H61H60H59V382.7H58V382.3H57V382.6H56V382.5H55V382.7H54V382.4H53V383H52V382.4H51H50V382.5H49V382.3H48V382.6H47V382.7H46V382.9H45V382.8H44V382.6H43V382.4H42V382.7H41V383.2H40V382.4H39H38H37H36V382.5H35V382.4H34V382.5H33V382.4H32V382.7H31H30V382.4H29V382.8H28V382.5H27V382.6H26V382.4H25V382.6H24V382.8H23V382.5H22V382.7H21H20V382.3H19V382.6H18V382.7H17V382.5Z" fill="#008200"/>
<rect x="17" y="322.6" width="61.8" height="2" fill="#0c960c" opacity="0.8"/>
<rect x="17" y="378.7" width="61.8" height="2.6" fill="#10e010"/>
<path d="M80.2 326H81.2V324.6H82.2V326.5H83.2V326.1H84.2V326.6H85.2V326.3H86.2V326.7H87.2V326.4H88.2V326.1H89.2V326.5H90.2V326H91.2V324.5H91.3V332.9H91.2H90.2V331.5H89.2H88.2H87.2V332.2H86.2V331.5H85.2H84.2H83.2H82.2H81.2H80.2Z" fill="#008200"/>
<path d="M77.8 325.5 C80.8 327.5,83.8 330.3,87.8 330.3 L92.3 330.3" fill="none" stroke="#008200" stroke-width="5.6"/><path d="M77.8 325.5 C80.8 327.5,83.8 330.3,87.8 330.3 L92.3 330.3" fill="none" stroke="#10e010" stroke-width="2.8"/>
<path d="M91.3 327.7H92.3V327.9H93.3H94.3V325.9H95.3V324.8H96.3V327.2H97.3H98.3V327H99.3V327.3H100.3V327.4H101.3V327.5H102.3V327.1H103.3V327.6H104.3V328H105.3V324.9H106.3V327.5H107.3V324.4H108.3V327.7H109.3V327.3H110.3V327.5H111.3V326.1H112.3V327.9H113.3V327.7H114.3V327.3H115.3V327.8H116.3V327.6H117.3V326.6H118.3V327.1H119.3V326.4H120.3V325H121.3V326.2H122.3V327.1H123.3V328H124.3V327H125.3V327.5H126.3V326.9H127.3V327.2H128.3H129.3V327.3H130.3V326.8H131.3V324.7H132.3V327.5H133.3V327.4H134.3V327.7H135.3V327.6H136.3V327.6H137.3V327.1H138.3H139.3V324.1H140.3V324.4H141.3V327.7H142.3V327.9H143.3V327.3H144.3V327.7H145.3V326H146.3V327.5H147.3V327.7H148.3V327.2H149.3V327.6H150.3V326.4H151.3V326.1H152.3V327H153.3V327.8H154.3V327H155.3V327.2H156.3V327.6H157.3V327.3H158.3V327H159.3H160.3V327.9H161.3V327.8H162.3H163.3V324.4H164.3V327.2H165.3V326.9H166.3V325.2H167.3V324.5H168.3V327.3H169.3V327.7H170.3V327H171.3V327.9H172.3V327.4H173.3H174.3V327.3H175.3H176.3V327.1H177.3V327.2H178.3V324.9H179.3V327.8H180.3V327.4H181V388.2H180.3H179.3H178.3V388.7H177.3V388.5H176.3H175.3V388.8H174.3V390.5H173.3V388.5H172.3V388.6H171.3V389.8H170.3V388.2H169.3V388.3H168.3V388.7H167.3V388.1H166.3V388.6H165.3V388.2H164.3V388.4H163.3V389H162.3V388.5H161.3V388.7H160.3V388.5H159.3V388.2H158.3V388.8H157.3V388.7H156.3V388.3H155.3V388H154.3V388.6H153.3V388.1H152.3H151.3H150.3V388.6H149.3V388.5H148.3H147.3V388.4H146.3V388H145.3V388.4H144.3V388.8H143.3V389.4H142.3V388.7H141.3V388.3H140.3V388.7H139.3V388H138.3V388.5H137.3V388.1H136.3V389.2H135.3V388.1H134.3V388.5H133.3V388.1H132.3V388.2H131.3V388.5H130.3V388.8H129.3V388.2H128.3V388.4H127.3V388.6H126.3V388.7H125.3V388.8H124.3V388.3H123.3V388.6H122.3V388H121.3V388.5H120.3V388.3H119.3V388.4H118.3V388.3H117.3V388.7H116.3V388.5H115.3H114.3V390.4H113.3V388.7H112.3V388.5H111.3V388.1H110.3V388.3H109.3V388.2H108.3V388.5H107.3V389.7H106.3V388.9H105.3V388.1H104.3V388.1H103.3V388.5H102.3V390.1H101.3V388.4H100.3V389.3H99.3V388.1H98.3H97.3V388.6H96.3V388.7H95.3V388.1H94.3V389.3H93.3V388.3H92.3V388.6H91.3Z" fill="#008200"/>
<rect x="91.3" y="329" width="89.7" height="2.6" fill="#10e010"/>
<rect x="91.3" y="381" width="89.7" height="3" fill="#0cb40c" opacity="0.9"/>
<path d="M180 382.5 C184 382,187 379.8,192 379.8" fill="none" stroke="#008200" stroke-width="5.6"/><path d="M180 382.5 C184 382,187 379.8,192 379.8" fill="none" stroke="#10e010" stroke-width="3"/>
<path d="M191 320.9H192H193V320.9H194V320.5H195V320.9H196V320.8H197V320.9H198V320.7H199V320.6H200V320.5H201V320.8H202V320.6H203V320.9H204V320.4H205V320.8H206V321H207V320.2H208V320.8H209V321H210V319.6H211V320.7H212V320.9H213V320.4H214V320.2H215V320.5H216V320.6H217V320.7H218V320.6H219V320.7H220H221V320.5H222V320.7H223V320.5H224V320.9H225V320.7H226V320.6H227V319.6H228V320.5H229V320.7H230V320.9H231V320.7H232V320.4H233V320.2H234V320.6H235H236H237V320.4H238V320.6H239V320.8H240V320.9H241H242V320.1H243V320.6H244V320.9H245V320.8H246V320.9H247V320.2H248V320.9H249V320.6H250V320.4H251V320.9H252V319.5H253V320.6H254V320.4H255V320.8H256V320.7H257V320.5H258V320.7H259V320.5H260V320.3H261V320.8H262V320.6H263V320.7H264V321H265V320.6H266V320.3H267V320.9H268V320.9H269V320.4H270V320.5H271V320.7H272V320.6H273V320.7H274V321H275V320.6H276V320.5H277V320.6H278V320.9H279V320.6H280V320.9H281V320.5H282V320.4H283V382.5H282H281V383.5H280V383H279V382.6H278V382.7H277V382.5H276V382.6H275V382.4H274H273H272V382.5H271V382.7H270V382.4H269V382.8H268V382.3H267V382.6H266V383H265V382.5H264V382.5H263H262V382.3H261V382.4H260V382.3H259V382.6H258V382.7H257V383.2H256V382.3H255V382.7H254V382.5H253V382.7H252V383.5H251V382.7H250V382.4H249V382.5H248V382.5H247V382.4H246V383.3H245V382.7H244H243H242V382.4H241V382.6H240V382.7H239V382.6H238V383.4H237V382.5H236H235V382.3H234V382.6H233H232V382.6H231H230V382.5H229V382.8H228V382.4H227V382.6H226V382.3H225V382.8H224V382.5H223V382.3H222V382.4H221V382.7H220V382.4H219V382.6H218V382.4H217H216V382.3H215V382.4H214H213V382.7H212V382.5H211H210V382.4H209H208V382.8H207V382.3H206V382.7H205H204V382.6H203V382.4H202H201V382.7H200V382.6H199V382.4H198V382.4H197V382.3H196V382.4H195V382.3H194V383.1H193V382.7H192H191V382.5Z" fill="#008200"/>
<rect x="191" y="322.6" width="92" height="2" fill="#0c960c" opacity="0.8"/>
<rect x="191" y="378.7" width="92" height="2.6" fill="#10e010"/>
<path d="M284.5 326.8H285.5V326.1H286.5V326.7H287.5H288.5V323.7H289.5V325.5H290.5V326.2H291.5V326.9H292.5V324.4H293.5V326.1H294.5H295V331.5H294.5H293.5H292.5H291.5H290.5H289.5H288.5V332.8H287.5V331.5H286.5H285.5V332.3H284.5V331.5Z" fill="#008200"/>
<path d="M282 325.5 C285 327.5,288 330.3,292 330.3 L296 330.3" fill="none" stroke="#008200" stroke-width="5.6"/><path d="M282 325.5 C285 327.5,288 330.3,292 330.3 L296 330.3" fill="none" stroke="#10e010" stroke-width="2.8"/>
<path d="M295 326.1H296V327.3H297V327H298V324.3H299V326.1H300V327.8H301V327.1H302V327.8H303V327.6H304V327.2H305V325.5H306V327.9H307H308V327.2H309V327H310V327.3H311V328H312V327.3H313V327.6H314V327.7H315H316V324.1H317V327.2H318V327.9H319V325.8H320V327.6H321V327.4H322V327.2H323V327.6H324H325V327.2H326V327.8H327H328V327.7H329V327.4H330V327.3H331H332V327.5H333V327.3H334V327.4H335V327.7H336V327.2H337V327.9H338V327.6H339V327.7H340V326.7H341V327.6H342V328H343V325.6H344V326.5H345V327.8H346V327.3H347H348V326.6H349V327.2H350V327.7H351V327.2H352V324.4H353V327.1H354V327.8H355V327.2H356H357V327.8H358V327.1H359V325.9H360V327H361V327.4H362V327.5H363H364H365V327H366V326.1H367V327.8H368V328H369V327.6H370V327.7H371V327.4H372V327.2H373V327.9H374V328H375H376V327.1H377V327.6H378V327.2H379V327.5H380V324.7H381V327.2H382H383V325.4H384V388.4H383H382V388.7H381V388.3H380V388H379H378V388.5H377H376V388.7H375V388.3H374V388.5H373V389.5H372V388.6H371V388.3H370V389.6H369V388.8H368V388.2H367V388.4H366V388.3H365V389.9H364V388.2H363V388.5H362V388.3H361H360V388.6H359V388.7H358V388.1H357V388.3H356V388.6H355V388.3H354V388.3H353H352V388.2H351V388.3H350V388.7H349V389.5H348V388.4H347V388.2H346V388H345V388.4H344V388.2H343V388.5H342V388.8H341H340H339V388.4H338V388.7H337H336V388.1H335V389.3H334V388.1H333V388.2H332V388.8H331V388.3H330V388.6H329H328V388.3H327H326H325V388.5H324H323V388.7H322V388.5H321V388.7H320V388.2H319V388.5H318V388.2H317H316V388.2H315V388.7H314V388.1H313V388.5H312V388.4H311H310H309V388H308V388.1H307V388.4H306V389.4H305V388.1H304V388.7H303V388.4H302V388.1H301V388.6H300V388.1H299V389.5H298V388.1H297V388.6H296V388.3H295V388.1Z" fill="#008200"/>
<rect x="295" y="329" width="89" height="2.6" fill="#10e010"/>
<rect x="295" y="381" width="89" height="3" fill="#0cb40c" opacity="0.9"/>
<path d="M556 327.5H557V327.4H558V327.9H559V324.5H560V325H561V327.3H562V327.3H563V327H564V325.7H565V327.7H566V327.1H567V327.6H568V327.3H569V327.8H570V327.6H571H572H573V327.3H574V326.8H575V327.3H576V327.6H577V328H578V327.7H579V327.1H580V327.4H581V327.9H582V327.4H583V327.3H584V327.2H585V326.6H586V327.6H587V389.3H586H585V388.4H584V390.2H583V388.4H582V388.6H581V388.4H580V388.7H579V388.1H578V388.4H577V390H576V388.7H575V388.5H574V388.3H573V388.5H572V389.1H571V388.3H570V388.8H569V388.3H568V388.5H567V388.8H566V388.4H565V388.2H564V390H563V388.5H562V388.7H561V389H560V388.6H559V389.6H558V388.6H557V388.3H556V388.4Z" fill="#008200"/>
<rect x="556" y="329" width="31" height="2.6" fill="#10e010"/>
<rect x="556" y="381" width="31" height="3" fill="#0cb40c" opacity="0.9"/>
<path d="M586 382.5 C590 382,591 379.8,596 379.8" fill="none" stroke="#008200" stroke-width="5.6"/><path d="M586 382.5 C590 382,591 379.8,596 379.8" fill="none" stroke="#10e010" stroke-width="3"/>
<path d="M595 320.9H596V320.5H597V321H598V319.6H599V320.9H600V319.3H601V320.8H602V320.5H603V320.6H604V320.9H605V319.9H606V320.9H607V320.6H608V319.7H609V320.5H610V320.7H611V320.8H612V320H613V320.4H614V320.6H615V320.9H616V320.8H617H618V320.7H619V319.6H620V320.2H621V320.4H622H623V320.6H624V319.4H625V319.5H626V320.5H627V320.8H628V320.5H629V320.8H630V319.2H631V320.9H632V320.8H633V320.5H634V320.8H635H636V320.5H637V320.6H638H639H640V320.4H641V320.6H642V320.6H643V319.8H644V320.8H645V320.9H646V320.4H647V320.8H648V320.9H649V320.6H650H651V319.2H652V320.7H653V320.7H654V320.5H655V321H656V320.9H657V320.7H658V320.4H659V320.7H660V320.4H661V320.7H662V320.9H663V320.9H664V320.6H665H666V320.5H667H668V319.2H669V319.4H670V320.6H671V320H672V320.9H673V320.6H674V320.5H675V319.7H676V320.6H677H678V320.7H679V319.9H680V320.9H681V320.5H682V320.6H683V320.7H684V320.7H685V320.8H686V321H687V320.6H688V320.6H689V382.6H688H687V382.8H686V382.4H685V382.7H684V382.5H683V382.3H682V382.7H681V382.5H680V383.5H679V382.5H678V382.7H677V382.5H676V383.3H675V382.5H674V382.3H673V382.7H672V382.5H671V382.6H670V382.7H669V382.4H668V382.7H667V382.6H666V382.7H665V382.5H664V382.4H663V382.4H662V382.7H661V382.5H660V382.6H659V382.5H658V382.9H657V382.4H656V383.6H655V382.8H654V382.6H653V382.4H652V382.7H651V382.4H650H649H648V382.8H647V382.4H646V382.4H645V382.6H644V382.5H643V382.7H642V382.4H641V382.7H640V382.6H639H638V382.4H637V382.7H636H635V382.6H634H633V382.5H632V382.3H631V382.8H630V382.6H629H628V382.5H627V382.6H626V382.7H625V382.6H624V382.8H623H622V382.5H621V382.4H620V382.4H619V382.6H618V382.3H617V382.7H616V382.6H615V382.8H614V382.6H613H612H611V382.5H610H609V382.4H608V382.5H607V382.4H606V382.7H605V382.3H604V382.7H603V383.3H602V382.3H601V382.7H600V382.4H599V382.7H598V382.5H597V382.4H596V383.1H595V382.5Z" fill="#008200"/>
<rect x="595" y="322.6" width="94" height="2" fill="#0c960c" opacity="0.8"/>
<rect x="595" y="378.7" width="94" height="2.6" fill="#10e010"/>
<path d="M690.5 326.1H691.5V326.8H692.5V326H693.5V327H694.5V325.2H695.5V324.4H696.5V326.2H697.5V326.1H698.5V324.6H699.5V326.8H700.5V325.2H701.5V326.1H702.5V326H703.5V326.9H704.5V326.3H705.5V326.4H706V331.5H705.5H704.5H703.5H702.5H701.5H700.5H699.5H698.5H697.5H696.5H695.5H694.5H693.5H692.5H691.5H690.5Z" fill="#008200"/>
<path d="M688 325.5 C691 327.5,694 330.3,698 330.3 L707 330.3" fill="none" stroke="#008200" stroke-width="5.6"/><path d="M688 325.5 C691 327.5,694 330.3,698 330.3 L707 330.3" fill="none" stroke="#10e010" stroke-width="2.8"/>
<path d="M706 325.2H707V327.2H708V324H709V327.3H710V325.3H711V327.1H712V325.7H713V327H714H715V327.8H716V327.3H717H718V327.1H719V327.7H720V327.9H721V327.6H722V325.7H723V327.6H724V327.3H725V327.1H726V327.2H727V327.1H728V327.8H729V327.4H730V327.8H731V326.5H732V327.4H733H734V327H735V327.7H736V327.6H737V327.2H738H739V327.5H740V326.1H741V328H742V325.6H743V327.6H744V327.1H745V327.6H746V327H747V327.7H748V327.8H749V327.5H750V327.1H751V327.7H752V327.6H753V327.1H754H755V327.5H756H757V327.6H758V327.5H759V327.4H760V327.6H761V324.4H762V327H763V327.6H764V326.7H765V327.8H766V327.3H767V327.6H768V324.6H769V325.1H770V327.9H771V327.6H772V327.2H773V327H774V327.8H775V327H776V327.8H777V327.8H778V327.1H779V327H780V325.9H781V327.1H782H783H784V327.3H785H786V327.8H787V327.7H788V327.4H789H790V327.2H791V388.6H790H789V388H788V388.6H787V388.8H786V388.3H785V388.5H784V388.7H783V388.3H782V389.9H781V388.5H780V388.3H779V390.3H778V388.7H777V388H776V388.8H775V388.4H774V388.5H773V388H772V388.6H771V388.5H770V388.2H769V388.6H768V388.7H767V388.5H766V388.4H765V388.7H764H763V388.5H762V388H761H760H759V388.5H758V388.1H757V388.5H756V388.4H755V388.7H754V388.3H753V388.6H752H751V388.7H750V388H749V388.3H748V388.1H747V388.4H746V388.3H745V388.2H744V388.5H743V388.8H742V388.5H741V388.1H740V388.2H739V388.3H738V388.7H737V388.4H736V388.1H735V388.6H734V388.6H733V388.4H732V388.6H731V388.2H730V388.8H729H728V388.6H727H726V388.4H725V389.6H724V388.7H723V388.1H722V388.7H721V388.4H720V388.1H719V388.3H718V388.5H717V388.7H716H715V388.1H714V388.4H713V388.1H712V388.3H711V388.7H710V388.4H709V388.1H708H707V388.4H706Z" fill="#008200"/>
<rect x="706" y="329" width="85" height="2.6" fill="#10e010"/>
<rect x="706" y="381" width="85" height="3" fill="#0cb40c" opacity="0.9"/>
<path d="M790 382.5 C794 382,796 379.8,801 379.8" fill="none" stroke="#008200" stroke-width="5.6"/><path d="M790 382.5 C794 382,796 379.8,801 379.8" fill="none" stroke="#10e010" stroke-width="3"/>
<path d="M800 320.4H801V320.5H802V320.9H803V320.5H804V320.8H805V320.9H806V320.5H807V320.9H808V320.6H809V320.4H810V320.6H811V320.8H812V320.4H813V320.6H814V320.7H815V320.9H816V321H817V320.7H818V320.5H819V320.9H820H821V321H822V320.8H823V320.6H824V321H825V320.8H826V320.7H827V320.8H828V320.4H829V320.8H830V321H831V320.5H832H833H834V320.8H835V320.6H836V320.9H837V320.7H838V320.7H839V320.8H840V320.6H841V320.7H842V320.8H843V320.4H844V320.1H845V320.8H846V320.6H847H848V320.7H849V320.4H850V320.6H851V320.4H852H853V320.6H854V320.9H855V320.8H856V320.6H857V320.7H858V320.8H859V320.6H860H861V320.8H862V320.5H863V320.7H864V320.6H865H866V320.5H867V320.7H868H869H870V320.5H871V319.3H872V321H873V320.8H874H875V320.5H876V320.8H877H878V320.6H879H880V320H881V321H882V320.6H883V320.8H884V320.5H885V320.8H886V320.7H887V320.8H888V320.7H889V320.9H890V320.9H891V320.7H892V320.8H892.5V382.7H892H891V382.3H890V382.7H889V382.5H888V382.6H887V382.3H886V382.4H885V382.5H884H883V382.6H882V382.5H881V382.3H880H879V382.8H878V382.6H877H876V382.3H875H874H873H872V383H871V382.6H870V382.4H869V382.5H868V382.4H867V382.9H866V382.5H865V382.6H864H863V382.7H862V382.5H861H860V382.6H859V382.4H858V382.7H857V382.5H856V382.8H855V382.4H854V382.5H853V382.4H852V382.7H851V382.4H850V382.5H849V382.6H848V382.5H847H846V382.6H845H844H843V382.7H842V382.8H841V382.5H840V382.4H839H838V382.5H837V383.6H836V382.4H835V382.7H834V382.6H833V382.4H832H831H830V382.6H829V382.5H828V382.4H827V382.7H826V383.1H825V382.3H824V382.6H823H822V382.8H821V382.4H820V382.4H819V382.7H818H817V382.4H816V383.3H815V382.5H814V382.6H813V382.5H812H811H810V382.6H809H808V382.7H807V382.4H806V382.7H805V382.6H804H803V382.5H802H801V382.3H800V382.4Z" fill="#008200"/>
<rect x="800" y="322.6" width="92.5" height="2" fill="#0c960c" opacity="0.8"/>
<rect x="800" y="378.7" width="92.5" height="2.6" fill="#10e010"/>
<path d="M894 326H895V326.9H896V326.6H897V326.1H898V326.7H899V326.3H900V326.5H901V326.8H902V326.6H903V325.7H904V326H905V326.5H906V327H907V326.5H908V326.7H909V331.9H908H907V331.5H906V332.5H905V331.5H904H903H902V332.6H901V331.5H900H899H898H897H896V331.9H895V331.5H894V331.9Z" fill="#008200"/>
<path d="M891.5 325.5 C894.5 327.5,897.5 330.3,901.5 330.3 L910 330.3" fill="none" stroke="#008200" stroke-width="5.6"/><path d="M891.5 325.5 C894.5 327.5,897.5 330.3,901.5 330.3 L910 330.3" fill="none" stroke="#10e010" stroke-width="2.8"/>
<path d="M909 327.6H910V327H911V327.2H912V327.2H913V327.7H914V327.2H915V327.3H916H917V327.9H918V327.5H919V327.8H920V327.9H921V327.3H922V327.4H923V327.2H924V327.9H925V327.8H926V327.7H927V324.8H928V327.1H929V327.8H930V324.3H931V327.6H932V325.6H933V327.2H934V327.4H935V327.8H936V327.6H937V327.9H938V327.5H939V327.2H940V326.9H941V327.2H942V327.7H943V327.5H944V327.3H945V326.7H946V327.6H947V327H948V327.8H949H950V328H951V324.1H952V327.6H953V324.1H954V326.4H955V327.1H956V327.2H957V326.9H958V327H959V324.8H960V327.4H961V327.2H962V327.6H963V327.7H964V327.1H965V327.3H966V327.8H967V327.6H968V327.8H969V327.9H970V327.5H971V327.9H972V327.3H973H974V327.4H975V327.2H976V326.8H977V327.8H978V327.9H979H980V327.4H981V326H982V327.4H983V327.3H984V327.5H985V327.6H986V327.9H987V327.8H988V327.1H989H990V327.3H991H992V328H993V327.1H994V388.7H993H992V388.2H991V388.3H990V388.2H989V388.6H988V390.4H987V389.3H986V388.4H985V388.2H984V390H983V388.1H982V388.2H981V390.4H980V388.6H979V388.1H978V388.7H977V388.7H976V388.3H975V388H974H973V389.1H972V388.1H971V388.4H970V388H969V388.5H968V388.4H967V388.2H966V388.8H965V388H964V388.7H963V388.1H962V388.3H961H960V388.2H959V388.7H958V388.1H957V388.7H956V388.3H955V388.1H954V388.7H953V388.3H952H951V388.4H950V388.8H949V388.5H948V388.5H947V388.2H946V388.4H945V388.1H944V388.5H943V390.1H942V388.1H941V388.8H940V388.4H939V388.2H938V388.3H937V388.1H936V388.3H935V388.2H934V388.7H933V388.1H932H931H930H929V388.6H928V388.5H927H926V388.4H925V388.3H924V390.6H923V388.6H922V388.5H921V388.7H920V388.3H919V389.8H918V388.6H917V388.9H916V389.2H915V388.8H914V388.5H913V388.2H912V388.5H911V388.6H910V388.3H909V388.1Z" fill="#008200"/>
<rect x="909" y="329" width="85" height="2.6" fill="#10e010"/>
<rect x="909" y="381" width="85" height="3" fill="#0cb40c" opacity="0.9"/>
<path d="M993 382.5 C997 382,999 379.8,1004 379.8" fill="none" stroke="#008200" stroke-width="5.6"/><path d="M993 382.5 C997 382,999 379.8,1004 379.8" fill="none" stroke="#10e010" stroke-width="3"/>
<path d="M1003 320.4H1004V320.6H1005V320.7H1006V320.8H1007V320.4H1008V320.6H1009V320.8H1010V320.4H1011V320.8H1012V320.4H1013V320.6H1014V320.7H1015V320.5H1016V320.3H1017V320.7H1018V320H1019V321H1020V320.8H1021V320.8H1022V320.6H1023V320.8H1024V320.9H1025V320.7H1026V320.9H1027H1028H1029V320.5H1030V320.7H1031H1032V320.1H1033V320.5H1034H1035V321H1036V320.9H1037V320.5H1038V321H1039H1040V320.6H1041V320.8H1042H1043V320.4H1044V320.5H1045V320.6H1046H1047V320.9H1048V320.6H1049V320.9H1050V320.7H1051H1052V320.9H1053V320.7H1054V320H1055V320.4H1056V320.9H1057V321H1058H1059V320.4H1060V320.6H1061V321H1062V320.8H1063V321H1064V320.6H1065V320.9H1066V320.4H1067V320.8H1068V320.7H1069V320.4H1070V320.8H1071V320.5H1072V320.4H1073V320.5H1074V320.9H1075V320.8H1076V320.5H1077V321H1078V320.9H1079V320.9H1080V320.6H1081V320.8H1082V321H1083V320.7H1084V320H1085V320.7H1086V320.9H1087V320.7H1088V320.9H1089V321H1090V320.9H1091V320.8H1092V320.9H1093V320.8H1094V320.9H1095V320.7H1096V320.9H1097V382.6H1096H1095V382.7H1094V382.7H1093V382.8H1092V382.6H1091H1090V382.4H1089V382.6H1088H1087V382.7H1086V382.6H1085V382.7H1084V382.5H1083V382.5H1082H1081V382.8H1080V382.7H1079V382.6H1078H1077V382.5H1076V383H1075V382.4H1074V382.6H1073H1072V382.8H1071V382.4H1070H1069V382.5H1068V382.6H1067H1066V382.5H1065H1064H1063V382.6H1062V382.5H1061V382.4H1060V382.5H1059V382.3H1058V382.7H1057V382.4H1056V382.7H1055V382.7H1054V382.5H1053V382.4H1052H1051V382.5H1050V382.8H1049H1048V382.3H1047V382.6H1046V382.6H1045H1044H1043H1042V382.4H1041H1040H1039V382.7H1038H1037V382.6H1036V382.4H1035H1034V382.6H1033H1032V383H1031V382.4H1030V382.5H1029V382.7H1028V382.4H1027V382.8H1026V383.1H1025V382.7H1024V382.5H1023H1022V382.7H1021H1020V382.7H1019V383.2H1018V382.3H1017V383.1H1016V383H1015V382.4H1014H1013V382.4H1012V383H1011V382.4H1010H1009V382.7H1008V382.5H1007V382.9H1006V382.7H1005V382.4H1004V382.7H1003V382.4Z" fill="#008200"/>
<rect x="1003" y="322.6" width="94" height="2" fill="#0c960c" opacity="0.8"/>
<rect x="1003" y="378.7" width="94" height="2.6" fill="#10e010"/>
<path d="M1098.5 326.6H1099.5V324H1100.5V326.4H1101.5V326.5H1102.5V324.3H1103.5V326.4H1104.5V326.6H1105.5V326.7H1106.5V326.6H1107.5V326.7H1108.5V326.8H1109.5V326.1H1110.5V326.5H1111.5V326.3H1112V331.5H1111.5H1110.5H1109.5H1108.5H1107.5H1106.5H1105.5H1104.5H1103.5H1102.5H1101.5H1100.5H1099.5H1098.5Z" fill="#008200"/>
<path d="M1096 325.5 C1099 327.5,1102 330.3,1106 330.3 L1113 330.3" fill="none" stroke="#008200" stroke-width="5.6"/><path d="M1096 325.5 C1099 327.5,1102 330.3,1106 330.3 L1113 330.3" fill="none" stroke="#10e010" stroke-width="2.8"/>
<path d="M1112 327.1H1113V327.8H1114V327.6H1115V328H1116V326.5H1117V327.6H1118V327.7H1119V328H1120V325.8H1121V327.7H1122V327.7H1123V327.6H1124V327.3H1125V327.2H1126V327.5H1127V326.7H1128V327.9H1129V327.1H1130V327.3H1131V327.8H1132V327.7H1133V325.3H1134V326.7H1135V324.6H1136V328H1137V327.7H1138V325.6H1139V327.8H1140V327.3H1141V326.7H1142V327.8H1143V327.1H1144V327.6H1145V327.1H1146V324.4H1147V327.3H1148V327.6H1149H1150V327H1151V327.8H1152H1153V327.6H1154V327.3H1155V327.2H1156V327H1157V327.3H1158V324.4H1159V327.6H1160V327.4H1161V327.7H1162V327.8H1163V327.5H1164V327.7H1165V325.6H1166V325.7H1167V327.1H1168V327.9H1169V327.1H1170H1171V327.2H1172V327.1H1173V327.9H1174V327.3H1175V327.1H1176V324H1177V327.7H1178V327.6H1179V327.3H1180V327.4H1181V327.8H1182V327.9H1183V327.7H1184H1185V327.6H1186V327.5H1187V327.3H1188V326.2H1189V327.2H1190V327.3H1191V327.5H1192V327.9H1193V328H1194V327.6H1195V327.2H1196V327.4H1197V327.3H1197.5V388.7H1197H1196V388.4H1195V388.5H1194V388.8H1193V388.2H1192V388.5H1191H1190V388.2H1189V388.7H1188V388.6H1187V388.2H1186V388.8H1185V388.5H1184V388.4H1183H1182V388H1181V388.7H1180V388H1179V388.4H1178V388H1177V388.4H1176V388.1H1175V388.3H1174V388.4H1173H1172V388.1H1171V388.3H1170H1169V388.7H1168V388.5H1167V388.6H1166V390.2H1165V388.8H1164V388.1H1163V389.6H1162V388.5H1161V388.4H1160V389.8H1159V388.6H1158V388.8H1157H1156H1155V388.7H1154V388.5H1153V388.6H1152V388.8H1151V390.6H1150V388.5H1149V388.4H1148V388.5H1147V388.7H1146V388.6H1145H1144H1143V388.8H1142V388.5H1141V388.3H1140V388.1H1139V388.6H1138V388.3H1137V388.4H1136V388.7H1135V388.6H1134H1133V388.3H1132V390.4H1131V388.2H1130V388.5H1129V388.4H1128V388.3H1127V388.5H1126V388.6H1125V388.8H1124V388.5H1123V388.4H1122V388.1H1121V388.7H1120V388.6H1119V388.2H1118V388.6H1117V388.3H1116V389.3H1115V388.7H1114V388.4H1113V388.1H1112V388.2Z" fill="#008200"/>
<rect x="1112" y="329" width="85.5" height="2.6" fill="#10e010"/>
<rect x="1112" y="381" width="85.5" height="3" fill="#0cb40c" opacity="0.9"/>
<path d="M1196.5 382.5 C1200.5 382,1203 379.8,1208 379.8" fill="none" stroke="#008200" stroke-width="5.6"/><path d="M1196.5 382.5 C1200.5 382,1203 379.8,1208 379.8" fill="none" stroke="#10e010" stroke-width="3"/>
<path d="M1207 320.6H1208V320.4H1209V319.6H1210V321H1211V320.9H1212V320.6H1213V321H1214V320.4H1215V320.8H1216V320.9H1217V320.5H1218V320.8H1219V320.7H1220V320.4H1221V321H1222V320.8H1223V320.5H1224H1225H1226H1227V320.4H1228V321H1229V320.5H1230V320.7H1231V320.9H1232V320.7H1233V321H1234V320.8H1235V320.7H1236V320.9H1237V319.9H1238V320.6H1239V320.9H1240V320.8H1241V320.9H1242H1243V320.4H1244V320.8H1245V320.6H1246V320.7H1247H1248V320.5H1249H1250V319.3H1251V320.4H1252V320.5H1253V320.9H1254V320.8H1255V319.8H1256V320.7H1257V320.6H1258V320.6H1259V320.4H1260V319.4H1261V320.8H1262V320.9H1263V319.7H1264V320.5H1265V320.9H1266H1267V321H1268V320.5H1269V320.6H1270V382.6H1269H1268V382.7H1267V382.5H1266V382.6H1265V382.4H1264V382.5H1263V382.6H1262V383.4H1261V382.3H1260V382.6H1259V382.7H1258V382.6H1257V382.3H1256V382.5H1255V382.4H1254V382.7H1253V382.5H1252H1251V382.5H1250H1249V382.9H1248V382.3H1247V382.8H1246H1245V382.3H1244V382.6H1243V382.4H1242V382.7H1241V382.6H1240V382.5H1239V382.7H1238V382.5H1237V382.5H1236V382.3H1235H1234V382.7H1233V382.3H1232V382.7H1231V382.4H1230V382.5H1229H1228V382.7H1227V382.5H1226V382.4H1225V382.5H1224V382.6H1223V382.3H1222H1221V382.4H1220V382.5H1219H1218V382.4H1217V382.6H1216V382.8H1215V382.6H1214V382.5H1213V382.7H1212V382.5H1211V382.4H1210V383.5H1209V382.4H1208V382.4H1207V382.6Z" fill="#008200"/>
<rect x="1207" y="322.6" width="63" height="2" fill="#0c960c" opacity="0.8"/>
<rect x="1207" y="378.7" width="63" height="2.6" fill="#10e010"/>
<rect x="640" y="320" width="1" height="58.4" fill="#fff"/>
<rect x="645" y="320" width="1" height="58.4" fill="#fff"/>
<polyline points="384,382 388,380 391.5,378.5" fill="none" stroke="#10e010" stroke-width="3" stroke-linejoin="round"/>
<path d="M391.5 375.1H392.5V375.2H393.5V374.9H394.5V374.6H395.5V375.2H396.5V374.8H397.5V375.4H398.5H399.5V374.2H400.5V375.1H401.5V374H402.5V374.7H403.5V374.1H404.5V373.9H405.5V373.5H406.5V373.7H407.5V373.2H408.5V374H409.5V374.1H410.5V373.6H411.5V372.7H412.5V373.6H413.5H414.5V373.9H415.5H416.5V374.3H417.5V374.2H418.5V374.2H419.5V374.4H420.5V373.9H421.5V374.2H422.5V373.1H423.5V374.2H424.5V374H425.5V374.6H426.5V374.5H427.5V373.1H428.5V374.4H429.5V374.9H430.5V374.4H431.5V374.4H432.5V374.3H433.5V374.7H434.5V374.9H435.5V374.8H436.5V374.7H437.5V374.6H438.5V374.4H439.5V374.4H440.5V374.6H441.5V375H442.5V374.8H443.5V374.9H444.5V374.8H445.5V375H446.5V374.7H447.5V374.5H448.5V374.7H449.5V374.8H450.5H451.5V374.4H452.5V374.2H453.5V374.8H454.5V374.9H455.5V375.1H456.5V374.8H457.5H458.5V375.1H459.5V374.7H460.5V375.3H461.5H462.5V374.8H463.5V375.1H464.5V373.9H465.5V374.9H466.5V373.2H467.5V375.2H468.5V374.2H469.5V375.1H470.5V374.7H471.5V375H472.5V375.2H473.5V374.8H474.5V373.5H475.5V374.8H476.5V374H477.5V374.9H478.5V374H479.5V374.8H480.5H481.5V373.6H482.5V375.4H483.5V375.2H484.5V375.2H485.5V375.4H486.5V374.8H487.5V375.2H488.5V374.3H489.5V375.5H490.5H491.5V375.4H492.5V374.9H493.5V375.4H494.5V375.1H495.5V375.3H496.5V375.6H497.5H498.5V375H499.5H500.5V375.4H501.5V375H502.5V375.3H503.5V375.4H504.5V374.8H505.5V375.6H506.5V375.4H507.5V375.3H508.5V375.3H509.5H510.5V374.9H511.5V375.3H512.5V374.9H513.5V375.4H514.5V375.3H515.5V375.1H516.5H517.5V374.9H518.5V375H519.5V374.9H520.5V375.2H521.5V375.3H522.5V374.8H523.5V375.1H524.5V374.8H525.5V375.3H526.5V374.8H527.5V374H528.5V374.7H529.5V374.8H530.5H531.5V375.3H532.5V375H533.5H534.5V374.7H535.5V375.1H536.5V374.9H537.5V375.1H538.5V374.6H539.5V375.2H540.5V374.8H541.5V373.7H542.5V373.8H543.5V374.2H544.5V374.8H545.5V374.9H546.5V373.7H547.5V374.9H548.5V373.6H549.5V375H550.5V374.7H551V375.2V382.8H550.5V383H549.5V383.1H548.5V382.9H547.5V383.4H546.5V383.3H545.5V384.7H544.5V383.1H543.5V382.9H542.5V383.2H541.5V383.6H540.5V383.1H539.5V383.4H538.5V383.5H537.5V383H536.5V383.7H535.5V383H534.5V383.1H533.5V384.5H532.5V383.2H531.5V383.6H530.5V383.3H529.5V383.4H528.5H527.5V385.1H526.5V383.3H525.5V383.9H524.5V383.2H523.5V383.2H522.5V383.8H521.5V383.6H520.5V383.7H519.5H518.5V383.2H517.5V383.4H516.5V383.8H515.5V383.9H514.5V383.9H513.5V383.4H512.5V383.9H511.5V383.3H510.5V383.7H509.5V383.9H508.5V383.8H507.5V383.5H506.5V383.6H505.5V383.8H504.5H503.5V383.6H502.5V383.3H501.5V384.4H500.5V383.7H499.5V383.6H498.5V383.5H497.5V383.3H496.5V383.7H495.5V384H494.5V383.3H493.5V384H492.5V384H491.5V383.8H490.5H489.5V383.6H488.5V383.4H487.5V384.8H486.5V383.6H485.5V383.8H484.5V383.9H483.5V384.9H482.5V383.6H481.5V384.1H480.5V383.3H479.5V383.3H478.5V383.7H477.5V383.3H476.5V383.6H475.5H474.5V384.7H473.5V383.3H472.5V383.2H471.5V383.3H470.5V383.2H469.5H468.5V383.6H467.5V383.1H466.5V383.8H465.5H464.5V383.3H463.5V383.1H462.5V383H461.5V383.8H460.5H459.5V383.6H458.5V383.4H457.5V383.5H456.5H455.5H454.5V383.3H453.5V383H452.5V384.8H451.5V383.1H450.5V383.7H449.5V383.3H448.5V383.2H447.5V382.9H446.5V383.6H445.5V383.3H444.5V383.2H443.5V384.5H442.5V383.3H441.5V383.5H440.5V383.7H439.5V384.4H438.5V382.9H437.5V383.4H436.5V382.9H435.5V383H434.5V383.4H433.5V383.8H432.5V384H431.5V382.9H430.5H429.5V383.1H428.5H427.5V382.6H426.5V382.7H425.5V383H424.5V382.6H423.5V382.7H422.5V383H421.5V383.1H420.5V384.1H419.5V383H418.5V383.6H417.5V382.8H416.5V382.2H415.5V382.6H414.5V382.5H413.5V382.2H412.5V382.3H411.5H410.5V382.6H409.5V382.7H408.5V382H407.5V382.5H406.5V381.9H405.5V383.2H404.5V382.7H403.5H402.5V383.3H401.5V383.5H400.5V383.9H399.5V383.4H398.5V384.2H397.5V384.9H396.5V383.5H395.5V383.7H394.5V383.6H393.5V383.5H392.5V383.2H391.5V383Z" fill="#0a960a"/>
<polyline points="391.5,379 400,379.5 405,378 440,379 500,379.5 551,379" fill="none" stroke="#10e010" stroke-width="4"/>
<rect x="390.9" y="321" width="1.1" height="56" fill="#079007"/>
<rect x="398.9" y="322" width="1.1" height="55" fill="#079007"/>
<rect x="413.9" y="321.5" width="1.1" height="55.5" fill="#079007"/>
<rect x="436.9" y="321.5" width="1.1" height="55.5" fill="#079007"/>
<rect x="459.6" y="322.5" width="1.1" height="54.5" fill="#079007"/>
<rect x="481.9" y="321.5" width="1.1" height="55.5" fill="#079007"/>
<rect x="504.9" y="330" width="1.1" height="47" fill="#079007"/>
<rect x="528" y="330" width="1.1" height="47" fill="#079007"/>
<rect x="550.5" y="321" width="1.1" height="56" fill="#079007"/>
<polyline points="551,327.5 553,329.5 556.5,330.3" fill="none" stroke="#10e010" stroke-width="3" stroke-linejoin="round"/>
</g>
<g id="c3">
<path d="M17 235.2H18V235.5H19V235.5H20H21V233.3H22V234.9H23H24V235.2H25V235.5H26V233.6H27V235H28H29V235.1H30V235.4H31V235.6H32H33V235.5H34V235.1H35V235.3H36V233.2H37V235.6H38V235.1H39V235.5H40V235H41H42H43V235.1H44V235.2H45V234.9H46V233.3H47V235.6H48V235.2H49V235H50V234.9H51V235.4H52V235.1H53V233.2H54V234H55V235H56V234.5H57V235.6H58V233.9H59V235.3H60V234.5H61V234.9H62H63V235.3H64V235.5H65V234.8H66V235.1H67V235H68V235.7H69V235.1H70V235.6H71H72V234.9H73V234.5H74V235.6H75V234.8H76V234.9H77V233.4H78V234.8H79V235.2H80V235.4H81V235.2H82V235.6H83V235.2H84V235.5H85V233.6H86V235.3H87V235.4H88V235.5H89V234.7H90V235.1H91V235.5H92V235.5H93V234.5H94V235.6H95H96V234.8H97V234.2H98V234.4H99V234.6H100V234.2H101H102V235.2H103V233.8H104V235.3H105V234.7H106V235.6H107V235.3H108V235.4H109V234.8H110V235H111V235.3H112V234.2H113V235.4H114V235.2H115V235.1H116V234.1H117V235.3H118V235H119V235.7H120V235H121V235.4H122H123V233.5H124V235.2H125V232.7H126V234.5H127V235.5H128V235.2H129V233.6H130V235.1H131V234.9H132V233.3H133V235.4H134V235.6H135V235.1H136V235.6H137V235.3H138V234.9H139V235.7H140V234H141V234.9H142V235.2H143V234.8H144V235.5H145V235.2H146H147V235H148V235.2H149V233.7H150V235.1H151V235.3H152V235.2H153V235.2H154V235.3H155V235.4H156V235.7H157V235H158V235.1H159V235.4H160V235.5H161V233.4H162V235H163V235.1H164V234.2H165V233.7H166V235.3H167V235.4H168H169H170V234.2H171V235H172V234.9H173V235.4H174V235.2H175V234.5H176V234.8H177V235.4H178V234H179V234.7H180V234.9H181V235.3H182V235.7H183V235.6H184V235.6H185V235.1H186V235.2H187H188V235H189V235.6H190V235.1H191V235.7H192V235.1H193V235.4H194V234H195V235.6H196V234.5H197V235.2H198V234.8H199V235.1H200V235.3H201V235.1H202V235.6H203V235.5H204V233.8H205V234.9H206V234.8H207V235H208V235.2H209H210H211V235.1H212V233.7H213V235.1H214H215V235.5H216V235H217V235.1H218H219V235.1H220V235.3H221V235.3H222V235H223V235.3H224V235.4H225V235.6H226V234.2H227V234.9H228V235H229V235.1H230V235.2H231V235.3H232V235.6H233V235.6H234V235.5H235V234.8H236V235.5H237V235.1H238V235.1H239V235.2H240V235H241V234.1H242V235H243V235.3H244V235.6H245V234H246V235.3H247V233H248V235.2H249V235.7H250V234.9H251V235.3H252V234.8H253V235H254V235.6H255V234.9H256V233.7H257V235.3H258V235.1H259V235.7H260V235.5H261V235.4H262V234.9H263V234H264V234.9H265V235.1H266V235.1H267V233.9H268V235.6H269V235.5H270V235H271V234.9H272V233.3H273V235H274V235.1H275V234.1H276V235.2H277V235.5H278V234.9H279V235.6H280V235.3H281V235.7H282V235.1H283V235.2H284V233.5H285V235.1H286V235H287V235.5H288V233.7H289V233.2H290V235.5H291V235H292V233.6H293H294V234.7H295V235.3H296V235.4H297H298V235.7H299V235.2H300V235H301V235.2H302V235.1H303V234.9H304V235.6H305V235.3H306V235.6H307V235.2H308V233.6H309V235.3H310V234.7H311V234.9H312V234.3H313V235.2H314H315V235H316V235.2H317H318V235.1H319V234.8H320V235H321V235.5H322V235.4H323V235.3H324V233.8H325V235.3H326V235.6H327V233.9H328V235.2H329V235.5H330V232.9H331V235.2H332V235.1H333V233.5H334V233.7H335V233.2H336V235.1H337V235.2H338V234.9H339V235.4H340V234.9H341V233.5H342V235.6H343V234.5H344V234.9H345V235.3H346V234.1H347V235.7H348V234.9H349V235.3H350V234.1H351V233.9H352V233.7H353V235H354V235H355V235.6H356V235.1H357V235.5H358V235.6H359V235.2H360V235.5H361V235.6H362V235.3H363V235.7H364V235H365V235.5H366V233.7H367V234.8H368V234.7H369V235.4H370V235.2H371V235.1H372V235.4H373V235.1H374V235.5H375V233.4H376V235.5H377V235.6H378V235.3H379H380V235.4H381V234.3H382V234.9H383V233.8H384V235.6H385V234.9H386V235.5H387V235.3H388V235.5H389V235.6H390V235.3H391H391.5V235.7V242.7H391V245.1H390V243H389H388V244.1H387V243.4H386V243.2H385V243.5H384H383V243.6H382V243.3H381V243.5H380V243.1H379V242.8H378H377V243.6H376V243.5H375V245.3H374V243.1H373V242.8H372H371V243.4H370V244.3H369V243.2H368V243.1H367V243.1H366V243.2H365V243.3H364V242.8H363V243.3H362V243.6H361V245.3H360V243.2H359H358V243H357V243.2H356V242.7H355V244.9H354V243.3H353V243H352V242.9H351V243.2H350V243.5H349V244.7H348V243.2H347V243.1H346V243.1H345V243.3H344V243.2H343V243.3H342V243.7H341V243.4H340V243.4H339V245.3H338H337V243.3H336V245.5H335V243.5H334V243.3H333V244.4H332V245H331V242.9H330V244.9H329V244.3H328V244.4H327V243.1H326V245.2H325V243.4H324V243.6H323V245.4H322V243.4H321V243.1H320V243.2H319V243.6H318V245.3H317V243.5H316V244.4H315V245.4H314V243.4H313V243.2H312V244.5H311V242.9H310V243.4H309H308V243.2H307H306V243H305V243.6H304V242.9H303H302V243.4H301V244.6H300V245.2H299V242.9H298V243.6H297V243.3H296V242.8H295V243H294V243.9H293V245H292V243.2H291V244.9H290V242.8H289H288V243.2H287V244.5H286V244.1H285V243.3H284V242.8H283V243.1H282V243.6H281V243H280V243.5H279V242.8H278V244.9H277V243.2H276V243.3H275V243.5H274H273V243.2H272V242.8H271V244.4H270H269V243.5H268V244.5H267V242.8H266V243.2H265H264V243H263V243.3H262V243.5H261V243.1H260V243.5H259H258V243.3H257H256V243.2H255V243.4H254H253V243.2H252V243.7H251V243.4H250V243.4H249V242.7H248V243.1H247V242.9H246V244.1H245V243H244V243.6H243V242.8H242V243.2H241V244.3H240V244.6H239V243.5H238V243.8H237V242.7H236V244.8H235V243.1H234V243.8H233V243.3H232V244.1H231V243.2H230V244.6H229V245.4H228V242.9H227V243.6H226V244H225V245.6H224V245.4H223V242.9H222V243.1H221V244.6H220V243H219V243.5H218V242.8H217V243.4H216H215V243.3H214V242.9H213V242.7H212V244H211V243H210V242.9H209V243.1H208V243.3H207V244.2H206V243.1H205V243.3H204V245H203V243.2H202V242.8H201H200V244.9H199H198V243.1H197V242.9H196V243.5H195V244.8H194V243.5H193V242.8H192V243.3H191V243.5H190H189V243.2H188V243.9H187V243.4H186V242.9H185V243.6H184V243H183V245.4H182V243.3H181V244.5H180V243.2H179V243.2H178V243H177V243.3H176V242.9H175V242.9H174V243.5H173V243H172V242.8H171V243.3H170H169V243.4H168V245.1H167V244.4H166H165V243.2H164V243.6H163V243.1H162V244.3H161V242.9H160V243.2H159V242.8H158V243.5H157V243.2H156V242.9H155V243.2H154V245.1H153V243.5H152V243H151V242.9H150V245.5H149V244.7H148V243.3H147V243.6H146V243.2H145V242.9H144H143V243.2H142V243H141V244.4H140V243.5H139V243.4H138V242.7H137V244.1H136V243.2H135V243.3H134V243H133V243.6H132V243.2H131V243.4H130V243H129V244.9H128V243.3H127V243.5H126V243.6H125V242.8H124V245.4H123V242.9H122V244.8H121V243.8H120V242.8H119V243.3H118V243H117V243.4H116V243.2H115V242.7H114V243.5H113V243.4H112V242.9H111V243.1H110V243.2H109V243.3H108V244.7H107V243.3H106V242.9H105V243.2H104V243.2H103V243.6H102H101V244.9H100V243.2H99H98V243.5H97V243.4H96V243.9H95V243.4H94V242.9H93V243.4H92H91V242.9H90V243.3H89V243.5H88H87V243.3H86V243.2H85V243.5H84V243.4H83V243.6H82V243.3H81V242.9H80V243.1H79V244.6H78V244.2H77V243.1H76V242.8H75V243H74V245.1H73V244.9H72V242.9H71V243.3H70V243.6H69V245.4H68V243.1H67V244.5H66V244.5H65V243.2H64V242.9H63V243.3H62V242.9H61V243H60V243.6H59V243.3H58V242.8H57V242.8H56V245.1H55V243.1H54V244H53V244.7H52V242.8H51V243.3H50V245.3H49V243.4H48V244.8H47V243.3H46V244.9H45V242.8H44V243H43V243.5H42V243H41V243.2H40V243.4H39V244.1H38V245H37V242.8H36V243.2H35V243H34V243.2H33V244.2H32V243.3H31V243.9H30V243.3H29V242.7H28V243.5H27V242.8H26V243.5H25V243H24V243.3H23V243.3H22V245.3H21H20V242.9H19V243.1H18V244.2H17V244.1Z" fill="#00008e"/>
<rect x="17" y="237.3" width="374.5" height="2.6" fill="#0808ff"/>
<path d="M391.5 288.8H392.5V289H393.5V288.9H394.5V289.3H395.5V288.8H396.5V289.2H397.5V288.9H398.5V287.5H399.5V289.1H400.5V289H401.5H402.5V288.8H403.5V289H404.5V289.1H405.5V288.6H406.5V288.5H407.5V288.9H408.5V289.1H409.5V287H410.5V288.8H411.5V289.3H412.5H413.5V289.1H414.5V287.1H415.5V288.5H416.5V287.4H417.5V289.2H418.5V288.8H419.5H420.5V289H421.5V288.7H422.5V288.9H423.5V287.8H424.5V287.3H425.5V289H426.5V288.5H427.5V288.6H428.5V288.7H429.5V288.9H430.5V288.7H431.5V288.9H432.5V289.3H433.5V289.1H434.5V289.3H435V297.5H434.5V297.7H433.5V298.1H432.5V298.7H431.5V298.1H430.5H429.5V298.2H428.5V298.2H427.5H426.5H425.5V297.9H424.5V298.1H423.5V297.7H422.5V298.6H421.5V297.8H420.5V297.7H419.5V298H418.5V297.6H417.5H416.5V297.8H415.5V297.8H414.5V297.7H413.5V298.1H412.5H411.5V297.6H410.5V298H409.5V297.7H408.5V298.1H407.5V297.8H406.5V297.9H405.5V298.3H404.5V299.1H403.5V298.5H402.5V297.8H401.5V298H400.5V298.1H399.5V298H398.5V299H397.5V297.9H396.5V299H395.5V298.1H394.5V299.2H393.5V298.2H392.5V297.9H391.5Z" fill="#00008e"/>
<path d="M444 289.3H445V289H446V287.4H447V288.9H448V289.3H449V289H450V289.2H451V288.6H452V287H453V288.6H454V287.7H455V288H456V288.8H457V289.2H458V288.9H459V289.1H460V288.7H461V289.3H462V286.8H463V288.9H464V289.2H465V288.8H466V288.2H467V286.7H468V288.6H469H470V289.1H471V288.7H472V287H473V288.7H474V289.1H475V289.3H476H477H478V288.7H479V286.9H480V288.8H481V289.2H482V289.1H483V289H484H485V288.6H486V289.2H487V287.8H488V287H489V287.2H490V289.2H491V288.9H492V289.2H493V289H494V289.3H495V288.6H496V289.2H497H498V288.9H499V288.1H500V288.9H501V287.2H502V288.8H503V288.5H504V288.6H505V288.7H506V287.3H507V288.2H508V286.8H509V288.8H510V289H511V287.6H512V288.8H513V289.1H514H515H516V288.9H517V288.6H518V288.8H519V288.6H520V288.5H521V288.8H522V289.2H523V288.2H524V288.3H525V288.8H526V288.6H527V289H528V288.5H529V289H530V288.7H531V287.6H532V288.6H533V288.7H534V289.1H535H536V288.4H537V289.3V297.5H536V297.6H535V298.6H534V298.2H533V298.7H532V299.5H531V298.1H530V297.9H529V299H528H527V297.8H526V297.5H525V298.2H524H523V297.6H522V298.4H521V297.9H520V298H519V298.1H518V298H517V298.8H516V298.3H515V297.6H514V297.9H513V297.7H512V298.1H511V297.9H510V298H509V298.2H508V298.3H507V297.9H506V298.2H505V297.7H504V297.5H503V298.1H502V298H501V298.2H500V298H499V297.6H498V298.3H497V298.2H496V298.3H495V299.8H494V298H493V299H492V297.7H491V297.8H490V299.6H489V298.1H488V298.2H487V298.4H486V299.8H485V299.5H484V298H483V297.6H482V297.8H481V299.1H480V297.9H479V299.6H478V297.8H477V297.9H476V297.8H475V298.3H474V297.7H473V298.1H472V298.1H471H470V297.7H469V297.9H468V297.8H467V297.6H466V298.3H465V297.9H464V298.1H463V297.6H462V298H461V299H460V297.8H459V297.6H458V298.7H457V297.6H456V297.8H455V297.9H454V298.1H453V297.9H452V297.7H451V297.8H450V297.7H449V297.6H448V298.1H447V297.7H446V298.1H445V298.4H444V297.7Z" fill="#00008e"/>
<path d="M544.3 288.6H545.3V289H546.3V288.6H547.3V286.8H548.3V288.7H549.3V288.8H550.3V289H551V289.3V297.5H550.3V299.7H549.3V299.5H548.3V297.7H547.3H546.3V298.2H545.3V297.8H544.3V297.6Z" fill="#00008e"/>
<rect x="435" y="291.3" width="9" height="4.6" fill="#00008e"/>
<rect x="537" y="291.3" width="7.3" height="4.6" fill="#00008e"/>
<rect x="391.5" y="292.2" width="159.5" height="2.4" fill="#0808ff"/>
<path d="M551 235.4H552V235.7H553V233.7H554V235.5H555V235.3H556V234.3H557V234.2H558V234.9H559V235.3H560V235.1H561V234H562V235.4H563V234.2H564V235.5H565V233.9H566V235H567V233.6H568V235.4H569V235H570V235.6H571V235.5H572V235.2H573V234H574V233.2H575V235H576V235.6H577V233.6H578V233.2H579V235.2H580V235.2H581V235.5H582V235.4H583V234.9H584V235.4H585V235.6H586V234.2H587V235.4H588H589V235.6H590V235.2H591V234H592V235.5H593H594V235.3H595V232.8H596V235.4H597V235.2H598V234.9H599V235.6H600V235.4H601V235.3H602V234.1H603V235.4H604H605V234.5H606V233.7H607V235.4H608V235.3H609V235.5H610V234.5H611V235.4H612H613V235H614V235.5H615V233H616V235.2H617V235.5H618V233.7H619V235.6H620V235.7H621H622V234.8H623V235.6H624V234.9H625V235.5H626V233.4H627V235.2H628V234.4H629V235.2H630V233.8H631V235.7H632V234.8H633V235.4H634V235.1H635V234.8H636V235.5H637V235.4H638H639V234.8H640V234H641V235.5H642V234.9H643H644V234.1H645V235.1H646V234.1H647V235.6H648V235H649V234.3H650V235.3H651V235.6H652V234.8H653V235.3H654V235.5H655V235H656V235.4H657V233H658V235.2H659V235H660V234.5H661V234.3H662V232.9H663V235.6H664V235H665V235.2H666V235.4H667V235.1H668V235.4H669V235.6H670V235.1H671V235.6H672V235H673V235.5H674V235.1H675V235.2H676H677V234.4H678V233.8H679V235.7H680V235.1H681H682V233.7H683V232.8H684V235.1H685V235H686V235.3H687V235.6H688V235.4H689H690V235.3H691V234.9H692V233.3H693V235.1H694V234H695V235.7H696H697V235H698V234.8H699V235H700H701H702V235.6H703V235.2H704H705V235.5H706V235.7H707V234.9H708V234.9H709V235.3H710V235.5H711V235.1H712V235.7H713H714V235.4H715V235.6H716V235.1H717V234.9H718V235.7H719V235.2H720H721V235.3H722V235.4H723V235.6H724V234.9H725V234.8H726V235.6H727V233.4H728V234.2H729V233.5H730V235H731V235.4H732V233.7H733V233.9H734V235.2H735V235.5H736V235.2H737H738V235.1H739V235.2H740V235.6H741H742V233.6H743V235.6H744V234.6H745V235.1H746V235.4H747V235.4H748V234.9H749V235.7H750V235.5H751V234.9H752V233.5H753V235.2H754V234.1H755V235.1H756V235.6H757V235.7H758H759V235.1H760V235.6H761V235.6H762V235.2H763V234.8H764V235H765V233.2H766V235.6H767V234.9H768V235.4H769H770V235.5H771V235.5H772H773V234.9H774H775V234.2H776H777V235.6H778V235.4H779V234.1H780V235.4H781V235.6H782V233.3H783V234.9H784H785V235.1H786V234.1H787V235.3H788H789V235.5H790V235.2H791V235.3H792V235.2H793V235.5H794V235.2H795V235.3H796V235.3H797V235.4H798V233.7H799V233.4H800V234.1H801V234.9H802V235.6H803V235.4H804V234.2H805V235H806V235.5H807V235.4H808V234.1H809V235.5H810V234.8H811V235H812V235.3H813V235.6H814V235.3H815V235.6H816V235.5H817V234.9H818V235.5H819H820V235.7H821V234.8H822V235H823V235.4H824V235.5H825V235.7H826V235H827V235.4H828V233.5H829V235.5H830V234.9H831H832V233.7H833V234.8H834V235.4H835V235.5H836V235H837V235.4H838V235.3H839V235.5H840V235.1H841V235H842V235.6H843V235.5H844V235.6H845V235.4H846V235.1H847V234.5H848V234.9H849V234.8H850V233.3H851V234.9H852V234.5H853V234.1H854V235H855V234.8H856V235.1H857V235.3H858V234.5H859V235H860V234.9H861V235H862V235.3H863V234.2H864V235.6H865V233.5H866V235.7H867V235.4H868V234.7H869V234.9H870H871V234H872V233H873V235.7H874V233.1H875V234.9H876V235.3H877H878V235.7H879V235.1H880V235.7H881V235.2H882V235H883H884V234.9H885V235.6H886V234.9H887V233.3H888V235H889V234.9H890V235.3H891V234.6H892V235.4H893V233.4H894V234.9H895V235.3H896V234.8H897V235.3H898V235.1H899V235.4H900V235H901V234.6H902V234.9H903V234.2H904V235.2H905V234.8H906V235.1H907V235.2H908V235.6H909V233.6H910V235.2H911V234.1H912V235.7H913V235.4H914V235.3H915V234.8H916V235.2H917H918V234.9H919V235.5H920V232.9H921V235.2H922H923V235.1H924V234.7H925V235H926V235.6H927V233.9H928V233.3H929V235.5H930V234.1H931V233.7H932V235.1H933V234.4H934V235.6H935V233.5H936V233.2H937V235H938V235.5H939V235.5H940V234.9H941V235.1H942V235.6H943V234.5H944V235H945V233.4H946V235.1H947V235.4H948V235.5H949V235.6H950V235.1H951V233.4H952V234.9H953V235.1H954V235H955V233.7H956V235.6H957H958V234.9H959V235.3H960V235.4H961V233.3H962V235.5H963V234.2H964V233.8H965V235.6H966V232.9H967V234.9H968V235.6H969V234.8H970V235.1H971V235.5H972V235.3H973V234.8H974V235.5H975V235.3H976H977V235H978V235.5H979V233.6H980V234.2H981V234.9H982V233.4H983V235.5H984H985V235.4H986V235.1H987V235.4H988V234.9H989V235.2H990V235.3H991V235.4H992H993V234.9H994V235.5H995V235.6H996V235.5H997V234.3H998V235.5H999V235.1H1000V235H1001V235.1H1002V234.1H1003V234.9H1004V235.6H1005V235.5H1006V235.6H1007V235.5H1008V235.4H1009V235.1H1010V235.6H1011H1012H1013V235.1H1014V234.2H1015V233.3H1016V235.4H1017V235H1018H1019V234.8H1020V235.3H1021V233.5H1022V234.8H1023V235.5H1024V235.1H1025V235H1026V235.1H1027V233.7H1028V235.3H1029V234.8H1030V235.5H1031V235.1H1032V234.6H1033V234.5H1034V235.5H1035V234.2H1036V235.7H1037V235.6H1038V234.9H1039V235.2H1040V235.7H1041V235.3H1042V235.6H1043V235.3H1044V235.6H1045V235.4H1046V234.8H1047V233.5H1048V234.3H1049V235.6H1050V235.7H1051V235.4H1052V235.3H1053V234.8H1054V235H1055H1056V234.8H1057V235.4H1058V234.1H1059V234.9H1060V233.5H1061V235.2H1062V235.5H1063V235.7H1064V232.8H1065V235.1H1066V235.6H1067H1068V235.2H1069V235.5H1070V235.1H1071V234.9H1072V235.1H1073V235.3H1074V233.8H1075V235.4H1076V235H1077V235.5H1078V235.2H1079V234.9H1080V235.1H1081V235.6H1082V235.3H1083V234.8H1084V235.5H1085V233.1H1086V233.4H1087V234.8H1088V234.1H1089V235.2H1090V235.1H1091V235.2H1092H1093V235.5H1094H1095V235.4H1096V235.2H1097H1098V235.5H1099V235.4H1100V235.6H1101V234.8H1102V235.1H1103V235.4H1104V235.1H1105V233.6H1106V235.6H1107H1108V234.9H1109V235.1H1110V234H1111V235.5H1112V235.3H1113H1114V235.4H1115V234.2H1116V235.4H1117V234.3H1118V234.8H1119V235.3H1120V235.4H1121V235.7H1122V234.8H1123V235.3H1124V235.6H1125V235.3H1126V233.5H1127V235.6H1128V235.2H1129V235.5H1130V233.5H1131V235.2H1132V235.3H1133V235H1134V234.9H1135V234.3H1136V235.7H1137V234H1138V235.2H1139V235.5H1140V234.8H1141V235.5H1142V234.9H1143V234.8H1144V233.9H1145V235.6H1146H1147V233.8H1148V235.5H1149V235.4H1150V234.7H1151V235.2H1152V235.6H1153V235.1H1154V235.3H1155V235.4H1156V235.3H1157V235.1H1158V235.6H1159V235.1H1160V235.6H1161V235.1H1162V234.5H1163V235.1H1164V235.4H1165V234.8H1166V235H1167V235.5H1168V235.5H1169V235.5H1170V235.4H1171V234.8H1172V233H1173V234.3H1174V234.8H1175V235.2H1176V234.8H1177H1178V235.4H1179H1180V234.9H1181V235.3H1182V234.9H1183V235.1H1184V235.7H1185V235H1186V235.2H1187V235H1188V235.6H1189V235.3H1190V235H1191V234.5H1192V235.4H1193V235.6H1194V234.9H1195H1196V234.1H1197V233.6H1198V235.1H1199V235H1200V235.6H1201H1202V235.2H1203V234.8H1204V234.1H1205V235H1206V234.5H1207V235.2H1208V233.9H1209V234.8H1210V234H1211V235.6H1212V234.9H1213V235.4H1214V234.8H1215V235.2H1216V235.7H1217V235.2H1218V235.5H1219H1220V235.1H1221V235.3H1222V235.4H1223V235.1H1224V234.6H1225V235.6H1226V235H1227V235.5H1228V234.8H1229V234.4H1230V234.9H1231V235.6H1232V233.8H1233V235.5H1234V235.1H1235V234.9H1236V235.1H1237V234.9H1238V235.1H1239V234.9H1240V235.5H1241V234.8H1242V235.6H1243V234.9H1244V233.2H1245V234.2H1246V235.2H1247V235.5H1248V235.1H1249V235.3H1250V235.6H1251V235.3H1252H1253V235.6H1254V234.1H1255V233.1H1256V232.9H1257V233.6H1258V234.9H1259V235.4H1260H1261V235.4H1262V234.9H1263V235.1H1264V235.4H1265V235.6H1266V233.3H1267V235.3H1268V234.5H1269V234.9H1270V235.7V242.7H1269V243.9H1268V243.1H1267V242.9H1266V243.1H1265H1264V243.6H1263V244.9H1262V243.5H1261V243.1H1260V242.9H1259V242.9H1258V242.7H1257V242.9H1256V245.7H1255V242.9H1254V243.3H1253V242.7H1252V242.8H1251V243.8H1250V242.7H1249V243.4H1248V242.7H1247V243H1246V243.6H1245V243.1H1244V243.3H1243V242.8H1242H1241V245.3H1240V243.1H1239V243.4H1238V243.2H1237V243.5H1236V243.4H1235V245.8H1234V243.3H1233V244.5H1232V242.8H1231V243.3H1230V243.2H1229H1228V243H1227V243.4H1226V243H1225V243.4H1224V243.2H1223V244.5H1222V243.3H1221V244.5H1220V243.4H1219V242.8H1218V243.2H1217V242.9H1216V243.6H1215V243.5H1214V242.7H1213V243.3H1212V243.6H1211V243.4H1210V243.2H1209V242.8H1208V245.3H1207V244.4H1206V243H1205V244.3H1204V243.4H1203V243.1H1202V242.8H1201V243.5H1200V243.1H1199V244.4H1198V244.3H1197V243.3H1196V244.6H1195V243.5H1194V245.5H1193V242.8H1192V245.1H1191V243.1H1190V243.6H1189H1188V243.1H1187V243.3H1186V243.5H1185V243.2H1184V243.4H1183V242.8H1182V243.2H1181V243.6H1180V243.2H1179V243H1178V245H1177V243.5H1176V243H1175V243.6H1174V242.9H1173V243.3H1172V242.9H1171H1170V243.2H1169V242.9H1168V243.4H1167H1166H1165V242.8H1164V244.4H1163V243.4H1162V243.2H1161V243.1H1160V242.9H1159V243.3H1158V244.7H1157V244.4H1156V245.1H1155V243.2H1154V243.4H1153V243.2H1152V243H1151V243.3H1150V243.4H1149V242.7H1148V243.4H1147V242.7H1146H1145V243.3H1144H1143H1142V242.7H1141V243.4H1140V243.1H1139V242.9H1138V243.4H1137V243.6H1136V244.8H1135V242.9H1134V243.1H1133V243.2H1132V243.4H1131V243.2H1130V243.4H1129V243.3H1128V243.2H1127V245.2H1126V242.9H1125V243.5H1124V242.9H1123H1122V243.2H1121V244.5H1120V243.1H1119H1118V245H1117V243.1H1116V243H1115V243.6H1114H1113V242.9H1112V244.4H1111V243.3H1110V242.9H1109V242.8H1108V243.4H1107V243H1106V243.6H1105V243.1H1104V245.1H1103V242.8H1102V243.4H1101V243.3H1100V242.9H1099V243.6H1098V243.4H1097V243.2H1096V243.9H1095V243H1094V243.4H1093V242.9H1092V243.2H1091V243.7H1090V244.8H1089V243.9H1088V243H1087H1086H1085V243.4H1084V243.2H1083V242.9H1082V244.3H1081V243.8H1080V243.6H1079V242.8H1078V242.7H1077V243.5H1076V244.5H1075V243.7H1074V243.5H1073V243.2H1072V243.4H1071V243.1H1070V242.8H1069V243.1H1068V243.5H1067V242.9H1066V243.5H1065V243.1H1064V243.3H1063V243.1H1062V242.9H1061V242.9H1060V244H1059V242.7H1058H1057V243H1056V244.4H1055V243.4H1054V243.5H1053V243.4H1052V244H1051V243.5H1050V244.5H1049V242.8H1048V243.7H1047V244.1H1046V243.4H1045V242.8H1044V243.4H1043H1042V243.6H1041V243.4H1040V242.8H1039V245.6H1038V243.5H1037H1036V243.4H1035V244.2H1034V243.6H1033V243.4H1032H1031V244.5H1030V243.5H1029H1028V243.4H1027V244.1H1026V243.1H1025V243.4H1024V242.9H1023V243H1022V242.8H1021V243.1H1020H1019V244.9H1018V243H1017V243.2H1016H1015V243.5H1014V242.9H1013H1012H1011H1010V243.5H1009V242.8H1008V243H1007H1006V243H1005V242.7H1004V243.1H1003V242.7H1002V242.9H1001H1000H999V242.8H998V243.1H997V243.4H996V244.6H995V242.9H994V243.4H993V243.5H992V242.9H991V243.2H990V243.4H989V243.9H988V244.3H987V244.7H986V243H985V243.2H984H983V243.6H982V243H981V244.7H980V242.7H979V243.9H978V242.9H977V243.3H976V245.1H975V243.1H974V243H973V243.4H972V242.8H971V243.5H970V243.5H969V243.6H968V243.3H967V245.2H966V244.7H965V243.5H964V243.3H963V244.9H962V243H961V245.3H960V243.4H959V243.2H958V243.2H957V243.6H956V243.2H955V243.1H954V245.2H953V243.5H952H951V243.3H950V243H949V245H948V243.4H947V245.2H946V242.8H945V243.6H944V243.1H943V245.2H942V244.6H941V243H940V242.9H939H938V244.3H937V243.5H936V242.7H935H934V242.9H933V242.8H932V243.5H931H930V242.8H929V243.5H928V242.8H927V243.5H926H925V243.3H924V242.9H923V242.8H922V243.7H921V242.7H920V243.3H919H918V243.2H917V243.5H916H915V243.1H914V242.8H913V243.5H912V242.7H911V243.6H910V242.8H909V243.5H908V243.4H907V243.1H906H905V243.5H904V243.3H903V243.5H902V243.1H901V243.6H900V243.2H899V243H898V243.4H897V243H896V243.5H895H894V243.3H893V243.4H892H891V243.2H890H889V242.8H888V243.8H887V243.1H886V243.4H885V243.3H884V243.4H883V243.5H882V243.2H881V243.2H880V242.8H879V243.4H878V242.9H877V243.5H876V243.3H875V243H874V243.8H873V243.6H872V245.1H871V243.2H870V243.4H869V242.8H868V245H867V242.9H866V242.8H865V243.5H864V243.1H863H862H861V244.9H860V243.6H859V242.8H858V243.2H857V245H856V242.9H855V244.4H854V243.1H853V242.8H852V242.7H851V243.4H850V243.6H849V242.9H848V243H847V244.7H846V244.2H845V243.4H844V245.2H843V244.8H842V243.2H841V243.4H840V243.1H839V245.1H838V243.2H837V243.3H836V243.4H835V243.3H834V243H833V243.1H832V243.4H831V243.5H830V243.1H829H828V244.8H827V243H826V244.2H825V242.9H824V243.1H823V243H822H821V243.1H820V242.9H819V243.5H818V242.7H817V243.4H816V244.1H815V243.2H814V243.5H813V243.7H812V242.7H811V243.3H810H809V242.8H808V243.3H807V244.8H806V244.4H805V243.2H804V244.1H803V242.9H802V243.5H801V243.5H800V242.9H799V245.1H798V243.4H797V243.3H796V242.9H795H794V243H793V243.5H792V243.4H791V243H790V243.4H789V243.3H788V243.2H787V245.3H786V243.5H785V244.2H784V244.7H783V242.9H782V243.4H781V245.5H780V243H779H778V243.2H777V242.7H776V242.8H775V243H774V244.5H773V242.8H772V243.6H771V243.3H770V244.3H769V242.8H768V243.1H767V243.4H766V243.6H765V243.5H764V245.5H763V245.1H762V243.1H761V242.9H760V243.2H759V243.3H758V245.1H757V242.9H756H755V244.1H754V243.4H753V243.6H752V243.2H751V243H750H749V243.3H748V243.5H747V244H746V244.5H745V242.9H744V243.3H743V242.8H742V245.3H741V243.6H740V243.2H739V243.2H738V243H737V243.6H736V243H735V243.7H734V243.2H733V243.5H732V242.7H731V243.4H730V243.1H729V243.4H728V243.5H727H726V243.4H725H724V244.8H723V243.5H722V243.8H721V243.5H720V242.8H719H718V243.5H717V243.1H716V244.5H715V243.7H714V242.8H713V242.8H712V243.1H711V243.6H710H709V244.5H708V243H707V243.4H706V242.7H705V243.8H704V243.1H703H702V242.9H701V243H700V242.8H699V242.8H698V243.5H697V243.7H696V244.1H695V243H694V243.1H693V243.5H692V243.8H691V243.4H690V243.1H689V242.9H688V243H687V245H686V243.4H685V243.1H684V243.2H683V242.9H682V242.7H681V243H680V242.9H679V243.4H678V243.1H677V244.9H676V243.4H675V242.8H674V243.3H673V244.7H672V242.8H671V243.5H670V243.3H669V242.9H668V244.3H667V243.3H666V242.8H665V243.1H664V243H663H662V243.4H661H660V242.9H659V244H658V243.5H657V243H656V243.1H655V242.7H654V243.3H653V243.6H652V243.2H651V242.9H650H649V243.3H648V243.1H647V243.5H646V243.3H645V242.9H644H643V243.1H642V243.9H641V244.6H640V243.2H639V242.9H638V243.2H637V243H636V242.9H635V242.7H634V244H633V243.6H632V243.4H631H630V243.2H629V242.8H628V243.5H627V243.4H626V242.8H625V245.3H624V242.9H623V245.3H622V243.4H621V243.2H620V243.1H619V243H618V244.6H617V242.7H616V243.6H615V243.4H614V242.8H613V243.6H612V243.2H611V243.3H610H609V242.8H608H607V243.2H606V243.2H605V242.8H604V243.2H603V243.4H602V243.1H601V243.5H600H599H598V242.8H597V244.7H596V243.2H595V242.8H594V242.7H593H592V243.1H591V243.7H590V243.4H589V244.6H588V243.1H587H586H585V244.8H584V244.2H583V242.7H582V243.1H581V242.9H580V242.8H579V243.3H578V242.7H577H576V242.8H575V243.4H574V244.3H573V243.3H572V244.1H571V243.1H570V242.7H569V243.8H568V243H567V242.8H566V245.1H565V243.4H564V243.2H563V243.5H562V243H561V244.8H560V242.9H559V242.8H558V243.1H557V243.3H556V243.5H555V243.3H554V243.1H553V242.8H552V242.9H551V242.8Z" fill="#00008e"/>
<rect x="551" y="237.3" width="719" height="2.6" fill="#0808ff"/>
<rect x="390.9" y="238" width="1.2" height="72" fill="#00008e"/>
<rect x="413.9" y="241" width="1.1" height="68" fill="#00008e"/>
<rect x="436.9" y="241" width="1.1" height="68" fill="#00008e"/>
<rect x="481.9" y="241" width="1.1" height="68" fill="#00008e"/>
<rect x="504.9" y="241" width="1.1" height="68" fill="#00008e"/>
<rect x="528" y="241" width="1.1" height="68" fill="#00008e"/>
<rect x="459.3" y="241" width="1.8" height="68" fill="#00008e"/>
<rect x="550.4" y="238" width="1.2" height="67" fill="#00008e"/>
</g>
<g id="c2">
<path d="M17 147.4H18V147.7H19V147.5H20V147.4H21V147.6H22V147.4H23V147.6H24V147.5H25V147.7H26V147.6H27V146.4H28V147.5H29V145.9H30V147.7H31V146.8H32V147.5H33V147.4H34V147.5H35V147.7H36V147.4H37H38V147.6H39H40V146.6H41V147.4H42V146.9H43V147.5H44V147.6H45V145.7H46V147.6H47V147.7H48V146.4H49H50V147.6H51V147.5H52V147.4H53V146.7H54V147.4H55V145.6H56V146.3H57V145.9H58V147.5H59H60H61V147.2H62V147.5H63V147.4H64V147.5H65V146.7H66V147H67V147.4H68V147.6H69V147.3H70V147.6H71V147.5H72V147.4H73V147.5H74H75V147.6H76V147.3H77V147.4H78H79V147.3H80V147.4H81H82V147H83V147.4H84V147.5H85V147.2H86V147.5H87V147.6H88V147.3H89V147.2H90V147.4H91H92H93V147.5H94V147.4H95H96V147.6H97H98H99V147.5H100V147.3H101V146.8H102V147.5H103V146H104V146.5H105V147.4H106V147.4H107V147.7H108V147.4H109V147.3H110V147.5H111H112V147.3H113H114V147.6H115V147.7H116V146H117V147.6H118V147.3H119V147.6H120V147.4H121H122V147.5H123V146.1H124V145.5H125V147.1H126V147.7H127V145.4H128V145.6H129V146.4H130V147H131V147.6H132V147.4H133V147.6H134V147.4H135H136V147.7H137V147.6H138V147.7H139V147.5H140V147.6H141V147.7H142V147.6H143V147.3H144V147.5H145V147.6H146V147.4H147H148H149V147.7H150V147.1H151V147.2H152V147.3H153V147.5H154V147.6H155V147.4H156V147.3H157V147.4H158V147.6H159V147.5H160V147.7H161V147.3H162V147.5H163H164V147.4H165V147.7H166V147.3H167V147.7H168V147.5H169V147.7H170V146.3H171V147.3H172V146.8H173V147.5H174V147.4H175H176V147.5H177V147.7H178V147.6H179V147.7H180V145.9H181V147.6H182V147.4H183V147.5H184H185V147.3H186V147.6H187H188H189V147.4H190V147.3H191V147.6H192V147.5H193V146.5H194V147.4H195H196V147.5H197V147.7H198V147.3H199V147.6H200V147.5H201V147.6H202V146.7H203V147.7H204V147.6H205V147.4H206V147.6H207V147.6H208V147.3H209V147.5H210V147.6H211V146.3H212V147.4H213V147.3H214V147.7H215V147.4H216V147.7H217V147.6H218V147.7H219H220V147.5H221H222V147.4H223V147.7H224V147.6H225V147.7H226V147.2H227V147.5H228V147.3H229V147.4H230V147.5H231V147.3H232V147.2H233V147.4H234H235V147.6H236V147.3H237V147.4H238V147.7H239V147.4H240V147.5H241V147.6H242H243V147.5H244V147.3H245V147.5H246V147.3H247V147.5H248V147.7H249V147.3H250V147.4H251V147.4H252V147.7H253V146H254V147.3H255V147.7H256V147.5H257V147.5H258V147.6H259V147.5H260V146.2H261V146H262V147.6H263V147.4H264V147.4H265V147.4H266V147.7H267H268V147.4H269H270V147.6H271V147.5H272V146.8H273V147.3H274V147.5H275V147.6H276V145.6H277V147.3H278H279V147.6H280V147.5H281H282V147.7H283V147.1H284V147.5H285H286H287V147.7H288H289V146.2H290V147.4H291V147.5H292V147.6H293V146.2H294V147.6H295H296V147.4H297V147.7H298V147.3H299H300V147.7H301H302H303V147.5H304V147.6H305H306V147.6H307H308V147.4H309V145.9H310V147.6H311H312H313V147.3H314V147.5H315V147.6H316V147.3H317H318V147.7H319V147.2H320V147.5H321V147.5H322V147.4H323V145.7H324V147.5H325V147.4H326V147.5H327V147.6H328V147.5H329V147.7H330V147.5H331V147.6H332V147.7H333V145.5H334V147.7H335V147.5H336V147.6H337V147.4H338V147.4H339V147.6H340V147.3H341H342H343H344H345V146.2H346V147.5H347V147.4H348H349V147.5H350H351V146.3H352V147.3H353V147.5H354V147.5H355V147.6H356V147.5H357V147.7H358V147.4H359V147.5H360V147.6H361V146.2H362V147.6H363H364V147.6H365V147.4H366V147.6H367V147.5H368V147.7H369V147.4H370V147.5H371V147.6H372V145.5H373V146.7H374V147.7H375V147.3H376V147.5H377V147.7H378V147.5H379V147.3H380H381V147.6H382H383V147.5H384V147.4H385V147.4H386V147.5H387H388V147.7H389H390V147.2H391V147.6H392V147.6H393V147.3H394V147.5H395V147.6H396V147.3H397V146H398V147.3H399V147.5H400V147.6H401V147.7H402V147.5H403V147.7H404V147.4H405V147.4H406V147.6H407V147.5H408H409V147.4H410V147.6H411V147.7H412V146.5H413V147.3H414V147.5H415V147.7H416V147.5H417V147.3H418V146.1H419V147.3H420V147.7H421V147.3H422V147.4H423H424V147.6H425V145.4H426V147.2H427V147.6H428V147.5H429V147.5H430V147.7H431V147.5H432V146.5H433V147.5H434V147.6H435V147.7V155.1H434V155.2H433V155.4H432V155.2H431V155.3H430V157.3H429V155.5H428H427H426H425V155.1H424V155.3H423H422V155.2H421H420V155.4H419H418H417V155.5H416H415V155.3H414H413V156.2H412V155.5H411V155.1H410V155.3H409V156H408V155.4H407H406V155.4H405V155.3H404H403V155.4H402H401H400V155.2H399V155.1H398V156.4H397V155.2H396V155.4H395H394H393V155.2H392V155.3H391V155.2H390V155.3H389V155.2H388V155.4H387V155.1H386V155.3H385V155.1H384V155.3H383V155.2H382V155.8H381V155.5H380V155.2H379V155.3H378V155.3H377V155.4H376V156.8H375V155.4H374V156.9H373V155.4H372V155.7H371V155.4H370V155.2H369H368V155.4H367V155.2H366V155.4H365V155.4H364H363V155.4H362V156.9H361V155.2H360V155.4H359H358V156.2H357V155.3H356V155.1H355H354V155.2H353H352V155.3H351V155.3H350H349H348H347H346V155.2H345V157.1H344V155.2H343V156H342V155.4H341V156.9H340V155.4H339H338V155.1H337V155.5H336V155.2H335V155.3H334V155.2H333V156.1H332V155.2H331V155.8H330V155.5H329V155.1H328V155.4H327V155.2H326H325V155.3H324V155.4H323V157H322V155.2H321V155.2H320H319V156.3H318V155.2H317V155.4H316V155.2H315H314V155.2H313V155.3H312V155.3H311V155.4H310V155.2H309V155.4H308V155.2H307V155.5H306V155.3H305V155.2H304V155.4H303V155.1H302V155.5H301V155.4H300H299V155.3H298V157.1H297V155.3H296H295V155.5H294V155.3H293H292H291H290V155.5H289V156.2H288V155.1H287V155.2H286V155.6H285V155.7H284V155.3H283H282V155.1H281V155.5H280H279V155.2H278V155.5H277V155.2H276V156.7H275V155.3H274V155.4H273V156.3H272V155.3H271V155.4H270V155.4H269V155.3H268V155.4H267V155.2H266V155.4H265H264V155.2H263V156.8H262V155.4H261V156.8H260V157.1H259V155.4H258V155.1H257V156.8H256V155.4H255V156.7H254V156.3H253V155.4H252H251V155.2H250V155.4H249V155.3H248V155.2H247V155.5H246V155.2H245V157H244V155.3H243V155.4H242V155.1H241H240V155.2H239V155.1H238V156.3H237V155.3H236V155.4H235V157.2H234V155.4H233V156.6H232V155.3H231V155.1H230V155.3H229V155.2H228H227V155.4H226V155.2H225H224H223V155.2H222V155.3H221V155.3H220V155.4H219V155.3H218H217H216V157.1H215V155.9H214V155.4H213V155.2H212V156.7H211V155.2H210H209V155.1H208V155.5H207V155.3H206V155.1H205V155.3H204V155.1H203V156.8H202V155.2H201H200V155.2H199V155.8H198V157.4H197V156.3H196V155.3H195V155.5H194V155.2H193V155.4H192V155.2H191H190V155.3H189V155.3H188V155.2H187V155.4H186V155.1H185V157H184V155.3H183H182V155.2H181H180V155.2H179V155.3H178V155.1H177V155.4H176H175V155.5H174V155.3H173V155.3H172V155.2H171V156.4H170V155.1H169V155.2H168V155.2H167V155.6H166V155.5H165H164V156.1H163V155.2H162V155.3H161V155.4H160V155.3H159H158H157H156V155.5H155V155.4H154H153V155.2H152V155.5H151V155.4H150V155.3H149V155.4H148V157.3H147V155.4H146V155.3H145V155.4H144V155.4H143H142V155.2H141V155.3H140H139V155.5H138H137V156H136V157.1H135V155.4H134H133V155.4H132H131H130H129V155.3H128H127V155.4H126H125V157.3H124V155.4H123V155.2H122V155.4H121V155.5H120V155.9H119V155.5H118V156.9H117V155.3H116V155.1H115V155.3H114V155.4H113V155.2H112V155.4H111V155.5H110V155.4H109V155.3H108V155.2H107H106V155.5H105V155.4H104V155.1H103V155.2H102V155.4H101H100V155.1H99V155.5H98V155.2H97V155.5H96V155.2H95V155.2H94H93H92V155.2H91V155.4H90V155.4H89V155.5H88H87V155.5H86V155.1H85H84V155.6H83V155.4H82V155.3H81V155.2H80H79V155.4H78V155.2H77H76V155.2H75V155.1H74H73H72V155.3H71V155.4H70V155.3H69V155.4H68H67V156.3H66V156H65V155.1H64V155.2H63V155.3H62V155.2H61V155.3H60V155.2H59V155.1H58V155.2H57V155.4H56V155.5H55V155.1H54V155.5H53V156.4H52V155.4H51H50V155.3H49V156H48V155.3H47V155.2H46H45V155.4H44H43V156.6H42V155.3H41V155.4H40H39V155.1H38V155.5H37V155.2H36V156.5H35V155.5H34V155.4H33V155.1H32V157.2H31H30V155.2H29V155.3H28V155.5H27V155.3H26V155.4H25V155.2H24H23V155.4H22V155.7H21V155.3H20H19V156.9H18V155.4H17V155.2Z" fill="#8c0048"/>
<path d="M443.6 147.4H444.6H445.6V147.7H446.6V147.3H447.6V147.5H448.6V147.2H449.6V147.5H450.6V145.8H451.6V147.6H452.6V147.5H453.6H454.6V147.6H455.6V147.1H456.6V147.3H457.6V147.5H458.6V147.3H459.6H460.6H461.6V147.6H462.6V147.5H463.6V147.4H464.6V145.6H465.6V147.4H466.6V147.6H467.6V147.4H468.6V147.5H469.6V147.7H470.6V147.3H471.6H472.6V147.4H473.6V147.7H474.6V147.5H475.6V146.5H476.6V147.7H477.6V147.6H478.6V147.4H479.6V147.5H480.6V147.7H481.6V147.6H482.6V147.4H483.6V147.6H484.6V147.5H485.6V147.4H486.6V147.6H487.6V146.4H488.6V147.7H489.6V147.3H490.6V147.6H491.6V147.6H492.6V147.5H493.6V147.7H494.6V147.4H495.6V147.5H496.6H497.6V147.6H498.6V147.7H499.6V147.3H500.6V147.6H501.6H502.6V147.6H503.6V147.5H504.6V147.4H505.6V147.6H506.6H507.6V147.3H508.6H509.6V147.5H510.6H511.6V147.4H512.6V147.6H513.6V147.3H514.6V147.4H515.6V147.5H516.6H517.6H518.6H519.6V147H520.6V147.3H521.6V147.4H522.6V147.5H523.6V145.9H524.6V147.6H525.6V147.5H526.6V147.4H527.6V146.5H528.6V145.8H529.6V146.9H530.6V147.4H531.6V147.6H532.6H533.6V147.5H534.6H535.6V147.2H536.6V147.4H537V147.7V155.1H536.6V155.4H535.6V155.1H534.6H533.6V155.2H532.6H531.6V155.5H530.6V155.3H529.6H528.6V155.1H527.6V156.8H526.6V155.2H525.6V155.1H524.6V155.4H523.6V155.2H522.6V155.8H521.6V155.5H520.6V155.3H519.6V155.2H518.6V155.3H517.6H516.6V156H515.6V155.3H514.6V155.2H513.6V155.4H512.6V155.2H511.6V155.5H510.6V156.3H509.6V155.2H508.6H507.6V155.4H506.6V156.9H505.6V156.1H504.6V155.1H503.6H502.6V157H501.6V155.2H500.6V155.5H499.6V155.4H498.6V155.2H497.6V156.2H496.6V155.1H495.6V157.3H494.6V155.3H493.6V155.4H492.6V155.3H491.6V155.1H490.6V157.2H489.6V155.4H488.6V155.5H487.6V155.4H486.6V155.2H485.6V155.4H484.6V155.2H483.6V155.4H482.6V155.3H481.6V155.4H480.6V155.5H479.6V155.2H478.6V155.4H477.6H476.6H475.6V155.2H474.6V155.2H473.6H472.6V157.1H471.6V157H470.6V155.1H469.6V155.2H468.6V155.4H467.6V155.5H466.6H465.6V155.3H464.6H463.6V155.6H462.6V155.2H461.6H460.6V155.2H459.6V155.3H458.6V155.4H457.6V157H456.6V155.4H455.6V155.5H454.6V155.3H453.6H452.6V155.3H451.6H450.6H449.6H448.6V155.2H447.6V155.5H446.6H445.6V155.2H444.6V155.3H443.6V155.1Z" fill="#8c0048"/>
<path d="M544 147.5H545V145.8H546V147.4H547V147.5H548V147.6H549V147H550V147.5H551H552V147.4H553V147.3H554H555V147.5H556V147.6H557V147.5H558H559V147.5H560V147.4H561V147.7H562V147.3H563H564V147.5H565H566V147.6H567V147.3H568V147.5H569V147.3H570V147.6H571V147.3H572V147.6H573V147.4H574V147.5H575H576V145.6H577V147.7H578V147.5H579H580V147.6H581H582H583V145.7H584V147.7H585V147.5H586V147.6H587H588H589V147.4H590V147.7H591V147.6H592V147.7H593V147.5H594V147.6H595V147.2H596V146.6H597V147.6H598H599V147.6H600V147.4H601V147.5H602V147.4H603H604V147.5H605H606V146.6H607V147.4H608V147.3H609V147.2H610V147.7H611V145.9H612V147.5H613H614H615V147.6H616V147.7H617V147.5H618H619V147.4H620V147.4H621V145.8H622V147.6H623V145.9H624V147.4H625V147.6H626V147.7H627V147.5H628V147.6H629V147.5H630V147.6H631V147.3H632V146H633V147.6H634V145.9H635V147.5H636V145.9H637V147.4H638V146H639V147.4H640V147.5H641V147.6H642V147.5H643V147.6H644V147.5H645V147H646V146.5H647V147.5H648H649V147.3H650V147.5H651V147.4H652V145.6H653V147.5H654H655V147.6H656H657V147.5H658V145.9H659V146.8H660V147.3H661V146.3H662V147.4H663V145.8H664V147.4H665V147.6H666V146.8H667V147.7H668V147.5H669V147.5H670V147.5H671V147.5H672H673V145.7H674V146.6H675V147.5H676H677V147.5H678H679V145.9H680V147.3H681V147.7H682V147.6H683V147.4H684V147.6H685V147.5H686H687V147.7H688V146.2H689V147.5H690V147.7H691V147.3H692V146.3H693V147.6H694H695V147.7H696V147.5H697V147.4H698V147.5H699V147.7H700V147.3H701V145.4H702V147.4H703H704H705V147.5H706V145.8H707V147.7H708V147.2H709V147.5H710V147.3H711V147.4H712H713H714V147.6H715V147.4H716V147.3H717V147.4H718V147.6H719V147.5H720H721V147.5H722V147.4H723V147.5H724V146.5H725V147.5H726V147.3H727V147.6H728V147.5H729V147.6H730H731V147.3H732V147.6H733H734V147.6H735V147.5H736V147.4H737V147.5H738V147.4H739V147.5H740V147.3H741V147.4H742H743V147.7H744V147.4H745V147.6H746V147.3H747V147.4H748H749V147.7H750H751V147.6H752H753V147.4H754V147.7H755V147.4H756V147.7H757H758V147.4H759V146.7H760V147.7H761V146.9H762V145.8H763V147.6H764V147.5H765V145.7H766V146.4H767V147.3H768V147.6H769V147.5H770V147.7H771V147.5H772H773V147.3H774V147.7H775V147.6H776H777V147.5H778V147H779V147.4H780V147.5H781V147.1H782V146.7H783V147.6H784V146H785V147.4H786V147.7H787V147.6H788V146.9H789V147.4H790H791V147.4H792V146.8H793V147.5H794V147.6H795V147.5H796V147.7H797V147.5H798V147.3H799V147.5H800V147.6H801V147.4H802V147.7H803V147.5H804V146.7H805V147.4H806V147.5H807V145.6H808V147.4H809V147.5H810V147.3H811V145.8H812V146.6H813V147.5H814V147.5H815V147.5H816V147.6H817V147.1H818V147.6H819H820H821V147.7H822V147.5H823V147.5H824H825V146.6H826V147.3H827V147.6H828V147.4H829H830V147.7H831V147.3H832H833V147.7H834V147.6H835H836V147.6H837V147.3H838V147.6H839V146.5H840V147.6H841V147.5H842V147.4H843V147.6H844V147.4H845V146.5H846H847V147H848V147.6H849V146.6H850V147.5H851V147.4H852V147.5H853H854V147.6H855V147.3H856V147.5H857V147.4H858V146.3H859V147.7H860V147.5H861H862H863H864V147.7H865V147.5H866H867V147.4H868H869V147.5H870V146.3H871V147.3H872V146.4H873V147.7H874H875V147.5H876V147.4H877V147.3H878V147.5H879V147.6H880V146H881V146.3H882V147.4H883V147.5H884V147.4H885V147.5H886H887V147H888V147.6H889H890V147.4H891V147.3H892V147.6H893V147.4H894V147.6H895V147.3H896V147.7H897V147.6H898H899V147.7H900V147.6H901V147.5H902H903H904V147.5H905V147.6H906V147.7H907V147.3H908V147.7H909V147.5H910V147.4H911V146.1H912V147.5H913H914V147.3H915V147.6H916V147.7H917V147.4H918V147.5H919V147.6H920H921V147.5H922V147.7H923V147.6H924V147.3H925H926V147.7H927H928V147.4H929H930V147.7H931V147.5H932V146.7H933V147.5H934V147.5H935V147.5H936V147.7H937H938V147.6H939V147.4H940V147.6H941V147.3H942H943V147.5H944V147.4H945V147.6H946H947H948V147.5H949V147.7H950V146.7H951V147.4H952V147.5H953V147.3H954V147.7H955V147.5H956H957H958V147.7H959V147.5H960H961V147.4H962V146.6H963V145.6H964V147.5H965V145.7H966V147.6H967V147.4H968V145.7H969V147.6H970H971V146.7H972V147.3H973V147.7H974H975V147.6H976V147.6H977V146.4H978V147.3H979V147.6H980V146.3H981V147.6H982V147.4H983V146.6H984V147.5H985V147.4H986V147.4H987V147.5H988V147.4H989H990V147.7H991V147.5H992H993H994V147.4H995V147.6H996V147.4H997V147.7H998V147.6H999V147.5H1000V147.4H1001V145.9H1002V147.2H1003V147.4H1004V147.5H1005V146.4H1006V147.6H1007H1008V147.4H1009V147.6H1010V147.4H1011V147.5H1012H1013H1014V146.7H1015V147.5H1016V145.8H1017V145.9H1018V146.4H1019V147.5H1020H1021V147.5H1022V147.3H1023V147.7H1024V147.3H1025V145.7H1026V147.5H1027V147.5H1028V147.3H1029V147.6H1030V146.3H1031V147.5H1032V147.3H1033V147.6H1034V146.9H1035V147.4H1036V147.3H1037V147.4H1038H1039V147.3H1040V147.5H1041V147.7H1042V147.5H1043V147.4H1044H1045V147.4H1046V146.1H1047V147.6H1048H1049H1050H1051H1052V147.4H1053V147.5H1054H1055V147.7H1056V147.1H1057V147.6H1058V146.1H1059V147.4H1060V147.7H1061V147.3H1062V147.6H1063V147.3H1064V147.5H1065V147.7H1066V147.3H1067V146.1H1068V147.3H1069H1070V146.2H1071V146.2H1072V147.4H1073H1074V147.5H1075V147.4H1076V147.7H1077V147.6H1078V147.5H1079H1080H1081V147.7H1082V147.5H1083V147.5H1084V145.7H1085V146.8H1086V147.5H1087V145.9H1088V147.4H1089V145.6H1090V146.4H1091H1092V147.2H1093V146.2H1094V147.3H1095V147.4H1096V146.4H1097V147.6H1098V147.7H1099V147.4H1100H1101H1102V147.5H1103V147.4H1104H1105V147.3H1106V147.6H1107V145.8H1108V147.4H1109V147.6H1110V147.5H1111V147.4H1112V147.5H1113V147.3H1114V147.4H1115V147.5H1116V146.4H1117V147.4H1118V147.6H1119H1120V147.3H1121V147.4H1122V147.6H1123V147.5H1124H1125V147.4H1126V147.6H1127V147.4H1128H1129V147.6H1130V147.4H1131V147.3H1132V147.4H1133H1134V146.4H1135V147.6H1136H1137V147.3H1138V147.7H1139V147.3H1140V147.3H1141V147.4H1142V147.3H1143V146.3H1144V147.6H1145V147.4H1146V147.7H1147V147.4H1148V147.5H1149V147.3H1150V146H1151V147.5H1152V147.6H1153V147.4H1154V147.6H1155V146.2H1156V147.7H1157V147.3H1158V147.6H1159V147.5H1160V147.6H1161V147.4H1162V147.7H1163V147.5H1164V147.4H1165V147.1H1166V146.7H1167V147.5H1168H1169H1170H1171V146.6H1172V146H1173V147.5H1174V147.6H1175V147.3H1176V147.4H1177V147.3H1178H1179V145.5H1180V147.5H1181V147.7H1182V146.8H1183V147.3H1184V147.4H1185V147.6H1186V147.4H1187V147.5H1188H1189V147.7H1190V147.3H1191V147.4H1192V147.4H1193H1194H1195H1196V147.6H1197V146.8H1198V147.4H1199H1200H1201V147.6H1202V147.7H1203H1204V147.3H1205V147.5H1206V147.6H1207V147.4H1208V146.3H1209V147.4H1210V147.4H1211V147.5H1212V147.7H1213V147.6H1214V147.5H1215V147.6H1216V147.3H1217V147.6H1218V147.7H1219V147.4H1220V147.3H1221H1222H1223V147.6H1224V146.5H1225V147.5H1226V147.3H1227V147.5H1228V147.6H1229V147.5H1230H1231H1232V147.3H1233H1234V146.2H1235V145.6H1236V147.5H1237V146.3H1238V147.4H1239V147.5H1240V147.4H1241V147.6H1242V146.5H1243V147.7H1244V147.4H1245V147.6H1246H1247V147.3H1248H1249V147.5H1250V147.4H1251V147.3H1252V147.4H1253H1254H1255V147.5H1256V147.6H1257H1258V147.1H1259V147.5H1260V147.6H1261V147.7H1262V147.4H1263V147.5H1264V147.6H1265V147.5H1266V147.4H1267H1268V147.6H1269V147.5H1270V147.7V155.1H1269V156.8H1268V155.2H1267H1266V155.1H1265V155.3H1264V157.2H1263V156.9H1262V155.5H1261V155.3H1260V155.5H1259V155.4H1258H1257V155.8H1256V155.4H1255V155.3H1254V155.2H1253V155.4H1252H1251V155.4H1250V155.3H1249H1248H1247V155.2H1246V155.4H1245V155.4H1244H1243V155.6H1242V155.2H1241V155.5H1240V155.1H1239V155.4H1238H1237H1236V156.8H1235V155.3H1234V157.3H1233V155.2H1232V155.4H1231V155.3H1230V155.4H1229V155.2H1228H1227V155.5H1226V155.7H1225V155.4H1224V155.3H1223V155.2H1222V155.4H1221V155.3H1220V155.5H1219V155.9H1218V155.1H1217V155.3H1216V155.5H1215V156.6H1214V155.4H1213V156.6H1212V155.5H1211V155.2H1210V155.2H1209H1208V155.2H1207V155.3H1206H1205H1204H1203V155.2H1202V155.3H1201V155.4H1200V155.4H1199H1198V155.5H1197V155.3H1196H1195H1194H1193H1192H1191V155.2H1190V155.2H1189V155.4H1188H1187V155.3H1186H1185V155.3H1184V155.5H1183V155.8H1182V157.1H1181V155.2H1180V155.3H1179H1178V155.4H1177V155.1H1176V155.5H1175V155.1H1174V155.5H1173V155.4H1172H1171V155.4H1170V155.2H1169V155.3H1168V155.2H1167V155.4H1166V155.5H1165V155.4H1164V155.2H1163V155.5H1162H1161V155.1H1160V155.3H1159V155.8H1158V155.1H1157V155.3H1156V156.5H1155V155.2H1154V156.3H1153V157.3H1152V155.4H1151H1150V155.5H1149V155.2H1148V155.4H1147V155.1H1146H1145V155.3H1144H1143H1142H1141H1140H1139H1138V155.7H1137V155.4H1136V155.2H1135V156.3H1134V155.5H1133H1132V155.3H1131V155.1H1130V155.2H1129V155.3H1128H1127V155.1H1126H1125V155.3H1124V155.4H1123V155.2H1122V155.2H1121V155.3H1120V155.2H1119H1118V155.5H1117V155.3H1116V155.4H1115V155.2H1114V155.4H1113V155.2H1112V155.8H1111V157.1H1110V155.1H1109V155.4H1108V155.3H1107V155.3H1106V155.4H1105V155.5H1104V155.3H1103V155.4H1102V155.5H1101H1100V155.2H1099H1098H1097H1096H1095V155.1H1094V155.5H1093V155.2H1092V155.3H1091V155.5H1090V155.2H1089V155.4H1088V155.3H1087H1086V156H1085V155.2H1084V156.8H1083V155.3H1082V155.3H1081V155.4H1080H1079V156.4H1078V155.4H1077V155.3H1076V155.2H1075V155.4H1074V157H1073V156.6H1072V156.5H1071V155.4H1070V155.2H1069V155.5H1068V155.4H1067V155.3H1066V155.5H1065V156.3H1064V155.3H1063H1062V155.2H1061V156.7H1060V156.8H1059V155.2H1058V155.4H1057V155.2H1056H1055V155.3H1054V156.9H1053V155.3H1052H1051V155.2H1050V155.3H1049V155.1H1048V155.3H1047V155.2H1046H1045V155.5H1044V155.2H1043V155.3H1042V155.1H1041V155.2H1040V155.1H1039V155.2H1038V155.4H1037V155.2H1036V157H1035V155.4H1034V155.2H1033V155.4H1032V155.4H1031V155.2H1030V155.3H1029V155.1H1028V155.2H1027V155.3H1026V155.1H1025V155.4H1024V156.6H1023V155.4H1022V155.5H1021V155.2H1020V155.4H1019V155.1H1018V155.4H1017V155.4H1016V155.2H1015V155.5H1014V156.4H1013V155.3H1012H1011H1010V155.2H1009V155.4H1008V155.9H1007V155.5H1006V155.2H1005H1004V155.3H1003H1002V155.2H1001V155.4H1000V155.9H999V155.5H998V155.2H997V155.4H996H995V155.1H994V155.4H993V155.5H992H991V155.3H990V155.2H989V155.3H988V155.5H987V155.4H986V156.3H985V155.3H984V155.4H983V155.3H982V155.4H981V155.3H980V155.3H979V155.5H978V155.9H977V155.5H976V155.1H975V156.9H974V155.3H973V155.5H972V155.2H971V157.1H970V155.5H969V155.4H968V155.5H967V155.1H966H965V157.4H964V155.4H963V155.1H962H961V155.2H960H959V155.3H958V157.1H957V155.2H956H955V155.3H954V155.2H953V155.4H952V155.3H951V156.1H950V155.5H949V155.4H948V155.2H947V155.5H946V155.3H945V155.4H944H943V156.1H942V155.2H941V155.3H940V157.2H939V155.5H938V157.1H937V155.4H936V156H935V155.1H934V155.3H933V155.4H932H931H930V155.3H929H928V155.1H927V155.5H926H925V155.4H924V155.1H923V155.5H922V155.2H921V155.1H920V155.4H919V155.2H918H917V155.3H916H915V155.3H914V155.4H913V155.2H912H911V155.4H910H909V156H908V155.4H907V155.3H906H905V155.2H904V155.3H903V155.5H902V156.3H901V155.4H900H899V155.5H898V155.3H897V157H896V155.2H895V155.3H894V155.4H893V155.1H892V155.4H891V155.3H890V155.2H889V155.4H888H887H886V155.3H885H884V155.2H883V156.7H882V155.4H881V155.1H880V155.4H879H878V155.2H877H876V155.6H875V155.2H874V155.4H873H872V157H871V155.2H870V155.3H869V155.4H868V155.3H867V155.4H866H865H864V155.6H863V155.5H862V155.4H861H860V155.4H859V155.2H858V155.5H857V155.3H856V155.6H855V155.8H854V155.3H853H852H851H850H849V155.8H848V155.3H847V155.2H846V155.3H845V155.6H844H843V155.2H842H841V155.4H840V155.3H839V155.4H838V155.5H837V155.4H836V155.3H835H834V155.1H833V155.2H832V155.3H831V155.2H830V155.4H829V156.8H828V155.2H827V157H826V156.7H825V156.6H824V156.8H823V155.2H822V155.5H821V155.2H820V156.4H819V156.1H818V155.1H817V155.3H816V155.3H815V155.4H814V156.4H813V155.3H812H811V155.4H810V156.7H809V155.4H808V157.2H807V155.2H806V155.4H805V155.3H804V155.5H803V155.3H802V155.4H801V155.3H800V156.2H799V155.2H798V155.6H797V155.1H796V155.3H795V155.1H794V155.4H793H792H791V155.2H790V155.1H789V156.9H788V155.2H787V155.4H786V155.2H785V155.3H784V156.1H783V155.4H782V155.5H781V155.4H780H779H778V156H777V155.2H776V155.4H775V155.1H774V155.9H773V155.4H772V155.5H771V155.4H770V155.5H769V155.4H768V155.1H767V156.4H766V155.1H765V155.5H764V155.3H763V155.4H762V155.1H761V155.3H760V155.5H759V155.3H758V155.2H757V155.3H756V155.4H755V155.6H754V155.4H753V155.2H752V155.3H751V155.5H750V155.4H749V155.5H748V155.1H747V155.2H746V155.5H745V155.4H744V155.2H743V155.3H742H741V157.2H740H739H738V155.1H737V156.8H736V155.3H735V155.5H734V155.3H733V155.5H732V155.2H731V155.3H730V155.3H729V155.1H728V155.5H727V155.9H726V156H725V155.3H724H723V155.2H722H721H720V155.3H719H718V155.2H717V155.5H716V155.9H715V155.4H714V155.4H713H712V155.7H711V155.4H710V155.3H709V155.2H708V155.4H707V155.5H706V156H705V155.2H704V155.3H703V155.2H702V155.3H701V155.1H700H699V155.3H698V155.1H697V155.3H696H695V155.2H694V155.4H693V155.2H692V155.3H691V155.2H690V155.5H689V155.2H688V156.5H687V155.4H686V155.3H685H684H683V155.3H682V155.5H681V155.2H680V155.5H679V155.4H678H677H676V156.7H675V155.5H674V155.9H673H672V155.4H671V155.3H670H669V155.2H668H667V156.8H666V155.2H665V155.4H664V155.3H663H662V155.3H661V155.4H660V155.3H659H658V155.4H657H656V155.5H655V155.4H654V155.2H653V156H652V155.4H651V156.9H650V156.1H649V155.2H648V155.4H647V155.5H646H645V155.9H644V155.4H643V155.2H642V155.3H641V155.2H640V155.5H639V155.2H638V157.1H637V155.1H636V157.3H635V155.1H634V155.5H633V155.4H632H631V155.1H630V155.5H629V155.2H628V155.5H627V155.3H626V155.4H625V155.2H624V155.5H623H622H621H620V155.3H619V155.2H618H617V155.5H616V156.5H615V155.6H614V155.1H613V155.3H612V155.8H611V155.4H610V155.1H609H608V155.3H607V156.2H606V155.4H605V155.3H604H603V155.1H602V155.3H601H600H599H598H597V155.5H596V155.2H595H594V155.1H593V155.3H592V155.3H591V155.2H590H589H588V155.4H587V155.4H586V156.1H585V155.4H584V155.1H583V155.4H582V155.3H581V155.4H580V155.2H579V156.6H578V155.2H577V155.4H576V155.6H575V155.3H574H573V155.5H572V155.4H571V155.3H570H569H568H567H566V155.5H565V155.3H564V155.2H563V155.5H562H561V155.2H560V155.5H559V156.8H558V155.3H557V155.2H556V155.3H555V157H554V155.3H553V155.4H552V155.2H551V155.3H550V155.5H549V156.7H548V156H547V155.4H546H545V155.4H544V156.9Z" fill="#8c0048"/>
<rect x="17" y="149.3" width="1253" height="4.2" fill="#ff0a84"/>
</g>
<g id="c1">
<path d="M17 64.7H18V64.8H19V63.8H20V64.7H21V63.9H22V65.1H23V63.6H24V65.1H25H26V64.9H27V64.7H28H29V64.9H30V63.8H31V65.1H32V64.8H33V65H34V64H35V64.7H36V64.8H37V65.1H38V64.9H39V65.1H40V64.7H41V64.9H42V65H43H44H45V65H46V64.9H47V64.8H48V64.7H49H50V64.6H51H52V64.9H53V64.7H54V64.5H55V65H56V63.6H57V64.7H58V65.1H59V65.2H60V64.7H61V64.8H62V64.5H63V64.9H64V63.4H65V64.8H66V65.1H67H68V64.6H69H70V64.8H71V64.2H72V65H73V65.1H74V64.9H75V65.2H76V65H77V64.7H78V65.1H79V64.9H80H81V64.8H82V64.7H83V64.2H84V64.7H85V64.8H86V65.1H87V65.2H88H89V65H90V64.6H91V63.7H92V63.6H93V65.1H94V63.4H95V65.2H96V64.8H97V64.9H98V64.9H99V64.7H100V64.9H101V63.4H102V64.8H103V65.1H104V64.8H105V65.1H106V64.9H107V65H108V65.2H109H110V64.7H111V64.4H112V64.8H113V63.9H114V65.2H115V64.9H116H117V64H118V65.1H119V65H120V64.6H121V65H122V64.7H123V64.9H124V65.1H125V64.9H126V64.6H127H128V64.4H129V64.8H130V65H131V63.6H132V63.6H133V64.4H134V64.9H135V64.9H136V64.9H137V65H138V64.7H139V65.1H140V65.2H141V64.9H142V64.8H143V64H144V65.2H145H146V64.7H147V65.2H148V64.9H149V65H150V63.6H151V65.1H152V65H153V65.1H154V64.8H155H156V64.8H157V64.5H158V64.2H159H160V64.9H161H162V65H163V64.6H164H165V65H166V63.8H167V63.2H168V65H169V64.8H170V65.1H171V64.8H172V65.1H173V64.8H174V64.9H175V65H176V64.6H177V64.9H178V65H179V64.3H180V64.7H181V64.1H182V64.8H183H184H185V65H186V64.7H187V64.8H188V64.9H189H190V65.1H191V64.7H192V65H193V64.7H194V64.5H195V64.9H196V65H197V64.9H198V64.9H199V64.6H200V64.4H201V64.9H202V65.2H203V64.7H204V65H205V65.1H206V65.1H207V63.9H208V64.6H209V64.8H210V64.7H211H212H213V64.9H214H215V64.7H216V64.8H217V65.2H218V64.9H219V65.1H220V65H221V64.7H222V64.8H223V64.7H224V64.8H225V63.9H226V65H227V63.3H228V64.8H229V64.9H230V65.2H231V65.1H232V64.9H233V64.8H234V64.7H235H236V64.7H237V65.1H238H239V64.6H240V64.8H241V65H242V65.1H243V64.8H244V64.6H245V65.1H246V64.9H247V63.7H248V64.7H249V63.6H250V65.1H251V65.2H252V63.4H253V65.2H254V65H255V64.8H256V64.1H257V64.9H258H259V65.1H260V64.9H261H262V64.8H263V64.8H264V63.7H265V64.9H266V64H267V65.1H268V64.6H269H270V65.1H271V63.9H272V64.6H273V64.8H274V64.9H275V65.1H276V65H277V63.4H278V64H279V65.1H280H281H282V65.1H283V64H284V63.8H285V64.8H286V65H287V64.9H288V64.8H289V63.4H290V65.1H291V64.1H292V64.7H293V65.1H294V64.7H295V64.9H296V64.7H297V64.9H298V65.2H299V64.8H300V64.9H301V64.7H302V64.8H303V64.4H304V64.7H305V65.1H306H307V64.9H308V64.7H309V64.7H310V65.1H311V63.9H312V64.6H313V64.9H314V64.7H315V64.9H316V64.6H317V64H318V64.6H319V64.9H320V63.3H321V64.6H322V64.7H323H324V65H325V64.3H326V65.1H327V64.8H328V65.1H329V64.8H330H331V65.1H332V65H333V63.5H334V64.1H335V64.9H336V65.1H337V63.6H338V63.8H339V64.9H340V65.1H341V64.8H342V64.7H343V64.4H344V63.3H345V65.2H346V64.9H347V65.1H348V63.7H349V64.8H350V63.6H351V64.8H352V65H353V63.5H354V63.7H355V64.9H356V65.2H357V64.8H358V64.6H359H360V65H361V64.2H362V65.2H363V65.1H364V65.2H365V65H366H367V64.9H368V64.8H369V65.1H370V64.4H371V64.8H372V63.6H373V64.8H374V64.9H375V64.8H376V64.9H377V64.7H378V64.8H379V63.6H380V64.9H381V65H382H383H384H385V65H386V64.8H387V65.2H388V65H389H390V64.7H391H392V64.8H393V64.6H394V64.8H395V65.1H396V64.7H397V64.6H398H399V64.8H400V65H401V64.8H402V65H403H404V64.6H405V64.8H406V65.1H407V63.4H408V65.2H409V64.8H410V65H411V63.3H412V64.9H413V64.8H414V63.2H415V65.1H416H417V65H418V64.8H419V65.1H420V64.7H421V65.1H422V64.9H423V64.8H424V63.6H425V63.9H426V64.8H427V65.1H428V65.1H429V64.9H430V64.7H431V64.1H432V65.1H433V64.8H434V65.2H435V64.9H436V64.7H437V64.7H438V64.9H439V64.6H440V65.1H441V64.9H442V64.8H443V64.9H444V63.8H445V64.9H446H447V65.1H448V64H449V65H450V64.8H451H452V64.4H453V64.7H454V63.4H455V64.3H456V64.7H457V65H458H459V64.6H460V65H461V64.7H462H463V65H464H465V64.6H466V65.2H467V63.9H468V64.8H469V65.1H470V64.4H471V65H472V64.6H473V65H474H475V64.2H476V65.2H477V65H478V64.7H479V64.5H480V64.8H481V63.6H482V65.1H483V63.4H484V64.6H485V64.4H486V65.1H487V64.9H488V63.5H489V64.9H490V64.8H491V65H492H493V64.8H494V64.7H495V64.9H496V64.8H497V65.1H498V64.6H499V63.6H500V65.1H501V64.8H502H503H504V64.9H505V64.7H506V65.2H507V65.1H508V64.8H509H510V64.6H511V65.1H512H513V64.7H514V65H515V65.1H516V65H517V64.9H518V65.2H519V63.9H520V64.7H521V64.9H522V65.2H523V64.7H524V64.9H525V65.1H526V65.1H527V64.6H528V64.9H529V64.6H530V63.8H531V64.7H532V65H533V65.1H534H535V64.9H536H537H538H539V64.7H540V65H541V63.7H542V64.2H543V65H544V64.7H545V65H546V65.1H547V64.8H548V64.9H549V64.8H550V65H551V64.1H552V64.5H553V63.9H554V64.7H555V65H556V64.9H557V65H558H559H560V65H561V63.4H562V64.7H563V65.1H564V64.6H565V64.8H566V65H567H568H569V64.2H570V64.8H571V64.9H572V64.7H573V64.6H574H575H576V64.8H577V64.6H578V65H579V65.1H580V65H581V64.7H582H583V64.9H584V64.6H585V64.9H586V64.8H587H588H589V64.7H590V64.9H591V63.1H592V65.2H593V64.7H594V65H595H596V64.8H597V64.7H598V65H599V64.7H600H601V64.5H602V65.1H603V64.7H604V64.9H605V65.1H606V64.7H607H608V64.9H609V65H610V65.2H611V64.9H612H613V65H614V64.7H615V63.4H616V64.9H617V64.8H618V64H619V65.2H620V63.7H621V64.8H622V64.6H623V64.7H624V64.8H625V64.1H626V63.4H627V64.9H628V64.2H629V64.8H630V65H631V65.1H632V64.7H633V65H634V63.9H635V64.7H636H637V65H638H639H640V64.7H641V63.9H642V64.9H643V64.6H644V64.8H645V64.7H646H647V65.2H648V65H649H650V65.2H651V65.1H652V64.9H653H654V63.6H655V64.7H656V64.7H657V64.9H658H659V65H660V64.7H661H662V65H663V65.1H664V64.8H665V64.7H666V64.8H667V63.4H668V64.6H669V65H670V64.9H671V65.1H672V64.7H673V65H674V65.2H675V64.9H676V63.7H677V64.9H678H679V65H680H681V64.7H682V65.1H683V64.7H684V64.6H685V64.7H686V65H687V64.7H688V64.9H689V64.3H690V64.6H691V63.2H692V65.1H693V63.8H694V64.7H695V65.2H696V64.9H697V65.1H698V64.6H699V65H700V65H701V64.9H702V65.2H703H704V64.7H705V64.8H706H707V63.4H708V64.8H709V64.7H710V63.6H711V65H712V64.8H713V64.6H714V65H715V64.7H716V64.8H717V65.1H718V64.9H719V64.7H720V65.1H721V64.8H722H723V65.1H724V64.9H725V64.6H726V64.9H727V65.1H728V64.9H729V65.1H730V64H731V64.8H732V65.2H733V65.1H734V64.8H735V65.1H736V64.9H737V65H738V64.8H739V64.9H740V65.1H741V64.3H742V64.9H743V64.7H744V64.5H745V64.7H746H747V65H748V64.2H749V65H750V64.8H751V64.7H752V65H753H754V64.7H755V64.9H756V64.7H757H758V64.6H759V65.2H760V64.7H761V64.9H762V64.7H763V64.9H764V64.8H765V64.7H766V64.9H767V64.7H768V65H769V65.1H770V65H771H772V64.8H773V64.2H774V64.7H775V65.2H776V64.5H777V65.1H778H779V64.7H780V65H781V63.6H782V65.2H783H784H785V64.9H786V64.8H787V64.7H788V65.1H789V64.9H790V64.7H791V65H792V63.5H793V65.1H794V64.9H795V64.7H796V64.8H797V65.1H798V64.7H799V64.9H800V64.7H801V65.2H802H803V64.7H804V65.2H805V65H806V64.4H807V63.8H808V65.2H809V64.6H810V65H811V64.7H812V64.8H813V64.8H814V64.6H815V65.2H816V64.9H817V65.1H818V64.5H819V65H820V64.9H821V63.5H822V63.3H823V64.9H824V63.4H825V64.3H826V64.7H827V64.8H828V63.8H829V64.8H830V65H831V64.5H832V65.1H833V64.8H834V65H835V65.2H836V63.9H837V64.7H838V65.2H839V65.1H840V64.8H841V63.2H842V64.7H843H844V65.1H845V64.8H846V63.7H847V63.9H848V63.5H849V64.9H850V63.4H851V64.7H852H853V65H854V64.5H855V64.8H856V64.7H857V64.6H858V64.9H859V64.8H860V65.1H861V65H862V65.1H863V64.6H864V65H865V64.7H866V64.9H867V65.1H868V65.2H869V65H870V65.2H871V64.7H872V64.6H873V65H874H875V65.1H876V64.7H877V64.1H878V64.8H879V64.7H880H881V64.6H882V64.9H883V65.2H884V64.7H885V63.4H886V64.6H887V64.7H888V65.1H889V65H890H891H892V64.8H893V65.2H894V64.5H895V65H896V64.7H897V65.1H898V64.9H899V65.2H900V64.9H901H902V65H903V64.8H904V64.7H905V64.8H906V64.7H907V64.6H908V65.2H909V64.9H910V65.2H911V65H912V64.8H913V64.7H914V64.6H915V63.1H916V64.7H917V64.9H918V63.2H919V64.7H920V64.9H921V64.8H922V64.1H923V64.7H924V64.2H925V65.1H926V63.8H927V64.8H928V63.9H929V64.9H930V65.1H931V65H932V64.6H933V64.9H934V64.7H935V64.5H936V64.7H937H938V63.7H939V64.8H940V64.7H941V65.1H942V65.1H943V64.9H944V64.8H945V63.9H946V65.1H947V64H948V64.7H949H950V64.1H951V65.1H952V64.6H953V64.9H954V65.1H955V64.9H956H957V64.6H958V63.8H959V65.1H960V65.2H961V65.1H962H963V63.7H964V64.8H965V64.7H966H967V64.8H968V64.2H969V65H970V65.1H971V64.9H972V64.6H973V64.7H974V64.9H975V65H976V65.1H977V64.8H978V64.1H979V65H980V64.9H981V64.8H982V64.9H983V64.6H984V64.8H985V63.5H986V64.6H987V65H988V64.6H989V64.9H990H991V63.6H992V65.2H993V65H994V63.8H995V64.6H996V64.8H997V65.2H998V64.6H999V65.1H1000V65.1H1001V64.8H1002H1003V64.9H1004V63.9H1005V64.7H1006V64.8H1007V64.9H1008H1009V64.6H1010V64.9H1011V65H1012H1013V65.2H1014H1015V64.8H1016V65H1017V64.8H1018V64.8H1019V65H1020V65.1H1021V64.9H1022V64.9H1023H1024V63.6H1025V65.1H1026V63.3H1027V65.2H1028V64.9H1029V64.9H1030V64.5H1031V64.9H1032V65H1033H1034V65.1H1035V65H1036V64.9H1037V65H1038V64.8H1039V64.6H1040V65H1041V65H1042V64.6H1043V65.2H1044V64.6H1045V64.9H1046V63.6H1047V64.8H1048H1049V65.2H1050V65H1051V64.8H1052H1053V63.6H1054V64.8H1055V64.9H1056V65H1057V64.9H1058V65.1H1059V64.9H1060H1061V64.8H1062V64.3H1063V64.7H1064V63.2H1065V65H1066H1067H1068V64.7H1069V65.2H1070V65H1071V64.7H1072V64.9H1073V64.7H1074V64.2H1075V64.2H1076V64.7H1077V64.8H1078V65H1079V64.6H1080V65.2H1081V65H1082H1083V63.9H1084V65.1H1085H1086V65.2H1087V65H1088V64.6H1089V65H1090V64.7H1091V64.9H1092V65.1H1093V65.2H1094V64.8H1095H1096V64.7H1097H1098V65H1099V63.9H1100V64.8H1101V64.7H1102V64.1H1103V64.8H1104V65.1H1105V65H1106V65.1H1107V64.6H1108V64.9H1109V64.7H1110V64.9H1111V64.8H1112V64.7H1113H1114V65.2H1115H1116V64.8H1117V64.4H1118V64.7H1119V64.9H1120V65.2H1121V65H1122V64.7H1123V65H1124V64.8H1125V63.7H1126V64.8H1127V65H1128V64.6H1129V64.9H1130V64.6H1131V64.1H1132V64.6H1133H1134V64.8H1135H1136V64.7H1137V64.9H1138H1139V63.8H1140V65H1141V65.1H1142V65H1143V64.8H1144V64.6H1145H1146V65.1H1147V64.6H1148V63.8H1149V64.6H1150V65.1H1151H1152V64.2H1153V64.8H1154V65.1H1155V65H1156V64.8H1157V64.6H1158V64.8H1159V65.1H1160V65.2H1161V64.7H1162V65.1H1163V65H1164V64.9H1165V65.1H1166V64.6H1167H1168V64.7H1169V64.9H1170V64.7H1171H1172V64.8H1173V65H1174V64.6H1175V64.3H1176V65.2H1177V64.6H1178H1179V65.1H1180V64.7H1181V63.7H1182V65.1H1183V64.6H1184V64.8H1185H1186V64.9H1187H1188V63.9H1189V64.6H1190V63.6H1191V64.8H1192H1193V65.1H1194V64.6H1195V64.8H1196V65H1197H1198V64H1199V65.2H1200V64.9H1201V64.8H1202V65.1H1203V64.7H1204V64.9H1205V63.2H1206V65H1207V65.1H1208V64H1209V64.9H1210V64.8H1211V64.7H1212V64.2H1213V65.1H1214V64.4H1215V64H1216V65.1H1217V64.6H1218V65.2H1219H1220V64.8H1221V63.5H1222V64.8H1223V65.1H1224V64.2H1225V64.6H1226V65H1227V64.3H1228V64.9H1229V65.2H1230V64.8H1231V64.7H1232V65.1H1233V65H1234V64.6H1235V65.1H1236V65.2H1237H1238V63.5H1239V64.3H1240V64.6H1241V65.2H1242H1243V64.8H1244V65.2H1245V64.8H1246V64.9H1247V63.4H1248V64.6H1249V64.8H1250V64.3H1251V64.8H1252V64.6H1253V64.8H1254V64.7H1255V65.1H1256V64.9H1257V63.5H1258V65.1H1259V64.7H1260V63.7H1261V65.1H1262H1263H1264V64.8H1265V65.1H1266V65H1267V65.1H1268V65H1269V64.9H1270V65.2V72H1269V72.4H1268V72.1H1267V72.5H1266H1265V72.3H1264V72.2H1263H1262V72.4H1261H1260H1259H1258V72.2H1257H1256V72.5H1255H1254V72.2H1253V72.3H1252V72.4H1251H1250V72.1H1249V72.3H1248V72.2H1247V72.3H1246H1245V72.2H1244V72.4H1243V72.5H1242V72.5H1241V73.5H1240V72.1H1239V72.2H1238V72.2H1237V74H1236V72.3H1235V73.8H1234V72.9H1233V73.2H1232V72.1H1231H1230V72.3H1229V72.2H1228V72.6H1227V72.5H1226V73.3H1225V74.1H1224V72.4H1223V72.6H1222V72.3H1221V72.4H1220V72.2H1219V73H1218V72.6H1217V72.4H1216H1215V73.7H1214V72.6H1213V72.2H1212V72.1H1211V72.3H1210V73.8H1209V72.1H1208V72.3H1207V73.1H1206V72.6H1205V73.8H1204V72H1203V72.5H1202V72H1201V72.1H1200V74.1H1199V72.1H1198H1197V72.2H1196V72.5H1195V72.3H1194V72.1H1193V72.5H1192V72.1H1191V72H1190V72.5H1189V72.1H1188V72.5H1187V72.3H1186V72H1185H1184V72.4H1183V72.5H1182V72.3H1181V72.9H1180V73.3H1179V72.2H1178H1177V72H1176V72.4H1175H1174V72.2H1173V73.2H1172V72.2H1171V73.1H1170V72.5H1169V72H1168V72.5H1167V72H1166H1165V72.4H1164V72.5H1163V72.3H1162V72.3H1161V72.5H1160H1159V73.6H1158V72.1H1157V72.5H1156V72.8H1155V72.3H1154V73.2H1153V73.8H1152V72.3H1151V73.2H1150V72.4H1149V72.8H1148V72.6H1147V72.4H1146V72H1145V72.1H1144V72.4H1143V72.5H1142V72.3H1141V72.4H1140V72.1H1139V72.3H1138V73.5H1137V72.4H1136V72.8H1135V72.6H1134V72.2H1133V72.3H1132V72.4H1131V72.1H1130V72.5H1129V72.3H1128V72.2H1127V72.5H1126V72.1H1125V72.2H1124V72.5H1123V72.1H1122H1121V72.3H1120H1119V73.3H1118V72.3H1117V72.8H1116V72H1115V72.6H1114V72.1H1113H1112V73.1H1111V72.1H1110V72.5H1109V72.1H1108V72.4H1107H1106V72.2H1105V72.6H1104V72.2H1103V72.5H1102V72.2H1101V72.4H1100H1099V74H1098V72.3H1097V72.2H1096H1095V72.6H1094V72.4H1093V72.2H1092V73.4H1091V72.4H1090V72.1H1089V72.5H1088V73.4H1087V72.3H1086H1085H1084V72.1H1083V72.3H1082V73.6H1081V72.6H1080V72.5H1079V72.2H1078V74H1077V72.3H1076V72.2H1075V73.8H1074V72.3H1073V72.5H1072V72.2H1071V72.4H1070H1069V72.1H1068V72.5H1067H1066H1065V72.2H1064V73H1063V72.6H1062V72.5H1061V72.5H1060H1059V72.2H1058V72.1H1057V72.5H1056V72.6H1055V73.5H1054V72.4H1053V72.3H1052V72.2H1051V72.8H1050V72.9H1049V72.5H1048V72.4H1047V72.1H1046V72.5H1045V72.2H1044V72.4H1043V72.2H1042V73.6H1041V72.5H1040V72.4H1039V72.6H1038V72.3H1037V73.4H1036V72.1H1035V72.3H1034V72.5H1033V72.1H1032H1031V72H1030V73H1029V72.4H1028V72.6H1027V73.8H1026V72.2H1025H1024V72.5H1023V72H1022V72.2H1021V72.1H1020V72.5H1019V72.3H1018V72H1017V72.6H1016V72.2H1015H1014V72.5H1013H1012V73.4H1011V72.1H1010V72.7H1009H1008V72.4H1007V72.3H1006V72.5H1005V72.2H1004V72.1H1003V72.7H1002V73H1001V72.2H1000V73.5H999V73.2H998V72.5H997V72.3H996V72.5H995V72.7H994V72.3H993V73.7H992V72.1H991V72.2H990V72.5H989H988V72.3H987V72.9H986V72.1H985H984V72.5H983V72.4H982V72H981V73.4H980V72.4H979V72H978V72.6H977V72.2H976H975H974V72.4H973V72.6H972H971H970V72.1H969V72H968V72.4H967V72.5H966V72.2H965V72.5H964V73.9H963V72.3H962V72.4H961V72.3H960H959V72.3H958V72H957V72.6H956H955V72.2H954V72.3H953V73.4H952V72.4H951H950V72.2H949V72.5H948V72.3H947V72H946H945V72.2H944V72.6H943V72H942V72.4H941V72.2H940V72H939V73.6H938V72.4H937V72.5H936V72.4H935V72H934V72.1H933H932V72.4H931H930V72.2H929V72.6H928V72.1H927H926V72.5H925V72.3H924V72.8H923V72.2H922V73H921V72.5H920V72.4H919V72.6H918V72.8H917V73H916V72H915V72.5H914V72.1H913V73.7H912V73.7H911V72.4H910V72.5H909V72H908V72.5H907V72.3H906V72.1H905V72.3H904V72.5H903V73.3H902V72.4H901V73.2H900V72.7H899V72.4H898H897V72.9H896V72.5H895V72.2H894V73.2H893V72.1H892V72.5H891H890V72.2H889V72.5H888V72.4H887V72.1H886V72.3H885H884V72.1H883V72H882V72.5H881V72H880V72.4H879V72.5H878V72H877H876V72.6H875H874V72.1H873V72.4H872V72.6H871H870V72.7H869V72.4H868V72.1H867V72.4H866V72.5H865V72H864V73.1H863V72.5H862V72.3H861V72.2H860V72.4H859V72.3H858V72H857V72.2H856V72.5H855V72.4H854V72.5H853V72.3H852V72.6H851V72.5H850V72.5H849V72.2H848V72.4H847H846H845V73.6H844V73H843V72.3H842V72.6H841V72.4H840V72.5H839H838V72.2H837V73.7H836V73.4H835V74H834V72.2H833V72.5H832V72.4H831V72.2H830V72.5H829V72.6H828V72.1H827V72.5H826V72.5H825V72.5H824V72.2H823V74.1H822V72.5H821V72.2H820V72.4H819V72.5H818V73.9H817V72.5H816V72.5H815V72.4H814V72.2H813V72.3H812V72.6H811V72.3H810V72.2H809H808V72.4H807V72.6H806V73.1H805V72.5H804V72.4H803V72.5H802V72.4H801V72.5H800V72.5H799V73.5H798V72.6H797H796V73.1H795V73.8H794V72.1H793V72.3H792H791V72.4H790V72.7H789V73.2H788V72.4H787V72H786V72.2H785V72.5H784V72.2H783V72.6H782V72.3H781V73.6H780V72.1H779V72.2H778V72.5H777V72.4H776V72.4H775H774V72.2H773V72.5H772V72.4H771V72.3H770V72.1H769V72.2H768H767V72.2H766V72.4H765H764V72.1H763V72.6H762V72.2H761V73.6H760V72.5H759V72.1H758H757H756V72.5H755V72.1H754V72.5H753V72.3H752V73.5H751V72.2H750H749V73.7H748V72.1H747V72.3H746H745V72.5H744V72.1H743V72.3H742V72.6H741V72.3H740V72.1H739V72.7H738V73H737V72.3H736V72.2H735V73.2H734V72.5H733V72.3H732V72.6H731V73.3H730V72.2H729H728V72.4H727H726V72.6H725V72H724V72.5H723V72.4H722V72.4H721V72.2H720V72.8H719V72.6H718V72.4H717V74H716V72.3H715V72.1H714V73.2H713V72.4H712V72.5H711V73.4H710V72.1H709V72.5H708H707V72.5H706V72.3H705V72H704V72.6H703V72.5H702H701H700H699V72.4H698V72.6H697V72.5H696V72.4H695V72.5H694V72.2H693V72.4H692V72.2H691V72.4H690V72.3H689V72.4H688V72.3H687V73.4H686V72.6H685V73.5H684V72.2H683V73.2H682V72.4H681V72.2H680V72.4H679V73.7H678V72H677H676V72H675V73.6H674V72H673V72.4H672V72.2H671V72.3H670V72.6H669V73.6H668V72.3H667V72.5H666V72.3H665V72.5H664V72.1H663V72.3H662H661V72.2H660V72.5H659V72.1H658H657V72.5H656V73H655V72.5H654V72.2H653V72H652V72.9H651V72.5H650V72.3H649V72.5H648V74.1H647V72.5H646V72.4H645V72.5H644V72.4H643V72.8H642V72.4H641V72.5H640H639V72.1H638H637V72.5H636V72.4H635V72.6H634V72.4H633H632H631H630V72.3H629V72.6H628V72.3H627V72.4H626V72.3H625V72.2H624V72.1H623V73H622V72H621V72.5H620V72.2H619V73.3H618V72.4H617V72.9H616V72.3H615H614H613V72.8H612V72.3H611V73.1H610V72.4H609V72.2H608V72.3H607V72.3H606V73.2H605V72.3H604V72.5H603V72.1H602V72.4H601V72H600V72.2H599V72.6H598V72.4H597H596V72.2H595V73.2H594V72.5H593V72.3H592V72.1H591H590V72.5H589V72.1H588V72.5H587V73.6H586V72.9H585V72.4H584V73.4H583V72.3H582V72.2H581V72.1H580V72.4H579V72H578V72.1H577V72.5H576V72.4H575V73.3H574V72.1H573V72.4H572V72.7H571V72.7H570V72.2H569V72.7H568V72H567V72.6H566V72.1H565V72.4H564V72.1H563V72.4H562V72.7H561V72.2H560V73.7H559V72.3H558V73.8H557V72.7H556V72.5H555V72.2H554V72.1H553V72.4H552V73.5H551V72.2H550V72.2H549V72.6H548V72.2H547V73.5H546V72.1H545V73.2H544V72.4H543V72.3H542H541V72.5H540H539V74H538V72.2H537V72.5H536H535V72.3H534V72.2H533V72.6H532V72.2H531V72H530V72.5H529V72.6H528V72.3H527H526H525V72.4H524V72.3H523V72.1H522V72.1H521V73.9H520V73.1H519V72.2H518V72.5H517V72.2H516V72.1H515H514V72.6H513V72.5H512V72.1H511V72.5H510V72.2H509V72.3H508V72.1H507V72.3H506V72H505V72.3H504V72.6H503V73.4H502V72.2H501V72.5H500V72.1H499V72.6H498V72.4H497V72H496V72.6H495V72.5H494V72.4H493V72.3H492V72.4H491V72.2H490V72.3H489V72.5H488V72.6H487V72H486V72.6H485V73.3H484V72.6H483V72.1H482V72.5H481V72.4H480V72.6H479V72.3H478V72.5H477V72.2H476V73.7H475V72.3H474V72.5H473V73.3H472V72.3H471V73.8H470V72.5H469V72.4H468V72.6H467V73.5H466V72.4H465V72.6H464V72H463V72.5H462V72.3H461V73H460V73.4H459V72.7H458V72.1H457V72.2H456V72.5H455V72.4H454V72.1H453V72.4H452V72.1H451V72.5H450V72.1H449H448V72.4H447V72.1H446V72.2H445V72.4H444V72.2H443V72.2H442H441V72.3H440V72.2H439V72.3H438V72.5H437V72.6H436V72.5H435V72.4H434V73.6H433V72.2H432V72.5H431V72.3H430V73.3H429V72H428H427V72.3H426V72.6H425H424V72.9H423V72.1H422V72.3H421V72.5H420V72H419V72.1H418H417V73.4H416V72.1H415V72.7H414V73H413V73.7H412V72H411V72.4H410V72.3H409V72.4H408H407V73.9H406V72.4H405H404V72.1H403H402V72.5H401H400V72H399H398V72.2H397V72H396V72.4H395V72.3H394V72.6H393V72.2H392V72.5H391V72.3H390V72.1H389V74H388V73.6H387V72.3H386V72.6H385V72.2H384V72.3H383V72.1H382V72.4H381V72.2H380V72.5H379V72.2H378V72.5H377V72.4H376V72.2H375V72.1H374V72.6H373V72.5H372V72.1H371V72.4H370V72.1H369V72.4H368H367V74H366V72.3H365V72.1H364V72.3H363V72.1H362V72.4H361V73.5H360V72.9H359V72.2H358V72.3H357V72.6H356V72H355V73.8H354V72.6H353V72.2H352V72H351V72.3H350V72.4H349H348V72.3H347V72.5H346V72.2H345V72.7H344V72.1H343V72.6H342V72.2H341V72H340V72.6H339V73.1H338V73.7H337V72.5H336V72.6H335V72.3H334H333H332H331V72.4H330H329V72.2H328V72.2H327V72.4H326V72.3H325V72.5H324V72H323V72.1H322V72.3H321V73.7H320V72H319V72.4H318V72.1H317V72.2H316V73.2H315V72.1H314V72.2H313H312V72.3H311V73.5H310V73.4H309V72.4H308V72.5H307V73H306V72.1H305H304V72.2H303V72.4H302V72H301H300H299V72.5H298V72.5H297V72.6H296H295V73.9H294V73.3H293V72.9H292V73.9H291V72.3H290H289V72.4H288V72.3H287V72.5H286V72.3H285V72.1H284V72.2H283V72.6H282V72.2H281V72.4H280V72.2H279V72.1H278V73.8H277V72.6H276V72.5H275V72.6H274V72.5H273V72.5H272V72.3H271V72.5H270V72.2H269V72.4H268V72.5H267V72.4H266V72.6H265V73.4H264V73.1H263V72.2H262V73.6H261V73.7H260V72.1H259V72.2H258V73.5H257V72.1H256V72.3H255V72.1H254H253V73.8H252V72.4H251V72.5H250V72.8H249H248V72.5H247V72.2H246V72.5H245V72.2H244V73.9H243V72.6H242H241V72.1H240V72.6H239V72.1H238V74H237V73.1H236V73.4H235V72.9H234V72.6H233V72.5H232V73.4H231V72.4H230V72.8H229V72.3H228V72.3H227V72.1H226V72.2H225V72.7H224V72.4H223V72.3H222V72.4H221V72.1H220H219V72.6H218V72.1H217H216V72.4H215V72.6H214V72.5H213V72.4H212H211V72.3H210V72.5H209V72.1H208V72.4H207V73.2H206V72.4H205V72.3H204V72H203V72.2H202V72.6H201V72.3H200V72.6H199V72.3H198V72.4H197V72.2H196V72.1H195V73.6H194V72.2H193V73.5H192V72.3H191V72.1H190V72.3H189H188V72.4H187H186V72.3H185V72.4H184V73.6H183V72.9H182V72.2H181V72.5H180H179V72.6H178V72.5H177H176H175V72.2H174V72.4H173V72H172V72.2H171V72.6H170V72.4H169H168V72.1H167V72.4H166V72.5H165V72.4H164V72H163V72.8H162V72.2H161V72.1H160V72.6H159V73.2H158V72.3H157V72.6H156V72.1H155V72.5H154V72.6H153V72.4H152V72.3H151V72.1H150V72.5H149V72.3H148V72.1H147H146V72.3H145V72.5H144V72.2H143H142H141V73.9H140V72.4H139V73.2H138V72.3H137V72.4H136H135V72.1H134V72.4H133V72.1H132V72.1H131V72H130V72.9H129V72.1H128V73H127V72.5H126V72.4H125V72.3H124H123V72H122V72.3H121H120H119V72.5H118H117V72.1H116V72.4H115V73.2H114V72.3H113V72H112V72.6H111V72.2H110V72.5H109V72.2H108H107V74H106V72.4H105V72.3H104H103V72.4H102V72.2H101V73.3H100V72.4H99V72.2H98H97V72.5H96H95V74.1H94V72.6H93V72.3H92V73.6H91V72.1H90V72.7H89V72.3H88H87V72.9H86V72.4H85V72.2H84V72H83V73.3H82V72.5H81V73.2H80V72.5H79V72.3H78V72.1H77V73.3H76V72H75H74V73.6H73V72.2H72H71V72.5H70H69V73.9H68V72H67H66V72.5H65V72H64V72.5H63V72.2H62V72.5H61V72.3H60V72.4H59V72.2H58V72.4H57V72.5H56V72.2H55V72.1H54H53H52H51V73.3H50V72.3H49H48V72.1H47V72.6H46V72.2H45V72.4H44V72.6H43V72.1H42V72.3H41V72.1H40V72.5H39V72.6H38V72.4H37V72.6H36V73H35V72.4H34V73.7H33V72.3H32V72.7H31V72.1H30V72.5H29V72.6H28V72.4H27V73H26V72.4H25V72.1H24V72.4H23V72.5H22V72.4H21V72.5H20V72.1H19V72.2H18V72.5H17V72.2Z" fill="#6f6b00"/>
<rect x="17" y="66.5" width="1253" height="4.2" fill="#b4ae00"/>
</g>
<text x="3.9" y="121" font-size="9.7" fill="#b4ae00" textLength="10.6" lengthAdjust="spacingAndGlyphs">C1</text>
<path d="M7 123 H15.5 L17.5 124.3 V125 H8 V126 H7 Z" fill="#b4ae00"/>
<text x="3.9" y="206" font-size="9.7" fill="#ff1493" textLength="10.6" lengthAdjust="spacingAndGlyphs">C2</text>
<path d="M7 208 H15.5 L17.5 209.3 V210 H8 V211 H7 Z" fill="#ff1493"/>
<text x="3.9" y="292" font-size="9.7" fill="#1414ff" textLength="10.6" lengthAdjust="spacingAndGlyphs">C3</text>
<path d="M7 294 H15.5 L17.5 295.3 V296 H8 V297 H7 Z" fill="#1414ff"/>
<text x="3.9" y="377" font-size="9.7" fill="#22e000" textLength="10.6" lengthAdjust="spacingAndGlyphs">C4</text>
<path d="M7 379 H15.5 L17.5 380.3 V381 H8 V382 H7 Z" fill="#22e000"/>
<text x="3.9" y="463" font-size="9.7" fill="#a9b5a9" textLength="10.6" lengthAdjust="spacingAndGlyphs">C5</text>
<path d="M7 465 H15.5 L17.5 466.3 V467 H8 V468 H7 Z" fill="#a9b5a9"/>
<text x="3.9" y="548" font-size="9.7" fill="#ee1010" textLength="10.6" lengthAdjust="spacingAndGlyphs">C6</text>
<path d="M7 550 H15.5 L17.5 551.3 V552 H8 V553 H7 Z" fill="#ee1010"/>
<text x="3.9" y="634" font-size="9.7" fill="#8a2be2" textLength="10.6" lengthAdjust="spacingAndGlyphs">C8</text>
<path d="M7 636 H15.5 L17.5 637.3 V638 H8 V639 H7 Z" fill="#8a2be2"/>
<path d="M1270.3 434.5 L1277 431.4 V437.6 Z" fill="#fff" stroke="#ff0000" stroke-width="1.1"/>
<path d="M506.5 722.5 L510.5 729.8 H502.5 Z" fill="#e81010"/>
<g id="topbar">
<rect x="0" y="0" width="1280" height="34.4" fill="#1b1a18"/>
<text x="26.2" y="21.8" font-size="13.2" fill="#fff" textLength="20.5" lengthAdjust="spacingAndGlyphs">File</text>
<text x="85" y="21.8" font-size="13.2" fill="#fff" textLength="43" lengthAdjust="spacingAndGlyphs">Vertical</text>
<text x="166.2" y="21.8" font-size="13.2" fill="#fff" textLength="55" lengthAdjust="spacingAndGlyphs">Timebase</text>
<text x="260" y="21.8" font-size="13.2" fill="#fff" textLength="38.8" lengthAdjust="spacingAndGlyphs">Trigger</text>
<text x="337" y="21.8" font-size="13.2" fill="#fff" textLength="43" lengthAdjust="spacingAndGlyphs">Display</text>
<text x="418.2" y="21.8" font-size="13.2" fill="#fff" textLength="44.2" lengthAdjust="spacingAndGlyphs">Cursors</text>
<text x="501.2" y="21.8" font-size="13.2" fill="#fff" textLength="49.2" lengthAdjust="spacingAndGlyphs">Measure</text>
<text x="589.2" y="21.8" font-size="13.2" fill="#fff" textLength="28.2" lengthAdjust="spacingAndGlyphs">Math</text>
<text x="656.2" y="21.8" font-size="13.2" fill="#fff" textLength="49.2" lengthAdjust="spacingAndGlyphs">Analysis</text>
<text x="743.8" y="21.8" font-size="13.2" fill="#fff" textLength="42.5" lengthAdjust="spacingAndGlyphs">Utilities</text>
<text x="825.5" y="21.8" font-size="13.2" fill="#fff" textLength="44" lengthAdjust="spacingAndGlyphs">Support</text>
<rect x="58.5" y="7.5" width="1.4" height="19" fill="#464646"/>
<rect x="139.3" y="7.5" width="1.4" height="19" fill="#464646"/>
<rect x="233.1" y="7.5" width="1.4" height="19" fill="#464646"/>
<rect x="310.1" y="7.5" width="1.4" height="19" fill="#464646"/>
<rect x="391.8" y="7.5" width="1.4" height="19" fill="#464646"/>
<rect x="474.3" y="7.5" width="1.4" height="19" fill="#464646"/>
<rect x="562.3" y="7.5" width="1.4" height="19" fill="#464646"/>
<rect x="630" y="7.5" width="1.4" height="19" fill="#464646"/>
<rect x="717.5" y="7.5" width="1.4" height="19" fill="#464646"/>
<rect x="798" y="7.5" width="1.4" height="19" fill="#464646"/>
<rect x="881.3" y="7.5" width="1.4" height="19" fill="#464646"/>
<rect x="8.3" y="11.5" width="9.6" height="11.6" rx="1.6" fill="none" stroke="#d6d6d6" stroke-width="1.6"/><rect x="10.6" y="9" width="5" height="3.4" rx="0.8" fill="#d6d6d6"/><rect x="10.4" y="14.2" width="5.6" height="5.2" fill="#8c8c8c"/><path d="M10.4 15.6h5.6" stroke="#d6d6d6" stroke-width="0.9"/>
<path d="M72.5 9.6l4.1 4.8h-2.4v4.2h2.4l-4.1 4.8l-4.1-4.8h2.4v-4.2h-2.4z" fill="#f2f2f2"/>
<path d="M147.3 17.5l4.8-4v2.5h4v-2.5l4.8 4l-4.8 4v-2.5h-4v2.5z" fill="#c8c8c8"/>
<path d="M246.6 11h1.7v11.6h-1.7zM248.3 11l3.4 1.4v3.6l-3.4-0.4z" fill="#bdbdbd"/>
<rect x="319.2" y="12.7" width="12.2" height="9" rx="1.5" fill="none" stroke="#d6d6d6" stroke-width="1.5"/><path d="M321.6 19.6l2.4-2.8 1.8 1.4 1.9-2.2 1.6 3.6z" fill="#d6d6d6"/>
<path d="M411.2 12.6l-1 6.4-1.8-1.8-4.6 4.6-2.2-2.2 4.6-4.6-1.8-1.8z" fill="#d6d6d6"/>
<rect x="485.2" y="10.6" width="7.8" height="12" rx="1" fill="none" stroke="#b4b4b4" stroke-width="1.4"/><path d="M487 13.2h2.6M487 15.4h4M487 17.6h2.6M487 19.8h4" stroke="#b4b4b4" stroke-width="0.9"/>
<rect x="571" y="11.4" width="11.2" height="11.6" rx="1.6" fill="#d6d6d6"/><rect x="573" y="13.2" width="7.2" height="2.4" fill="#1b1a18"/><path d="M573 17.6h1.8M575.7 17.6h1.8M578.4 17.6h1.8M573 20.2h1.8M575.7 20.2h1.8M578.4 20.2h1.8" stroke="#1b1a18" stroke-width="1.4"/>
<path d="M637.4 12.4V22.2H650" fill="none" stroke="#d6d6d6" stroke-width="1.3"/><path d="M637.5 19l3.4-3.6 2.6 2.2 4-4" fill="none" stroke="#d6d6d6" stroke-width="1.6"/><path d="M645.4 13h4.4v4.4z" fill="#d6d6d6"/>
<path d="M727.4 12.6l9.2 9.2" stroke="#d6d6d6" stroke-width="2.2" stroke-linecap="round"/><path d="M735.8 13.2l-8.6 8.6" stroke="#d6d6d6" stroke-width="2.4" stroke-linecap="round"/><circle cx="736" cy="13" r="2.5" fill="#d6d6d6"/><path d="M736 13l2.4-2.4" stroke="#1b1a18" stroke-width="1.4"/><path d="M726.2 11.4l2.4 0.6-1.8 1.8z" fill="#d6d6d6"/>
<circle cx="812.8" cy="17" r="6" fill="#d6d6d6"/><rect x="811.9" y="16" width="1.9" height="4.6" fill="#1b1a18"/><rect x="811.9" y="12.8" width="1.9" height="1.9" fill="#1b1a18"/>
<rect x="1078.8" y="0" width="31.2" height="31" fill="#686868"/><rect x="1078.8" y="0" width="31.2" height="2.2" fill="#4c4c4c"/><rect x="1081.6" y="5.6" width="26.6" height="20.2" fill="#555"/><rect x="1082.7" y="6.6" width="24.6" height="18.3" fill="#000"/><rect x="1084.6" y="9" width="20.8" height="13.6" fill="none" stroke="#0a9a9a" stroke-width="0.9"/><path d="M1084.6 15.8h20.8M1095 9v13.6" stroke="#0aa8a8" stroke-width="0.9"/><path d="M1090 14.6v2.4M1100 14.6v2.4M1093.8 12.2h2.4M1093.8 19.4h2.4" stroke="#0aa8a8" stroke-width="1"/>
<rect x="1110.7" y="0" width="64.2" height="30.6" fill="#232323"/><rect x="1110.7" y="29.6" width="64.2" height="1" fill="#a8a8a8"/><rect x="1110.7" y="24" width="0.9" height="6.6" fill="#a8a8a8"/><path d="M1174.8 20.6v7h-7z" fill="#9a9a9a"/>
<text x="1118.2" y="15" font-size="13.2" fill="#fff" textLength="40.5" lengthAdjust="spacingAndGlyphs">Normal</text>
<text x="1197.5" y="23.8" font-size="13.2" fill="#fff" textLength="45" lengthAdjust="spacingAndGlyphs">Gesture</text>
<rect x="1247.8" y="2.9" width="30.4" height="28.2" fill="#4c4c4c" stroke="#747474" stroke-width="1.8"/>
<text x="1252.5" y="16.2" font-size="10" fill="#fff" textLength="21.3" lengthAdjust="spacingAndGlyphs">Undo</text>
<path d="M1259.8 22.6C1262 19.6,1267 19,1268.6 22C1269.4 24,1268 25.6,1265.8 26" fill="none" stroke="#fff" stroke-width="1.5"/><path d="M1256.6 19.4l0.5 5.8 5.2-1.8z" fill="#fff"/>
</g>
<rect x="21.9" y="32.8" width="129.6" height="28.1" fill="#fff"/>
<text x="23" y="54.7" font-size="23.2" fill="#000" textLength="126.3" lengthAdjust="spacingAndGlyphs">VM: 20V/div.</text>
<rect x="23.6" y="119.1" width="169.4" height="28.1" fill="#fff"/>
<text x="25.3" y="141" font-size="23.2" fill="#000" textLength="165.2" lengthAdjust="spacingAndGlyphs">nSLEEP: 5V/div.</text>
<rect x="22.3" y="207.5" width="166.7" height="28.1" fill="#fff"/>
<text x="22.9" y="229.4" font-size="23.2" fill="#000" textLength="165.5" lengthAdjust="spacingAndGlyphs">nFAULT: 5V/div.</text>
<rect x="19.5" y="282.8" width="159.5" height="28.1" fill="#fff"/>
<text x="21.6" y="304.7" font-size="23.2" fill="#000" textLength="155.2" lengthAdjust="spacingAndGlyphs">OUT1: 20V/div.</text>
<rect x="19" y="472" width="159" height="28.1" fill="#fff"/>
<text x="20.6" y="493.9" font-size="23.2" fill="#000" textLength="155" lengthAdjust="spacingAndGlyphs">OUT2: 20V/div.</text>
<rect x="324.9" y="478" width="166.7" height="28.1" fill="#fff"/>
<text x="326.9" y="499.9" font-size="23.2" fill="#000" textLength="161.7" lengthAdjust="spacingAndGlyphs">IOUT12: 1A/div.</text>
<rect x="20.9" y="624.8" width="171.3" height="28.1" fill="#fff"/>
<text x="22.2" y="646.7" font-size="23.2" fill="#000" textLength="166.3" lengthAdjust="spacingAndGlyphs">OUT34: 20V/div.</text>
<rect x="19" y="703" width="164" height="28.1" fill="#fff"/>
<text x="20" y="724.9" font-size="23.2" fill="#000" textLength="161.6" lengthAdjust="spacingAndGlyphs">IOUT34: 1A/div.</text>
<g id="bottom">
<rect x="4.5" y="732" width="68.5" height="16" fill="#b4ac00"/>
<rect x="4.5" y="748" width="68.5" height="32.5" fill="#404040"/>
<text x="7.5" y="744.7" font-size="13.3" fill="#1a1a00" textLength="15.4" lengthAdjust="spacingAndGlyphs">C1</text>
<rect x="51.2" y="733" width="18.8" height="13.8" rx="2.6" fill="#000"/>
<text x="60.6" y="742.9" font-size="12" fill="#b4ac00" text-anchor="middle" textLength="13.2" lengthAdjust="spacingAndGlyphs">D1</text>
<text x="70.6" y="761.6" font-size="13.2" fill="#fff" text-anchor="end" textLength="38" lengthAdjust="spacingAndGlyphs">20.0 V</text>
<text x="70.6" y="776.4" font-size="13.2" fill="#fff" text-anchor="end" textLength="38" lengthAdjust="spacingAndGlyphs">60.0 V</text>
<rect x="76.2" y="732" width="68.8" height="16" fill="#ff0a84"/>
<rect x="76.2" y="748" width="68.8" height="32.5" fill="#404040"/>
<text x="79.2" y="744.7" font-size="13.3" fill="#30001a" textLength="15.4" lengthAdjust="spacingAndGlyphs">C2</text>
<rect x="123.2" y="733" width="18.8" height="13.8" rx="2.6" fill="#000"/>
<text x="132.6" y="742.9" font-size="12" fill="#ff0a84" text-anchor="middle" textLength="13.2" lengthAdjust="spacingAndGlyphs">D1</text>
<text x="142.6" y="761.6" font-size="13.2" fill="#fff" text-anchor="end" textLength="37" lengthAdjust="spacingAndGlyphs">5.00 V</text>
<text x="142.6" y="776.4" font-size="13.2" fill="#fff" text-anchor="end" textLength="37" lengthAdjust="spacingAndGlyphs">10.0 V</text>
<rect x="147.5" y="731" width="98.5" height="50.5" fill="#1e90ff"/>
<rect x="148.5" y="732" width="96.5" height="16" fill="#0000ff"/>
<rect x="148.5" y="748" width="96.5" height="32.5" fill="#2d4f6e"/>
<text x="151.5" y="744.7" font-size="13.3" fill="#00005a" textLength="15.4" lengthAdjust="spacingAndGlyphs">C3</text>
<rect x="206.2" y="733" width="37.5" height="13.8" rx="2.6" fill="#000"/>
<text x="225" y="742.9" font-size="12" fill="#0000ff" text-anchor="middle" textLength="32" lengthAdjust="spacingAndGlyphs">DC1M</text>
<text x="242.6" y="761.6" font-size="13.2" fill="#fff" text-anchor="end" textLength="58" lengthAdjust="spacingAndGlyphs">5.00 V/div</text>
<text x="242.6" y="776.4" font-size="13.2" fill="#fff" text-anchor="end" textLength="44" lengthAdjust="spacingAndGlyphs">5.000 V</text>
<rect x="248.2" y="732" width="68.8" height="16" fill="#00ff00"/>
<rect x="248.2" y="748" width="68.8" height="32.5" fill="#404040"/>
<text x="251.2" y="744.7" font-size="13.3" fill="#003000" textLength="15.4" lengthAdjust="spacingAndGlyphs">C4</text>
<rect x="282" y="733" width="12.5" height="13.8" rx="2.6" fill="#000"/>
<text x="288.2" y="742.9" font-size="12" fill="#00ff00" text-anchor="middle" textLength="7.5" lengthAdjust="spacingAndGlyphs">B</text>
<rect x="295.5" y="733" width="18.2" height="13.8" rx="2.6" fill="#000"/>
<text x="304.6" y="742.9" font-size="12" fill="#00ff00" text-anchor="middle" textLength="12.8" lengthAdjust="spacingAndGlyphs">D1</text>
<text x="314.6" y="761.6" font-size="13.2" fill="#fff" text-anchor="end" textLength="37" lengthAdjust="spacingAndGlyphs">20.0 V</text>
<text x="314.6" y="776.4" font-size="13.2" fill="#fff" text-anchor="end" textLength="29" lengthAdjust="spacingAndGlyphs">0 mV</text>
<rect x="320" y="732" width="68.8" height="16" fill="#b4beb4"/>
<rect x="320" y="748" width="68.8" height="32.5" fill="#404040"/>
<text x="323" y="744.7" font-size="13.3" fill="#202820" textLength="15.4" lengthAdjust="spacingAndGlyphs">C5</text>
<rect x="354.5" y="733" width="11.8" height="13.8" rx="2.6" fill="#000"/>
<text x="360.4" y="742.9" font-size="12" fill="#b4beb4" text-anchor="middle" textLength="6.8" lengthAdjust="spacingAndGlyphs">B</text>
<rect x="367.5" y="733" width="18" height="13.8" rx="2.6" fill="#000"/>
<text x="376.5" y="742.9" font-size="12" fill="#b4beb4" text-anchor="middle" textLength="12.5" lengthAdjust="spacingAndGlyphs">D1</text>
<text x="386.4" y="761.6" font-size="13.2" fill="#fff" text-anchor="end" textLength="37" lengthAdjust="spacingAndGlyphs">20.0 V</text>
<text x="386.4" y="776.4" font-size="13.2" fill="#fff" text-anchor="end" textLength="30" lengthAdjust="spacingAndGlyphs">-20 V</text>
<rect x="392" y="732" width="69.2" height="16" fill="#ff0000"/>
<rect x="392" y="748" width="69.2" height="32.5" fill="#404040"/>
<text x="395" y="744.7" font-size="13.3" fill="#4a0000" textLength="15.4" lengthAdjust="spacingAndGlyphs">C6</text>
<rect x="433.8" y="733" width="11.2" height="13.8" rx="2.6" fill="#000"/>
<text x="439.4" y="742.9" font-size="12" fill="#ff0000" text-anchor="middle" textLength="6.2" lengthAdjust="spacingAndGlyphs">B</text>
<rect x="446.2" y="733" width="12" height="13.8" rx="2.6" fill="#000"/>
<text x="452.2" y="742.9" font-size="12" fill="#ff0000" text-anchor="middle" textLength="7" lengthAdjust="spacingAndGlyphs">D</text>
<text x="458.9" y="761.6" font-size="13.2" fill="#fff" text-anchor="end" textLength="37" lengthAdjust="spacingAndGlyphs">1.00 A</text>
<text x="458.9" y="776.4" font-size="13.2" fill="#fff" text-anchor="end" textLength="33" lengthAdjust="spacingAndGlyphs">-2.0 A</text>
<rect x="464.2" y="732" width="68.8" height="16" fill="#80ffff"/>
<rect x="464.2" y="748" width="68.8" height="32.5" fill="#404040"/>
<text x="467.2" y="744.7" font-size="13.3" fill="#003838" textLength="15.4" lengthAdjust="spacingAndGlyphs">C7</text>
<rect x="511.2" y="733" width="18.2" height="13.8" rx="2.6" fill="#000"/>
<text x="520.4" y="742.9" font-size="12" fill="#80ffff" text-anchor="middle" textLength="12.8" lengthAdjust="spacingAndGlyphs">D1</text>
<text x="530.6" y="761.6" font-size="13.2" fill="#fff" text-anchor="end" textLength="37" lengthAdjust="spacingAndGlyphs">20.0 V</text>
<text x="530.6" y="776.4" font-size="13.2" fill="#fff" text-anchor="end" textLength="30" lengthAdjust="spacingAndGlyphs">-60 V</text>
<rect x="536.2" y="732" width="68.8" height="16" fill="#7300e6"/>
<rect x="536.2" y="748" width="68.8" height="32.5" fill="#404040"/>
<text x="539.2" y="744.7" font-size="13.3" fill="#25004a" textLength="15.4" lengthAdjust="spacingAndGlyphs">C8</text>
<rect x="577.5" y="733" width="11.2" height="13.8" rx="2.6" fill="#000"/>
<text x="583.1" y="742.9" font-size="12" fill="#7300e6" text-anchor="middle" textLength="6.2" lengthAdjust="spacingAndGlyphs">B</text>
<rect x="590" y="733" width="12" height="13.8" rx="2.6" fill="#000"/>
<text x="596" y="742.9" font-size="12" fill="#7300e6" text-anchor="middle" textLength="7" lengthAdjust="spacingAndGlyphs">D</text>
<text x="602.6" y="761.6" font-size="13.2" fill="#fff" text-anchor="end" textLength="37" lengthAdjust="spacingAndGlyphs">1.00 A</text>
<text x="602.6" y="776.4" font-size="13.2" fill="#fff" text-anchor="end" textLength="33" lengthAdjust="spacingAndGlyphs">-3.0 A</text>
<rect x="608.75" y="732.5" width="68" height="48" fill="none" stroke="#555" stroke-width="1" stroke-dasharray="3 3"/>
<rect x="1003.25" y="732" width="56.25" height="15.5" fill="#00ff00"/><rect x="1003.25" y="747.5" width="56.25" height="33" fill="#404040"/>
<text x="1031.4" y="745" font-size="14.5" font-weight="bold" fill="#000" text-anchor="middle" textLength="19" lengthAdjust="spacingAndGlyphs">HD</text>
<text x="1031.8" y="767.5" font-size="13.2" fill="#fff" text-anchor="middle" textLength="40" lengthAdjust="spacingAndGlyphs">12 Bits</text>
<rect x="1063.25" y="732" width="111.25" height="15" fill="#c6c6c6"/><rect x="1063.25" y="747" width="111.25" height="33.5" fill="#404040"/>
<text x="1066.2" y="744.7" font-size="13.2" fill="#111" textLength="35" lengthAdjust="spacingAndGlyphs">Tbase</text>
<text x="1173.3" y="744.7" font-size="13.2" fill="#111" text-anchor="end" textLength="43" lengthAdjust="spacingAndGlyphs">-5.5 ms</text>
<text x="1173.3" y="761.6" font-size="13.2" fill="#fff" text-anchor="end" textLength="67" lengthAdjust="spacingAndGlyphs">5.00 ms/div</text>
<text x="1066.2" y="776.4" font-size="13.2" fill="#fff" textLength="30" lengthAdjust="spacingAndGlyphs">5 MS</text>
<text x="1173.3" y="776.4" font-size="13.2" fill="#fff" text-anchor="end" textLength="55" lengthAdjust="spacingAndGlyphs">100 MS/s</text>
<rect x="1178.25" y="732" width="96.25" height="15" fill="#c6c6c6"/><rect x="1178.25" y="747" width="96.25" height="33.5" fill="#404040"/>
<text x="1181.2" y="744.7" font-size="13.2" fill="#111" textLength="41" lengthAdjust="spacingAndGlyphs">Trigger</text>
<rect x="1228.8" y="733" width="20" height="13.6" rx="2.6" fill="#000"/>
<text x="1238.8" y="742.9" font-size="12" fill="#c6c6c6" text-anchor="middle" textLength="14" lengthAdjust="spacingAndGlyphs">C6</text>
<rect x="1251.2" y="733" width="21.2" height="13.6" rx="2.6" fill="#000"/>
<text x="1261.9" y="742.9" font-size="12" fill="#c6c6c6" text-anchor="middle" textLength="15.2" lengthAdjust="spacingAndGlyphs">DC</text>
<text x="1181.2" y="761.6" font-size="13.2" fill="#fff" textLength="27.5" lengthAdjust="spacingAndGlyphs">Stop</text>
<text x="1272.5" y="761.6" font-size="13.2" fill="#fff" text-anchor="end" textLength="37" lengthAdjust="spacingAndGlyphs">1.37 A</text>
<text x="1181.2" y="776.4" font-size="13.2" fill="#fff" textLength="30" lengthAdjust="spacingAndGlyphs">Edge</text>
<text x="1272.5" y="776.4" font-size="13.2" fill="#fff" text-anchor="end" textLength="45" lengthAdjust="spacingAndGlyphs">Positive</text>
<rect x="0" y="782.9" width="1280" height="1.4" fill="#5c5c5c"/>
<text x="7.5" y="796.3" font-size="13.2" font-weight="bold" fill="#111" textLength="65.5" lengthAdjust="spacingAndGlyphs">TELEDYNE</text>
<text x="77.8" y="796.3" font-size="13.2" fill="#111" textLength="44.7" lengthAdjust="spacingAndGlyphs">LECROY</text>
<text x="1132.5" y="795" font-size="12" fill="#111" textLength="128.7" lengthAdjust="spacingAndGlyphs">10/11/2018 10:07:22 AM</text>
<rect x="1262.5" y="785" width="1" height="13" fill="#222"/>
</g>
</svg></body></html>
